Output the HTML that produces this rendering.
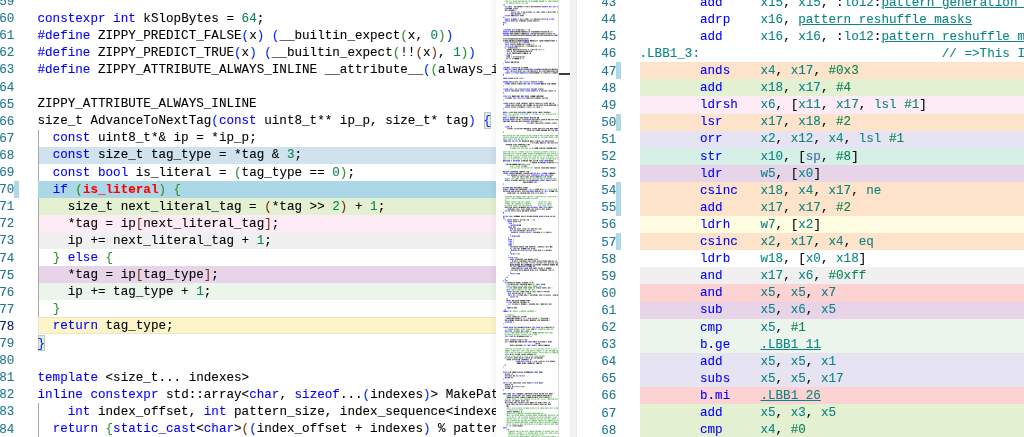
<!DOCTYPE html><html><head><meta charset="utf-8"><style>
html,body{margin:0;padding:0}
body{width:1024px;height:437px;overflow:hidden;position:relative;background:#fff;font-family:"Liberation Mono",monospace;font-size:12.6px;-webkit-text-stroke:0.1px}
#le{will-change:transform;position:absolute;left:0;top:0;width:496px;height:437px;overflow:hidden}
#re{will-change:transform;position:absolute;left:577px;top:0;width:447px;height:437px;overflow:hidden}
.bg{position:absolute;right:0;height:17.1px}
#re .bg{right:-10px}
.ig{position:absolute;width:1px;background:#a8a8a8}
.gb{position:absolute;width:5px;height:17.1px;background:#add8e6}
.bm{position:absolute;width:6.5px;height:16.8px;border:1px solid #c4c4c4;background:#e3ede3;box-sizing:border-box;margin-top:0px}
.ln{position:absolute;text-align:right;color:#237893;height:17.1px;line-height:17.1px;white-space:pre}
.ln.act{color:#0b216f}
.tl{position:absolute;white-space:pre;height:17.1px;line-height:17.1px;color:#000}
.k{color:#0000ff} .n{color:#098658} .b1{color:#0431fa} .b2{color:#319331} .b3{color:#7b3814}
.red{color:#ff0000;font-weight:bold} .t{color:#0e8585} .p{color:#4864aa}
.lk{color:#0e8585;text-decoration:underline;text-underline-offset:1px;text-decoration-thickness:1.2px}
#mm{position:absolute;left:496px;top:0;width:62px;height:437px;background:#fff;overflow:hidden}
#mmsh{position:absolute;left:490px;top:0;width:6px;height:437px;background:linear-gradient(to right,rgba(0,0,0,0),rgba(0,0,0,0.045))}
#mmb{position:absolute;left:558px;top:0;width:1px;height:437px;background:#dddddd}
#ovr{position:absolute;left:559px;top:0;width:11px;height:437px;background:#fff}
#cur{position:absolute;left:0;top:73px;width:11px;height:2px;background:#3c3c3c}
#spl{position:absolute;left:570px;top:0;width:7px;height:437px;background:linear-gradient(to right,#ebebeb,#f3f3f3 35%,#f3f3f3 70%,#e9e9e9)}
</style></head><body><div id="le"><div class="bg" style="top:147px;height:17px;left:38.0px;background:#d0e2ee"></div><div class="bg" style="top:198px;height:17px;left:38.0px;background:#e3f1d2"></div><div class="bg" style="top:215px;height:17px;left:38.0px;background:#fdebf5"></div><div class="bg" style="top:232px;height:17px;left:38.0px;background:#f0f0f0"></div><div class="bg" style="top:266px;height:17px;left:38.0px;background:#e7d4e8"></div><div class="bg" style="top:283px;height:17px;left:38.0px;background:#ebf5eb"></div><div class="ig" style="left:38.0px;top:129.50px;height:188.10px"></div><div style="position:absolute;left:38.0px;right:0;top:317.20px;height:17.30px;box-sizing:border-box;border:1.8px solid #ece6c6;border-right:none;background:#fcf5c9"></div><div class="ig" style="left:38.0px;top:403.10px;height:34.20px"></div><div class="bg" style="top:181px;height:17px;left:38.0px;background:#acd7e6"></div><div class="gb" style="left:14px;top:180.80px"></div><div class="bm" style="left:484.10px;top:112.40px"></div><div class="bm" style="left:38.00px;top:334.70px"></div><div class="ln" style="top:-6.00px;left:-20.70px;width:35px">59</div><div class="ln" style="top:11.10px;left:-20.70px;width:35px">60</div><div class="tl" style="top:10.60px;left:37.50px"><span class="k">constexpr</span> <span class="k">int</span> kSlopBytes = <span class="n">64</span>;</div><div class="ln" style="top:28.20px;left:-20.70px;width:35px">61</div><div class="tl" style="top:27.70px;left:37.50px"><span class="k">#define</span> ZIPPY_PREDICT_FALSE<span class="b1">(</span>x<span class="b1">)</span> <span class="b1">(</span>__builtin_expect<span class="b2">(</span>x, <span class="n">0</span><span class="b2">)</span><span class="b1">)</span></div><div class="ln" style="top:45.30px;left:-20.70px;width:35px">62</div><div class="tl" style="top:44.80px;left:37.50px"><span class="k">#define</span> ZIPPY_PREDICT_TRUE<span class="b1">(</span>x<span class="b1">)</span> <span class="b1">(</span>__builtin_expect<span class="b2">(</span>!!<span class="b3">(</span>x<span class="b3">)</span>, <span class="n">1</span><span class="b2">)</span><span class="b1">)</span></div><div class="ln" style="top:62.40px;left:-20.70px;width:35px">63</div><div class="tl" style="top:61.90px;left:37.50px"><span class="k">#define</span> ZIPPY_ATTRIBUTE_ALWAYS_INLINE __attribute__<span class="b1">(</span><span class="b2">(</span>always_inline<span class="b2">)</span><span class="b1">)</span></div><div class="ln" style="top:79.50px;left:-20.70px;width:35px">64</div><div class="ln" style="top:96.60px;left:-20.70px;width:35px">65</div><div class="tl" style="top:96.10px;left:37.50px">ZIPPY_ATTRIBUTE_ALWAYS_INLINE</div><div class="ln" style="top:113.70px;left:-20.70px;width:35px">66</div><div class="tl" style="top:113.20px;left:37.50px">size_t AdvanceToNextTag<span class="b1">(</span><span class="k">const</span> uint8_t** ip_p, size_t* tag<span class="b1">)</span> <span class="b1">{</span></div><div class="ln" style="top:130.80px;left:-20.70px;width:35px">67</div><div class="tl" style="top:130.30px;left:37.50px">  <span class="k">const</span> uint8_t*&amp; ip = *ip_p;</div><div class="ln" style="top:147.90px;left:-20.70px;width:35px">68</div><div class="tl" style="top:147.40px;left:37.50px">  <span class="k">const</span> size_t tag_type = *tag &amp; <span class="n">3</span>;</div><div class="ln" style="top:165.00px;left:-20.70px;width:35px">69</div><div class="tl" style="top:164.50px;left:37.50px">  <span class="k">const</span> <span class="k">bool</span> is_literal = <span class="b2">(</span>tag_type == <span class="n">0</span><span class="b2">)</span>;</div><div class="ln" style="top:182.10px;left:-20.70px;width:35px">70</div><div class="tl" style="top:181.60px;left:37.50px">  <span class="k">if</span> <span class="b2">(</span><span class="red">is_literal</span><span class="b2">)</span> <span class="b2">{</span></div><div class="ln" style="top:199.20px;left:-20.70px;width:35px">71</div><div class="tl" style="top:198.70px;left:37.50px">    size_t next_literal_tag = <span class="b3">(</span>*tag &gt;&gt; <span class="n">2</span><span class="b3">)</span> + <span class="n">1</span>;</div><div class="ln" style="top:216.30px;left:-20.70px;width:35px">72</div><div class="tl" style="top:215.80px;left:37.50px">    *tag = ip<span class="b3">[</span>next_literal_tag<span class="b3">]</span>;</div><div class="ln" style="top:233.40px;left:-20.70px;width:35px">73</div><div class="tl" style="top:232.90px;left:37.50px">    ip += next_literal_tag + <span class="n">1</span>;</div><div class="ln" style="top:250.50px;left:-20.70px;width:35px">74</div><div class="tl" style="top:250.00px;left:37.50px">  <span class="b2">}</span> <span class="k">else</span> <span class="b2">{</span></div><div class="ln" style="top:267.60px;left:-20.70px;width:35px">75</div><div class="tl" style="top:267.10px;left:37.50px">    *tag = ip<span class="b3">[</span>tag_type<span class="b3">]</span>;</div><div class="ln" style="top:284.70px;left:-20.70px;width:35px">76</div><div class="tl" style="top:284.20px;left:37.50px">    ip += tag_type + <span class="n">1</span>;</div><div class="ln" style="top:301.80px;left:-20.70px;width:35px">77</div><div class="tl" style="top:301.30px;left:37.50px">  <span class="b2">}</span></div><div class="ln act" style="top:318.90px;left:-20.70px;width:35px">78</div><div class="tl" style="top:318.40px;left:37.50px">  <span class="k">return</span> tag_type;</div><div class="ln" style="top:336.00px;left:-20.70px;width:35px">79</div><div class="tl" style="top:335.50px;left:37.50px"><span class="b1">}</span></div><div class="ln" style="top:353.10px;left:-20.70px;width:35px">80</div><div class="ln" style="top:370.20px;left:-20.70px;width:35px">81</div><div class="tl" style="top:369.70px;left:37.50px"><span class="k">template</span> &lt;size_t... indexes&gt;</div><div class="ln" style="top:387.30px;left:-20.70px;width:35px">82</div><div class="tl" style="top:386.80px;left:37.50px"><span class="k">inline</span> <span class="k">constexpr</span> std::array&lt;<span class="k">char</span>, <span class="k">sizeof</span>...<span class="b1">(</span>indexes<span class="b1">)</span>&gt; MakePatternSelectionMask<span class="b1">(</span></div><div class="ln" style="top:404.40px;left:-20.70px;width:35px">83</div><div class="tl" style="top:403.90px;left:37.50px">    <span class="k">int</span> index_offset, <span class="k">int</span> pattern_size, index_sequence&lt;indexes...&gt;<span class="b1">)</span> <span class="b1">{</span></div><div class="ln" style="top:421.50px;left:-20.70px;width:35px">84</div><div class="tl" style="top:421.00px;left:37.50px">  <span class="k">return</span> <span class="b2">{</span><span class="k">static_cast</span>&lt;<span class="k">char</span>&gt;<span class="b3">(</span><span class="b1">(</span>index_offset + indexes<span class="b1">)</span> % pattern_size<span class="b3">)</span>...<span class="b2">}</span>;</div></div><div id="mm"><svg width="62" height="437" style="position:absolute;left:0;top:0"><path fill="#000000" fill-opacity="0.38" d="M17.8 6.0h.8v1.3h-.8zM25.9 6.0h.8v1.3h-.8zM28.6 6.0h.8v1.3h-.8zM29.5 6.0h.8v1.3h-.8zM32.2 6.0h.8v1.3h-.8zM33.1 6.0h.8v1.3h-.8zM9.7 7.8h.8v1.3h-.8zM16.9 7.8h.8v1.3h-.8zM17.8 7.8h.8v1.3h-.8zM20.5 7.8h.8v1.3h-.8zM17.8 9.6h.8v1.3h-.8zM31.3 11.4h.8v1.3h-.8zM40.3 11.4h.8v1.3h-.8zM43.0 11.4h.8v1.3h-.8zM44.8 11.4h.8v1.3h-.8zM50.2 11.4h.8v1.3h-.8zM51.1 11.4h.8v1.3h-.8zM52.9 11.4h.8v1.3h-.8zM59.2 11.4h.8v1.3h-.8zM61.0 11.4h.8v1.3h-.8zM20.5 13.2h.8v1.3h-.8zM25.9 13.2h.8v1.3h-.8zM27.7 13.2h.8v1.3h-.8zM28.6 13.2h.8v1.3h-.8zM18.7 15.0h.8v1.3h-.8zM20.5 15.0h.8v1.3h-.8zM21.4 15.0h.8v1.3h-.8zM25.0 18.5h.8v1.3h-.8zM25.9 18.5h.8v1.3h-.8zM26.8 18.5h.8v1.3h-.8zM32.2 18.5h.8v1.3h-.8zM34.0 18.5h.8v1.3h-.8zM34.9 18.5h.8v1.3h-.8zM35.8 18.5h.8v1.3h-.8zM37.6 18.5h.8v1.3h-.8zM40.3 18.5h.8v1.3h-.8zM47.5 18.5h.8v1.3h-.8zM18.7 20.3h.8v1.3h-.8zM21.4 20.3h.8v1.3h-.8zM30.4 20.3h.8v1.3h-.8zM32.2 20.3h.8v1.3h-.8zM40.3 20.3h.8v1.3h-.8zM42.1 20.3h.8v1.3h-.8zM43.0 20.3h.8v1.3h-.8zM21.4 29.3h.8v1.3h-.8zM24.1 29.3h.8v1.3h-.8zM27.7 29.3h.8v1.3h-.8zM29.5 29.3h.8v1.3h-.8zM16.9 31.1h.8v1.3h-.8zM24.1 31.1h.8v1.3h-.8zM25.0 31.1h.8v1.3h-.8zM30.4 31.1h.8v1.3h-.8zM32.2 31.1h.8v1.3h-.8zM35.8 31.1h.8v1.3h-.8zM38.5 31.1h.8v1.3h-.8zM43.0 31.1h.8v1.3h-.8zM43.9 31.1h.8v1.3h-.8zM44.8 31.1h.8v1.3h-.8zM47.5 31.1h.8v1.3h-.8zM51.1 31.1h.8v1.3h-.8zM16.9 32.9h.8v1.3h-.8zM17.8 32.9h.8v1.3h-.8zM22.3 32.9h.8v1.3h-.8zM23.2 32.9h.8v1.3h-.8zM24.1 32.9h.8v1.3h-.8zM25.0 32.9h.8v1.3h-.8zM28.6 32.9h.8v1.3h-.8zM34.9 32.9h.8v1.3h-.8zM36.7 32.9h.8v1.3h-.8zM40.3 32.9h.8v1.3h-.8zM43.9 32.9h.8v1.3h-.8zM48.4 32.9h.8v1.3h-.8zM51.1 32.9h.8v1.3h-.8zM16.0 34.7h.8v1.3h-.8zM21.4 34.7h.8v1.3h-.8zM24.1 34.7h.8v1.3h-.8zM26.8 34.7h.8v1.3h-.8zM28.6 34.7h.8v1.3h-.8zM35.8 34.7h.8v1.3h-.8zM36.7 34.7h.8v1.3h-.8zM43.0 34.7h.8v1.3h-.8zM45.7 34.7h.8v1.3h-.8zM47.5 34.7h.8v1.3h-.8zM55.6 34.7h.8v1.3h-.8zM56.5 34.7h.8v1.3h-.8zM57.4 34.7h.8v1.3h-.8zM58.3 34.7h.8v1.3h-.8zM61.0 34.7h.8v1.3h-.8zM61.9 34.7h.8v1.3h-.8zM7.9 38.3h.8v1.3h-.8zM10.6 38.3h.8v1.3h-.8zM11.5 38.3h.8v1.3h-.8zM13.3 38.3h.8v1.3h-.8zM22.3 38.3h.8v1.3h-.8zM26.8 38.3h.8v1.3h-.8zM32.2 38.3h.8v1.3h-.8zM7.9 40.1h.8v1.3h-.8zM15.1 40.1h.8v1.3h-.8zM17.8 40.1h.8v1.3h-.8zM19.6 40.1h.8v1.3h-.8zM20.5 40.1h.8v1.3h-.8zM25.9 40.1h.8v1.3h-.8zM38.5 40.1h.8v1.3h-.8zM39.4 40.1h.8v1.3h-.8zM40.3 40.1h.8v1.3h-.8zM41.2 40.1h.8v1.3h-.8zM43.0 40.1h.8v1.3h-.8zM52.9 40.1h.8v1.3h-.8zM15.1 41.8h.8v1.3h-.8zM16.0 41.8h.8v1.3h-.8zM16.9 41.8h.8v1.3h-.8zM18.7 41.8h.8v1.3h-.8zM19.6 41.8h.8v1.3h-.8zM20.5 41.8h.8v1.3h-.8zM21.4 41.8h.8v1.3h-.8zM24.1 41.8h.8v1.3h-.8zM25.9 41.8h.8v1.3h-.8zM30.4 41.8h.8v1.3h-.8zM14.2 43.6h.8v1.3h-.8zM16.9 43.6h.8v1.3h-.8zM17.8 43.6h.8v1.3h-.8zM20.5 43.6h.8v1.3h-.8zM25.0 43.6h.8v1.3h-.8zM25.9 43.6h.8v1.3h-.8zM31.3 43.6h.8v1.3h-.8zM37.6 43.6h.8v1.3h-.8zM21.4 45.4h.8v1.3h-.8zM25.0 45.4h.8v1.3h-.8zM25.9 45.4h.8v1.3h-.8zM28.6 45.4h.8v1.3h-.8zM34.0 45.4h.8v1.3h-.8zM16.9 47.2h.8v1.3h-.8zM18.7 47.2h.8v1.3h-.8zM10.6 49.0h.8v1.3h-.8zM20.5 49.0h.8v1.3h-.8zM23.2 49.0h.8v1.3h-.8zM25.0 49.0h.8v1.3h-.8zM25.9 49.0h.8v1.3h-.8zM27.7 49.0h.8v1.3h-.8zM28.6 49.0h.8v1.3h-.8zM29.5 49.0h.8v1.3h-.8zM34.9 49.0h.8v1.3h-.8zM36.7 49.0h.8v1.3h-.8zM47.5 49.0h.8v1.3h-.8zM10.6 50.8h.8v1.3h-.8zM12.4 50.8h.8v1.3h-.8zM13.3 50.8h.8v1.3h-.8zM16.9 50.8h.8v1.3h-.8zM20.5 50.8h.8v1.3h-.8zM28.6 50.8h.8v1.3h-.8zM32.2 50.8h.8v1.3h-.8zM10.6 52.6h.8v1.3h-.8zM14.2 52.6h.8v1.3h-.8zM20.5 52.6h.8v1.3h-.8zM25.0 52.6h.8v1.3h-.8zM25.9 52.6h.8v1.3h-.8zM26.8 52.6h.8v1.3h-.8zM15.1 56.2h.8v1.3h-.8zM17.8 56.2h.8v1.3h-.8zM20.5 56.2h.8v1.3h-.8zM23.2 56.2h.8v1.3h-.8zM25.0 56.2h.8v1.3h-.8zM11.5 58.0h.8v1.3h-.8zM13.3 58.0h.8v1.3h-.8zM14.2 58.0h.8v1.3h-.8zM16.9 58.0h.8v1.3h-.8zM17.8 58.0h.8v1.3h-.8zM16.9 61.6h.8v1.3h-.8zM17.8 61.6h.8v1.3h-.8zM19.6 61.6h.8v1.3h-.8zM20.5 61.6h.8v1.3h-.8zM15.1 66.9h.8v1.3h-.8zM16.0 66.9h.8v1.3h-.8zM18.7 66.9h.8v1.3h-.8zM20.5 66.9h.8v1.3h-.8zM22.3 66.9h.8v1.3h-.8zM25.9 66.9h.8v1.3h-.8zM26.8 66.9h.8v1.3h-.8zM26.8 68.7h.8v1.3h-.8zM27.7 68.7h.8v1.3h-.8zM44.8 68.7h.8v1.3h-.8zM48.4 68.7h.8v1.3h-.8zM51.1 68.7h.8v1.3h-.8zM58.3 68.7h.8v1.3h-.8zM60.1 68.7h.8v1.3h-.8zM63.7 68.7h.8v1.3h-.8zM68.2 68.7h.8v1.3h-.8zM69.1 68.7h.8v1.3h-.8zM70.0 68.7h.8v1.3h-.8zM71.8 68.7h.8v1.3h-.8zM72.7 68.7h.8v1.3h-.8zM73.6 68.7h.8v1.3h-.8zM74.5 68.7h.8v1.3h-.8zM14.2 70.5h.8v1.3h-.8zM16.0 70.5h.8v1.3h-.8zM16.9 70.5h.8v1.3h-.8zM18.7 70.5h.8v1.3h-.8zM20.5 70.5h.8v1.3h-.8zM21.4 70.5h.8v1.3h-.8zM23.2 70.5h.8v1.3h-.8zM25.0 70.5h.8v1.3h-.8zM30.4 70.5h.8v1.3h-.8zM31.3 70.5h.8v1.3h-.8zM33.1 70.5h.8v1.3h-.8zM34.0 70.5h.8v1.3h-.8zM36.7 70.5h.8v1.3h-.8zM40.3 70.5h.8v1.3h-.8zM43.9 70.5h.8v1.3h-.8zM44.8 70.5h.8v1.3h-.8zM45.7 70.5h.8v1.3h-.8zM46.6 70.5h.8v1.3h-.8zM49.3 70.5h.8v1.3h-.8zM50.2 70.5h.8v1.3h-.8zM53.8 70.5h.8v1.3h-.8zM59.2 70.5h.8v1.3h-.8zM43.0 72.3h.8v1.3h-.8zM46.6 72.3h.8v1.3h-.8zM47.5 72.3h.8v1.3h-.8zM52.0 72.3h.8v1.3h-.8zM62.8 72.3h.8v1.3h-.8zM66.4 72.3h.8v1.3h-.8zM18.7 77.7h.8v1.3h-.8zM19.6 77.7h.8v1.3h-.8zM23.2 77.7h.8v1.3h-.8zM24.1 77.7h.8v1.3h-.8zM25.9 77.7h.8v1.3h-.8zM27.7 77.7h.8v1.3h-.8zM16.0 81.3h.8v1.3h-.8zM21.4 81.3h.8v1.3h-.8zM23.2 81.3h.8v1.3h-.8zM26.8 81.3h.8v1.3h-.8zM27.7 81.3h.8v1.3h-.8zM39.4 81.3h.8v1.3h-.8zM43.0 81.3h.8v1.3h-.8zM46.6 81.3h.8v1.3h-.8zM17.8 83.1h.8v1.3h-.8zM19.6 83.1h.8v1.3h-.8zM22.3 83.1h.8v1.3h-.8zM47.5 83.1h.8v1.3h-.8zM48.4 83.1h.8v1.3h-.8zM52.0 83.1h.8v1.3h-.8zM53.8 83.1h.8v1.3h-.8zM57.4 83.1h.8v1.3h-.8zM7.0 84.9h.8v1.3h-.8zM13.3 88.4h.8v1.3h-.8zM16.0 88.4h.8v1.3h-.8zM16.9 88.4h.8v1.3h-.8zM18.7 88.4h.8v1.3h-.8zM22.3 88.4h.8v1.3h-.8zM23.2 88.4h.8v1.3h-.8zM25.9 88.4h.8v1.3h-.8zM27.7 88.4h.8v1.3h-.8zM37.6 88.4h.8v1.3h-.8zM43.0 88.4h.8v1.3h-.8zM45.7 88.4h.8v1.3h-.8zM17.8 90.2h.8v1.3h-.8zM47.5 90.2h.8v1.3h-.8zM52.0 90.2h.8v1.3h-.8zM55.6 90.2h.8v1.3h-.8zM58.3 90.2h.8v1.3h-.8zM19.6 95.6h.8v1.3h-.8zM20.5 95.6h.8v1.3h-.8zM23.2 95.6h.8v1.3h-.8zM28.6 95.6h.8v1.3h-.8zM30.4 95.6h.8v1.3h-.8zM34.0 95.6h.8v1.3h-.8zM34.9 95.6h.8v1.3h-.8zM40.3 95.6h.8v1.3h-.8zM43.0 95.6h.8v1.3h-.8zM8.8 97.4h.8v1.3h-.8zM10.6 97.4h.8v1.3h-.8zM34.0 97.4h.8v1.3h-.8zM38.5 97.4h.8v1.3h-.8zM39.4 97.4h.8v1.3h-.8zM43.9 97.4h.8v1.3h-.8zM48.4 97.4h.8v1.3h-.8zM49.3 97.4h.8v1.3h-.8zM7.0 99.2h.8v1.3h-.8zM14.2 102.8h.8v1.3h-.8zM16.0 102.8h.8v1.3h-.8zM16.9 102.8h.8v1.3h-.8zM19.6 102.8h.8v1.3h-.8zM20.5 102.8h.8v1.3h-.8zM25.0 102.8h.8v1.3h-.8zM31.3 102.8h.8v1.3h-.8zM35.8 102.8h.8v1.3h-.8zM37.6 102.8h.8v1.3h-.8zM43.0 102.8h.8v1.3h-.8zM43.9 102.8h.8v1.3h-.8zM44.8 102.8h.8v1.3h-.8zM47.5 102.8h.8v1.3h-.8zM49.3 102.8h.8v1.3h-.8zM9.7 104.6h.8v1.3h-.8zM12.4 104.6h.8v1.3h-.8zM17.8 104.6h.8v1.3h-.8zM20.5 104.6h.8v1.3h-.8zM23.2 104.6h.8v1.3h-.8zM26.8 104.6h.8v1.3h-.8zM30.4 104.6h.8v1.3h-.8zM32.2 104.6h.8v1.3h-.8zM36.7 104.6h.8v1.3h-.8zM43.0 104.6h.8v1.3h-.8zM44.8 104.6h.8v1.3h-.8zM46.6 104.6h.8v1.3h-.8zM49.3 104.6h.8v1.3h-.8zM50.2 104.6h.8v1.3h-.8zM56.5 104.6h.8v1.3h-.8zM61.0 104.6h.8v1.3h-.8zM61.9 104.6h.8v1.3h-.8zM16.9 106.4h.8v1.3h-.8zM19.6 106.4h.8v1.3h-.8zM22.3 106.4h.8v1.3h-.8zM27.7 106.4h.8v1.3h-.8zM30.4 106.4h.8v1.3h-.8zM31.3 106.4h.8v1.3h-.8zM34.0 106.4h.8v1.3h-.8zM34.9 106.4h.8v1.3h-.8zM36.7 106.4h.8v1.3h-.8zM37.6 106.4h.8v1.3h-.8zM40.3 106.4h.8v1.3h-.8zM7.0 108.1h.8v1.3h-.8zM12.4 111.7h.8v1.3h-.8zM13.3 111.7h.8v1.3h-.8zM14.2 111.7h.8v1.3h-.8zM18.7 111.7h.8v1.3h-.8zM25.0 111.7h.8v1.3h-.8zM34.9 111.7h.8v1.3h-.8zM42.1 111.7h.8v1.3h-.8zM45.7 111.7h.8v1.3h-.8zM47.5 111.7h.8v1.3h-.8zM52.9 111.7h.8v1.3h-.8zM53.8 111.7h.8v1.3h-.8zM23.2 117.1h.8v1.3h-.8zM30.4 117.1h.8v1.3h-.8zM32.2 117.1h.8v1.3h-.8zM34.9 117.1h.8v1.3h-.8zM36.7 117.1h.8v1.3h-.8zM37.6 117.1h.8v1.3h-.8zM21.4 118.9h.8v1.3h-.8zM22.3 118.9h.8v1.3h-.8zM24.1 118.9h.8v1.3h-.8zM26.8 118.9h.8v1.3h-.8zM27.7 118.9h.8v1.3h-.8zM38.5 118.9h.8v1.3h-.8zM39.4 118.9h.8v1.3h-.8zM42.1 118.9h.8v1.3h-.8zM44.8 118.9h.8v1.3h-.8zM49.3 118.9h.8v1.3h-.8zM53.8 118.9h.8v1.3h-.8zM54.7 118.9h.8v1.3h-.8zM55.6 118.9h.8v1.3h-.8zM9.7 120.7h.8v1.3h-.8zM10.6 120.7h.8v1.3h-.8zM17.8 120.7h.8v1.3h-.8zM18.7 120.7h.8v1.3h-.8zM35.8 120.7h.8v1.3h-.8zM37.6 120.7h.8v1.3h-.8zM41.2 120.7h.8v1.3h-.8zM42.1 120.7h.8v1.3h-.8zM43.9 120.7h.8v1.3h-.8zM32.2 122.5h.8v1.3h-.8zM33.1 122.5h.8v1.3h-.8zM34.0 122.5h.8v1.3h-.8zM37.6 122.5h.8v1.3h-.8zM42.1 122.5h.8v1.3h-.8zM44.8 122.5h.8v1.3h-.8zM48.4 122.5h.8v1.3h-.8zM55.6 122.5h.8v1.3h-.8zM60.1 122.5h.8v1.3h-.8zM12.4 127.9h.8v1.3h-.8zM14.2 127.9h.8v1.3h-.8zM16.0 127.9h.8v1.3h-.8zM17.8 127.9h.8v1.3h-.8zM18.7 127.9h.8v1.3h-.8zM23.2 127.9h.8v1.3h-.8zM25.9 127.9h.8v1.3h-.8zM33.1 127.9h.8v1.3h-.8zM35.8 127.9h.8v1.3h-.8zM36.7 127.9h.8v1.3h-.8zM38.5 127.9h.8v1.3h-.8zM46.6 127.9h.8v1.3h-.8zM47.5 127.9h.8v1.3h-.8zM33.1 129.7h.8v1.3h-.8zM35.8 129.7h.8v1.3h-.8zM39.4 129.7h.8v1.3h-.8zM47.5 129.7h.8v1.3h-.8zM53.8 129.7h.8v1.3h-.8zM56.5 129.7h.8v1.3h-.8zM27.7 140.4h.8v1.3h-.8zM30.4 140.4h.8v1.3h-.8zM31.3 140.4h.8v1.3h-.8zM38.5 140.4h.8v1.3h-.8zM39.4 140.4h.8v1.3h-.8zM42.1 140.4h.8v1.3h-.8zM43.9 140.4h.8v1.3h-.8zM54.7 140.4h.8v1.3h-.8zM57.4 140.4h.8v1.3h-.8zM36.7 142.2h.8v1.3h-.8zM37.6 142.2h.8v1.3h-.8zM38.5 142.2h.8v1.3h-.8zM39.4 142.2h.8v1.3h-.8zM47.5 142.2h.8v1.3h-.8zM48.4 142.2h.8v1.3h-.8zM51.1 142.2h.8v1.3h-.8zM57.4 142.2h.8v1.3h-.8zM58.3 142.2h.8v1.3h-.8zM60.1 142.2h.8v1.3h-.8zM17.8 144.0h.8v1.3h-.8zM25.9 144.0h.8v1.3h-.8zM30.4 144.0h.8v1.3h-.8zM31.3 144.0h.8v1.3h-.8zM27.7 145.8h.8v1.3h-.8zM30.4 145.8h.8v1.3h-.8zM43.0 147.6h.8v1.3h-.8zM43.9 147.6h.8v1.3h-.8zM46.6 147.6h.8v1.3h-.8zM47.5 147.6h.8v1.3h-.8zM50.2 147.6h.8v1.3h-.8zM25.0 160.1h.8v1.3h-.8zM25.9 160.1h.8v1.3h-.8zM29.5 160.1h.8v1.3h-.8zM37.6 160.1h.8v1.3h-.8zM39.4 160.1h.8v1.3h-.8zM40.3 160.1h.8v1.3h-.8zM43.0 160.1h.8v1.3h-.8zM43.9 160.1h.8v1.3h-.8zM39.4 161.9h.8v1.3h-.8zM43.0 161.9h.8v1.3h-.8zM43.9 161.9h.8v1.3h-.8zM46.6 161.9h.8v1.3h-.8zM49.3 161.9h.8v1.3h-.8zM52.0 161.9h.8v1.3h-.8zM55.6 161.9h.8v1.3h-.8zM59.2 161.9h.8v1.3h-.8zM60.1 161.9h.8v1.3h-.8zM61.0 161.9h.8v1.3h-.8zM9.7 163.7h.8v1.3h-.8zM15.1 163.7h.8v1.3h-.8zM25.0 163.7h.8v1.3h-.8zM26.8 163.7h.8v1.3h-.8zM27.7 163.7h.8v1.3h-.8zM30.4 163.7h.8v1.3h-.8zM31.3 163.7h.8v1.3h-.8zM32.2 163.7h.8v1.3h-.8zM41.2 167.3h.8v1.3h-.8zM44.8 167.3h.8v1.3h-.8zM49.3 167.3h.8v1.3h-.8zM59.2 167.3h.8v1.3h-.8zM8.8 170.9h.8v1.3h-.8zM9.7 170.9h.8v1.3h-.8zM11.5 170.9h.8v1.3h-.8zM14.2 170.9h.8v1.3h-.8zM23.2 170.9h.8v1.3h-.8zM28.6 170.9h.8v1.3h-.8zM30.4 170.9h.8v1.3h-.8zM22.3 172.7h.8v1.3h-.8zM26.8 172.7h.8v1.3h-.8zM27.7 172.7h.8v1.3h-.8zM38.5 172.7h.8v1.3h-.8zM42.1 172.7h.8v1.3h-.8zM43.0 172.7h.8v1.3h-.8zM44.8 172.7h.8v1.3h-.8zM52.0 172.7h.8v1.3h-.8zM12.4 174.5h.8v1.3h-.8zM13.3 174.5h.8v1.3h-.8zM23.2 174.5h.8v1.3h-.8zM24.1 174.5h.8v1.3h-.8zM25.0 174.5h.8v1.3h-.8zM27.7 174.5h.8v1.3h-.8zM30.4 174.5h.8v1.3h-.8zM32.2 174.5h.8v1.3h-.8zM34.9 174.5h.8v1.3h-.8zM54.7 174.5h.8v1.3h-.8zM56.5 174.5h.8v1.3h-.8zM17.8 176.2h.8v1.3h-.8zM21.4 176.2h.8v1.3h-.8zM25.9 176.2h.8v1.3h-.8zM26.8 176.2h.8v1.3h-.8zM32.2 176.2h.8v1.3h-.8zM35.8 176.2h.8v1.3h-.8zM43.0 176.2h.8v1.3h-.8zM46.6 176.2h.8v1.3h-.8zM47.5 176.2h.8v1.3h-.8zM48.4 176.2h.8v1.3h-.8zM52.9 176.2h.8v1.3h-.8zM16.0 179.8h.8v1.3h-.8zM21.4 179.8h.8v1.3h-.8zM25.9 179.8h.8v1.3h-.8zM27.7 179.8h.8v1.3h-.8zM28.6 179.8h.8v1.3h-.8zM31.3 179.8h.8v1.3h-.8zM32.2 179.8h.8v1.3h-.8zM33.1 179.8h.8v1.3h-.8zM56.5 179.8h.8v1.3h-.8zM58.3 179.8h.8v1.3h-.8zM59.2 179.8h.8v1.3h-.8zM60.1 179.8h.8v1.3h-.8zM26.8 181.6h.8v1.3h-.8zM32.2 181.6h.8v1.3h-.8zM36.7 181.6h.8v1.3h-.8zM40.3 181.6h.8v1.3h-.8zM7.9 187.0h.8v1.3h-.8zM8.8 187.0h.8v1.3h-.8zM20.5 187.0h.8v1.3h-.8zM26.8 187.0h.8v1.3h-.8zM31.3 187.0h.8v1.3h-.8zM44.8 188.8h.8v1.3h-.8zM45.7 188.8h.8v1.3h-.8zM8.8 190.6h.8v1.3h-.8zM9.7 190.6h.8v1.3h-.8zM11.5 190.6h.8v1.3h-.8zM12.4 190.6h.8v1.3h-.8zM19.6 190.6h.8v1.3h-.8zM20.5 190.6h.8v1.3h-.8zM23.2 190.6h.8v1.3h-.8zM24.1 190.6h.8v1.3h-.8zM26.8 190.6h.8v1.3h-.8zM30.4 190.6h.8v1.3h-.8zM38.5 190.6h.8v1.3h-.8zM42.1 190.6h.8v1.3h-.8zM43.9 190.6h.8v1.3h-.8zM46.6 190.6h.8v1.3h-.8zM53.8 190.6h.8v1.3h-.8zM59.2 190.6h.8v1.3h-.8zM61.0 190.6h.8v1.3h-.8zM15.1 192.4h.8v1.3h-.8zM16.0 192.4h.8v1.3h-.8zM20.5 192.4h.8v1.3h-.8zM21.4 192.4h.8v1.3h-.8zM27.7 192.4h.8v1.3h-.8zM35.8 192.4h.8v1.3h-.8zM40.3 192.4h.8v1.3h-.8zM41.2 192.4h.8v1.3h-.8zM46.6 192.4h.8v1.3h-.8zM47.5 192.4h.8v1.3h-.8zM49.3 192.4h.8v1.3h-.8zM11.5 206.7h.8v1.3h-.8zM12.4 206.7h.8v1.3h-.8zM14.2 206.7h.8v1.3h-.8zM18.7 206.7h.8v1.3h-.8zM22.3 206.7h.8v1.3h-.8zM24.1 206.7h.8v1.3h-.8zM33.1 206.7h.8v1.3h-.8zM52.0 206.7h.8v1.3h-.8zM54.7 206.7h.8v1.3h-.8zM11.5 208.5h.8v1.3h-.8zM19.6 208.5h.8v1.3h-.8zM20.5 208.5h.8v1.3h-.8zM22.3 208.5h.8v1.3h-.8zM23.2 208.5h.8v1.3h-.8zM25.9 208.5h.8v1.3h-.8zM29.5 208.5h.8v1.3h-.8zM34.9 208.5h.8v1.3h-.8zM37.6 208.5h.8v1.3h-.8zM40.3 208.5h.8v1.3h-.8zM42.1 208.5h.8v1.3h-.8zM43.0 208.5h.8v1.3h-.8zM48.4 208.5h.8v1.3h-.8zM17.8 210.3h.8v1.3h-.8zM18.7 210.3h.8v1.3h-.8zM23.2 210.3h.8v1.3h-.8zM27.7 210.3h.8v1.3h-.8zM28.6 210.3h.8v1.3h-.8zM31.3 210.3h.8v1.3h-.8zM27.7 215.7h.8v1.3h-.8zM29.5 215.7h.8v1.3h-.8zM32.2 215.7h.8v1.3h-.8zM38.5 215.7h.8v1.3h-.8zM49.3 215.7h.8v1.3h-.8zM51.1 215.7h.8v1.3h-.8zM53.8 215.7h.8v1.3h-.8zM20.5 219.3h.8v1.3h-.8zM21.4 219.3h.8v1.3h-.8zM22.3 219.3h.8v1.3h-.8zM25.0 219.3h.8v1.3h-.8zM25.9 219.3h.8v1.3h-.8zM30.4 219.3h.8v1.3h-.8zM38.5 219.3h.8v1.3h-.8zM17.8 221.0h.8v1.3h-.8zM18.7 221.0h.8v1.3h-.8zM22.3 221.0h.8v1.3h-.8zM22.3 224.6h.8v1.3h-.8zM18.7 228.2h.8v1.3h-.8zM25.9 228.2h.8v1.3h-.8zM26.8 228.2h.8v1.3h-.8zM28.6 228.2h.8v1.3h-.8zM31.3 228.2h.8v1.3h-.8zM37.6 228.2h.8v1.3h-.8zM38.5 228.2h.8v1.3h-.8zM42.1 228.2h.8v1.3h-.8zM43.0 228.2h.8v1.3h-.8zM23.2 230.0h.8v1.3h-.8zM25.9 230.0h.8v1.3h-.8zM28.6 230.0h.8v1.3h-.8zM30.4 230.0h.8v1.3h-.8zM32.2 230.0h.8v1.3h-.8zM33.1 230.0h.8v1.3h-.8zM34.0 230.0h.8v1.3h-.8zM37.6 230.0h.8v1.3h-.8zM38.5 230.0h.8v1.3h-.8zM16.9 231.8h.8v1.3h-.8zM19.6 231.8h.8v1.3h-.8zM21.4 231.8h.8v1.3h-.8zM23.2 231.8h.8v1.3h-.8zM40.3 231.8h.8v1.3h-.8zM45.7 231.8h.8v1.3h-.8zM52.9 231.8h.8v1.3h-.8zM53.8 231.8h.8v1.3h-.8zM14.2 233.6h.8v1.3h-.8zM21.4 235.4h.8v1.3h-.8zM16.0 246.1h.8v1.3h-.8zM16.9 246.1h.8v1.3h-.8zM20.5 246.1h.8v1.3h-.8zM36.7 246.1h.8v1.3h-.8zM37.6 246.1h.8v1.3h-.8zM41.2 246.1h.8v1.3h-.8zM42.1 246.1h.8v1.3h-.8zM45.7 246.1h.8v1.3h-.8zM47.5 246.1h.8v1.3h-.8zM49.3 246.1h.8v1.3h-.8zM51.1 246.1h.8v1.3h-.8zM52.0 246.1h.8v1.3h-.8zM23.2 247.9h.8v1.3h-.8zM25.9 247.9h.8v1.3h-.8zM31.3 247.9h.8v1.3h-.8zM35.8 247.9h.8v1.3h-.8zM16.0 249.7h.8v1.3h-.8zM17.8 249.7h.8v1.3h-.8zM23.2 249.7h.8v1.3h-.8zM52.0 249.7h.8v1.3h-.8zM20.5 253.3h.8v1.3h-.8zM21.4 253.3h.8v1.3h-.8zM23.2 253.3h.8v1.3h-.8zM12.4 255.1h.8v1.3h-.8zM18.7 258.7h.8v1.3h-.8zM20.5 258.7h.8v1.3h-.8zM27.7 258.7h.8v1.3h-.8zM37.6 258.7h.8v1.3h-.8zM39.4 258.7h.8v1.3h-.8zM40.3 258.7h.8v1.3h-.8zM16.9 260.5h.8v1.3h-.8zM20.5 260.5h.8v1.3h-.8zM21.4 260.5h.8v1.3h-.8zM23.2 260.5h.8v1.3h-.8zM25.9 260.5h.8v1.3h-.8zM31.3 260.5h.8v1.3h-.8zM36.7 260.5h.8v1.3h-.8zM43.9 260.5h.8v1.3h-.8zM51.1 260.5h.8v1.3h-.8zM56.5 260.5h.8v1.3h-.8zM59.2 260.5h.8v1.3h-.8zM18.7 262.3h.8v1.3h-.8zM19.6 262.3h.8v1.3h-.8zM25.9 262.3h.8v1.3h-.8zM26.8 262.3h.8v1.3h-.8zM27.7 262.3h.8v1.3h-.8zM28.6 262.3h.8v1.3h-.8zM29.5 262.3h.8v1.3h-.8zM33.1 262.3h.8v1.3h-.8zM34.0 262.3h.8v1.3h-.8zM34.9 262.3h.8v1.3h-.8zM35.8 262.3h.8v1.3h-.8zM36.7 262.3h.8v1.3h-.8zM38.5 262.3h.8v1.3h-.8zM40.3 262.3h.8v1.3h-.8zM42.1 262.3h.8v1.3h-.8zM43.0 262.3h.8v1.3h-.8zM44.8 262.3h.8v1.3h-.8zM47.5 262.3h.8v1.3h-.8zM49.3 262.3h.8v1.3h-.8zM50.2 262.3h.8v1.3h-.8zM52.9 262.3h.8v1.3h-.8zM54.7 262.3h.8v1.3h-.8zM55.6 262.3h.8v1.3h-.8zM59.2 262.3h.8v1.3h-.8zM26.8 264.1h.8v1.3h-.8zM37.6 264.1h.8v1.3h-.8zM38.5 264.1h.8v1.3h-.8zM39.4 264.1h.8v1.3h-.8zM46.6 264.1h.8v1.3h-.8zM21.4 265.8h.8v1.3h-.8zM25.9 265.8h.8v1.3h-.8zM30.4 265.8h.8v1.3h-.8zM31.3 265.8h.8v1.3h-.8zM32.2 265.8h.8v1.3h-.8zM38.5 265.8h.8v1.3h-.8zM15.1 267.6h.8v1.3h-.8zM23.2 267.6h.8v1.3h-.8zM40.3 267.6h.8v1.3h-.8zM42.1 267.6h.8v1.3h-.8zM43.9 267.6h.8v1.3h-.8zM54.7 267.6h.8v1.3h-.8zM16.9 269.4h.8v1.3h-.8zM17.8 269.4h.8v1.3h-.8zM25.0 269.4h.8v1.3h-.8zM34.9 269.4h.8v1.3h-.8zM37.6 269.4h.8v1.3h-.8zM40.3 269.4h.8v1.3h-.8zM43.0 269.4h.8v1.3h-.8zM52.0 269.4h.8v1.3h-.8zM57.4 269.4h.8v1.3h-.8zM14.2 271.2h.8v1.3h-.8zM21.4 273.0h.8v1.3h-.8zM12.4 274.8h.8v1.3h-.8zM10.6 282.0h.8v1.3h-.8zM16.0 282.0h.8v1.3h-.8zM16.9 282.0h.8v1.3h-.8zM24.1 282.0h.8v1.3h-.8zM26.8 282.0h.8v1.3h-.8zM13.3 283.8h.8v1.3h-.8zM14.2 283.8h.8v1.3h-.8zM16.9 283.8h.8v1.3h-.8zM20.5 283.8h.8v1.3h-.8zM22.3 283.8h.8v1.3h-.8zM19.6 287.3h.8v1.3h-.8zM26.8 287.3h.8v1.3h-.8zM27.7 287.3h.8v1.3h-.8zM36.7 287.3h.8v1.3h-.8zM38.5 287.3h.8v1.3h-.8zM41.2 287.3h.8v1.3h-.8zM50.2 287.3h.8v1.3h-.8zM53.8 287.3h.8v1.3h-.8zM55.6 287.3h.8v1.3h-.8zM17.8 290.9h.8v1.3h-.8zM22.3 290.9h.8v1.3h-.8zM24.1 290.9h.8v1.3h-.8zM38.5 290.9h.8v1.3h-.8zM39.4 290.9h.8v1.3h-.8zM43.9 290.9h.8v1.3h-.8zM44.8 290.9h.8v1.3h-.8zM47.5 290.9h.8v1.3h-.8zM50.2 290.9h.8v1.3h-.8zM52.9 290.9h.8v1.3h-.8zM13.3 292.7h.8v1.3h-.8zM17.8 292.7h.8v1.3h-.8zM18.7 292.7h.8v1.3h-.8zM26.8 292.7h.8v1.3h-.8zM31.3 292.7h.8v1.3h-.8zM20.5 294.5h.8v1.3h-.8zM21.4 294.5h.8v1.3h-.8zM22.3 294.5h.8v1.3h-.8zM23.2 294.5h.8v1.3h-.8zM30.4 294.5h.8v1.3h-.8zM35.8 294.5h.8v1.3h-.8zM38.5 294.5h.8v1.3h-.8zM41.2 294.5h.8v1.3h-.8zM45.7 294.5h.8v1.3h-.8zM48.4 294.5h.8v1.3h-.8zM49.3 294.5h.8v1.3h-.8zM52.9 294.5h.8v1.3h-.8zM60.1 294.5h.8v1.3h-.8zM61.9 294.5h.8v1.3h-.8zM12.4 299.9h.8v1.3h-.8zM14.2 299.9h.8v1.3h-.8zM17.8 299.9h.8v1.3h-.8zM18.7 299.9h.8v1.3h-.8zM20.5 301.7h.8v1.3h-.8zM24.1 301.7h.8v1.3h-.8zM25.9 301.7h.8v1.3h-.8zM29.5 301.7h.8v1.3h-.8zM30.4 301.7h.8v1.3h-.8zM13.3 303.5h.8v1.3h-.8zM14.2 303.5h.8v1.3h-.8zM16.9 303.5h.8v1.3h-.8zM17.8 303.5h.8v1.3h-.8zM19.6 303.5h.8v1.3h-.8zM21.4 303.5h.8v1.3h-.8zM22.3 303.5h.8v1.3h-.8zM23.2 303.5h.8v1.3h-.8zM29.5 303.5h.8v1.3h-.8zM48.4 303.5h.8v1.3h-.8zM50.2 303.5h.8v1.3h-.8zM20.5 307.1h.8v1.3h-.8zM16.0 316.0h.8v1.3h-.8zM20.5 316.0h.8v1.3h-.8zM21.4 316.0h.8v1.3h-.8zM23.2 316.0h.8v1.3h-.8zM26.8 316.0h.8v1.3h-.8zM27.7 316.0h.8v1.3h-.8zM23.2 317.8h.8v1.3h-.8zM24.1 317.8h.8v1.3h-.8zM25.0 317.8h.8v1.3h-.8zM26.8 317.8h.8v1.3h-.8zM27.7 317.8h.8v1.3h-.8zM33.1 317.8h.8v1.3h-.8zM35.8 317.8h.8v1.3h-.8zM36.7 317.8h.8v1.3h-.8zM44.8 317.8h.8v1.3h-.8zM46.6 317.8h.8v1.3h-.8zM48.4 317.8h.8v1.3h-.8zM52.9 317.8h.8v1.3h-.8zM13.3 319.6h.8v1.3h-.8zM18.7 319.6h.8v1.3h-.8zM20.5 319.6h.8v1.3h-.8zM23.2 319.6h.8v1.3h-.8zM24.1 319.6h.8v1.3h-.8zM25.9 319.6h.8v1.3h-.8zM29.5 319.6h.8v1.3h-.8zM32.2 319.6h.8v1.3h-.8zM37.6 319.6h.8v1.3h-.8zM41.2 319.6h.8v1.3h-.8zM49.3 319.6h.8v1.3h-.8zM52.9 319.6h.8v1.3h-.8zM7.0 323.2h.8v1.3h-.8zM17.8 326.8h.8v1.3h-.8zM31.3 326.8h.8v1.3h-.8zM33.1 326.8h.8v1.3h-.8zM45.7 326.8h.8v1.3h-.8zM49.3 326.8h.8v1.3h-.8zM52.9 326.8h.8v1.3h-.8zM56.5 326.8h.8v1.3h-.8zM34.9 328.6h.8v1.3h-.8zM23.2 330.4h.8v1.3h-.8zM26.8 330.4h.8v1.3h-.8zM27.7 330.4h.8v1.3h-.8zM36.7 332.1h.8v1.3h-.8zM38.5 332.1h.8v1.3h-.8zM40.3 332.1h.8v1.3h-.8zM20.5 335.7h.8v1.3h-.8zM22.3 335.7h.8v1.3h-.8zM29.5 335.7h.8v1.3h-.8zM10.6 339.3h.8v1.3h-.8zM12.4 339.3h.8v1.3h-.8zM18.7 339.3h.8v1.3h-.8zM22.3 339.3h.8v1.3h-.8zM25.0 339.3h.8v1.3h-.8zM25.9 339.3h.8v1.3h-.8zM26.8 339.3h.8v1.3h-.8zM8.8 341.1h.8v1.3h-.8zM10.6 341.1h.8v1.3h-.8zM12.4 341.1h.8v1.3h-.8zM13.3 341.1h.8v1.3h-.8zM25.0 341.1h.8v1.3h-.8zM25.9 341.1h.8v1.3h-.8zM39.4 341.1h.8v1.3h-.8zM43.0 341.1h.8v1.3h-.8zM43.9 341.1h.8v1.3h-.8zM45.7 341.1h.8v1.3h-.8zM50.2 341.1h.8v1.3h-.8zM39.4 342.9h.8v1.3h-.8zM41.2 342.9h.8v1.3h-.8zM17.8 344.7h.8v1.3h-.8zM21.4 344.7h.8v1.3h-.8zM25.9 344.7h.8v1.3h-.8zM39.4 344.7h.8v1.3h-.8zM40.3 344.7h.8v1.3h-.8zM42.1 344.7h.8v1.3h-.8zM45.7 344.7h.8v1.3h-.8zM8.8 353.7h.8v1.3h-.8zM9.7 353.7h.8v1.3h-.8zM10.6 353.7h.8v1.3h-.8zM11.5 353.7h.8v1.3h-.8zM12.4 353.7h.8v1.3h-.8zM15.1 353.7h.8v1.3h-.8zM16.9 353.7h.8v1.3h-.8zM19.6 353.7h.8v1.3h-.8zM21.4 353.7h.8v1.3h-.8zM25.0 353.7h.8v1.3h-.8zM28.6 353.7h.8v1.3h-.8zM38.5 353.7h.8v1.3h-.8zM39.4 353.7h.8v1.3h-.8zM13.3 357.2h.8v1.3h-.8zM14.2 357.2h.8v1.3h-.8zM16.0 357.2h.8v1.3h-.8zM25.0 357.2h.8v1.3h-.8zM26.8 357.2h.8v1.3h-.8zM27.7 357.2h.8v1.3h-.8zM32.2 357.2h.8v1.3h-.8zM36.7 357.2h.8v1.3h-.8zM40.3 357.2h.8v1.3h-.8zM16.9 359.0h.8v1.3h-.8zM21.4 359.0h.8v1.3h-.8zM25.0 359.0h.8v1.3h-.8zM31.3 359.0h.8v1.3h-.8zM32.2 359.0h.8v1.3h-.8zM34.9 359.0h.8v1.3h-.8zM37.6 360.8h.8v1.3h-.8zM38.5 360.8h.8v1.3h-.8zM39.4 360.8h.8v1.3h-.8zM42.1 360.8h.8v1.3h-.8zM43.0 360.8h.8v1.3h-.8zM45.7 360.8h.8v1.3h-.8zM47.5 360.8h.8v1.3h-.8zM48.4 360.8h.8v1.3h-.8zM51.1 360.8h.8v1.3h-.8zM20.5 362.6h.8v1.3h-.8zM26.8 362.6h.8v1.3h-.8zM29.5 362.6h.8v1.3h-.8zM31.3 362.6h.8v1.3h-.8zM37.6 362.6h.8v1.3h-.8zM38.5 362.6h.8v1.3h-.8zM43.0 362.6h.8v1.3h-.8zM43.9 362.6h.8v1.3h-.8zM7.0 366.2h.8v1.3h-.8zM12.4 371.6h.8v1.3h-.8zM13.3 371.6h.8v1.3h-.8zM16.0 371.6h.8v1.3h-.8zM22.3 371.6h.8v1.3h-.8zM24.1 371.6h.8v1.3h-.8zM27.7 371.6h.8v1.3h-.8zM29.5 371.6h.8v1.3h-.8zM10.6 373.4h.8v1.3h-.8zM15.1 373.4h.8v1.3h-.8zM10.6 375.2h.8v1.3h-.8zM11.5 375.2h.8v1.3h-.8zM26.8 375.2h.8v1.3h-.8zM7.0 378.7h.8v1.3h-.8zM12.4 382.3h.8v1.3h-.8zM13.3 382.3h.8v1.3h-.8zM15.1 382.3h.8v1.3h-.8zM20.5 382.3h.8v1.3h-.8zM25.9 382.3h.8v1.3h-.8zM29.5 382.3h.8v1.3h-.8zM12.4 384.1h.8v1.3h-.8zM15.1 384.1h.8v1.3h-.8zM8.8 385.9h.8v1.3h-.8zM10.6 385.9h.8v1.3h-.8zM13.3 385.9h.8v1.3h-.8zM16.9 385.9h.8v1.3h-.8zM17.8 385.9h.8v1.3h-.8zM27.7 385.9h.8v1.3h-.8zM8.8 393.1h.8v1.3h-.8zM11.5 393.1h.8v1.3h-.8zM21.4 393.1h.8v1.3h-.8zM26.8 393.1h.8v1.3h-.8zM31.3 393.1h.8v1.3h-.8zM34.0 393.1h.8v1.3h-.8zM35.8 393.1h.8v1.3h-.8zM38.5 393.1h.8v1.3h-.8zM40.3 393.1h.8v1.3h-.8zM44.8 393.1h.8v1.3h-.8zM50.2 393.1h.8v1.3h-.8zM16.9 394.9h.8v1.3h-.8zM19.6 394.9h.8v1.3h-.8zM24.1 394.9h.8v1.3h-.8zM37.6 394.9h.8v1.3h-.8zM51.1 394.9h.8v1.3h-.8zM15.1 396.7h.8v1.3h-.8zM24.1 396.7h.8v1.3h-.8zM31.3 396.7h.8v1.3h-.8zM34.9 396.7h.8v1.3h-.8zM40.3 396.7h.8v1.3h-.8zM43.9 396.7h.8v1.3h-.8zM45.7 396.7h.8v1.3h-.8zM52.9 396.7h.8v1.3h-.8zM54.7 396.7h.8v1.3h-.8zM11.5 400.2h.8v1.3h-.8zM12.4 400.2h.8v1.3h-.8zM14.2 400.2h.8v1.3h-.8zM16.0 400.2h.8v1.3h-.8zM28.6 400.2h.8v1.3h-.8zM32.2 400.2h.8v1.3h-.8zM12.4 402.0h.8v1.3h-.8zM13.3 402.0h.8v1.3h-.8zM20.5 402.0h.8v1.3h-.8zM24.1 402.0h.8v1.3h-.8zM25.9 402.0h.8v1.3h-.8zM27.7 402.0h.8v1.3h-.8zM30.4 402.0h.8v1.3h-.8zM32.2 402.0h.8v1.3h-.8zM38.5 402.0h.8v1.3h-.8zM46.6 402.0h.8v1.3h-.8zM47.5 402.0h.8v1.3h-.8zM50.2 402.0h.8v1.3h-.8zM52.0 402.0h.8v1.3h-.8zM15.1 403.8h.8v1.3h-.8zM19.6 403.8h.8v1.3h-.8zM28.6 403.8h.8v1.3h-.8zM31.3 403.8h.8v1.3h-.8zM33.1 403.8h.8v1.3h-.8zM37.6 403.8h.8v1.3h-.8zM39.4 403.8h.8v1.3h-.8zM41.2 403.8h.8v1.3h-.8zM42.1 403.8h.8v1.3h-.8zM48.4 403.8h.8v1.3h-.8zM50.2 403.8h.8v1.3h-.8zM12.4 405.6h.8v1.3h-.8zM10.6 411.0h.8v1.3h-.8zM14.2 411.0h.8v1.3h-.8zM22.3 411.0h.8v1.3h-.8zM23.2 411.0h.8v1.3h-.8zM16.0 425.3h.8v1.3h-.8zM16.9 425.3h.8v1.3h-.8z"/><path fill="#000000" fill-opacity="0.58" d="M19.6 6.0h.8v1.3h-.8zM23.2 6.0h.8v1.3h-.8zM25.0 6.0h.8v1.3h-.8zM26.8 6.0h.8v1.3h-.8zM30.4 6.0h.8v1.3h-.8zM31.3 6.0h.8v1.3h-.8zM35.8 6.0h.8v1.3h-.8zM39.4 6.0h.8v1.3h-.8zM40.3 6.0h.8v1.3h-.8zM41.2 6.0h.8v1.3h-.8zM42.1 6.0h.8v1.3h-.8zM43.0 6.0h.8v1.3h-.8zM43.9 6.0h.8v1.3h-.8zM8.8 7.8h.8v1.3h-.8zM10.6 7.8h.8v1.3h-.8zM11.5 7.8h.8v1.3h-.8zM12.4 7.8h.8v1.3h-.8zM13.3 7.8h.8v1.3h-.8zM18.7 7.8h.8v1.3h-.8zM21.4 7.8h.8v1.3h-.8zM8.8 9.6h.8v1.3h-.8zM9.7 9.6h.8v1.3h-.8zM10.6 9.6h.8v1.3h-.8zM12.4 9.6h.8v1.3h-.8zM13.3 9.6h.8v1.3h-.8zM14.2 9.6h.8v1.3h-.8zM15.1 9.6h.8v1.3h-.8zM16.0 9.6h.8v1.3h-.8zM19.6 9.6h.8v1.3h-.8zM26.8 11.4h.8v1.3h-.8zM28.6 11.4h.8v1.3h-.8zM32.2 11.4h.8v1.3h-.8zM33.1 11.4h.8v1.3h-.8zM34.9 11.4h.8v1.3h-.8zM46.6 11.4h.8v1.3h-.8zM48.4 11.4h.8v1.3h-.8zM53.8 11.4h.8v1.3h-.8zM54.7 11.4h.8v1.3h-.8zM56.5 11.4h.8v1.3h-.8zM57.4 11.4h.8v1.3h-.8zM16.9 13.2h.8v1.3h-.8zM23.2 13.2h.8v1.3h-.8zM24.1 13.2h.8v1.3h-.8zM26.8 13.2h.8v1.3h-.8zM17.8 15.0h.8v1.3h-.8zM22.3 15.0h.8v1.3h-.8zM24.1 15.0h.8v1.3h-.8zM25.0 15.0h.8v1.3h-.8zM26.8 15.0h.8v1.3h-.8zM28.6 18.5h.8v1.3h-.8zM29.5 18.5h.8v1.3h-.8zM30.4 18.5h.8v1.3h-.8zM41.2 18.5h.8v1.3h-.8zM42.1 18.5h.8v1.3h-.8zM43.0 18.5h.8v1.3h-.8zM45.7 18.5h.8v1.3h-.8zM46.6 18.5h.8v1.3h-.8zM48.4 18.5h.8v1.3h-.8zM16.0 20.3h.8v1.3h-.8zM16.9 20.3h.8v1.3h-.8zM17.8 20.3h.8v1.3h-.8zM19.6 20.3h.8v1.3h-.8zM20.5 20.3h.8v1.3h-.8zM23.2 20.3h.8v1.3h-.8zM24.1 20.3h.8v1.3h-.8zM26.8 20.3h.8v1.3h-.8zM31.3 20.3h.8v1.3h-.8zM34.0 20.3h.8v1.3h-.8zM37.6 20.3h.8v1.3h-.8zM39.4 20.3h.8v1.3h-.8zM41.2 20.3h.8v1.3h-.8zM19.6 29.3h.8v1.3h-.8zM25.0 29.3h.8v1.3h-.8zM25.9 29.3h.8v1.3h-.8zM15.1 31.1h.8v1.3h-.8zM17.8 31.1h.8v1.3h-.8zM19.6 31.1h.8v1.3h-.8zM20.5 31.1h.8v1.3h-.8zM21.4 31.1h.8v1.3h-.8zM22.3 31.1h.8v1.3h-.8zM27.7 31.1h.8v1.3h-.8zM28.6 31.1h.8v1.3h-.8zM36.7 31.1h.8v1.3h-.8zM40.3 31.1h.8v1.3h-.8zM42.1 31.1h.8v1.3h-.8zM45.7 31.1h.8v1.3h-.8zM46.6 31.1h.8v1.3h-.8zM48.4 31.1h.8v1.3h-.8zM49.3 31.1h.8v1.3h-.8zM16.0 32.9h.8v1.3h-.8zM19.6 32.9h.8v1.3h-.8zM31.3 32.9h.8v1.3h-.8zM37.6 32.9h.8v1.3h-.8zM38.5 32.9h.8v1.3h-.8zM39.4 32.9h.8v1.3h-.8zM41.2 32.9h.8v1.3h-.8zM42.1 32.9h.8v1.3h-.8zM43.0 32.9h.8v1.3h-.8zM44.8 32.9h.8v1.3h-.8zM46.6 32.9h.8v1.3h-.8zM47.5 32.9h.8v1.3h-.8zM50.2 32.9h.8v1.3h-.8zM14.2 34.7h.8v1.3h-.8zM15.1 34.7h.8v1.3h-.8zM16.9 34.7h.8v1.3h-.8zM17.8 34.7h.8v1.3h-.8zM19.6 34.7h.8v1.3h-.8zM20.5 34.7h.8v1.3h-.8zM22.3 34.7h.8v1.3h-.8zM23.2 34.7h.8v1.3h-.8zM25.9 34.7h.8v1.3h-.8zM29.5 34.7h.8v1.3h-.8zM31.3 34.7h.8v1.3h-.8zM32.2 34.7h.8v1.3h-.8zM33.1 34.7h.8v1.3h-.8zM34.0 34.7h.8v1.3h-.8zM34.9 34.7h.8v1.3h-.8zM39.4 34.7h.8v1.3h-.8zM42.1 34.7h.8v1.3h-.8zM43.9 34.7h.8v1.3h-.8zM46.6 34.7h.8v1.3h-.8zM49.3 34.7h.8v1.3h-.8zM50.2 34.7h.8v1.3h-.8zM51.1 34.7h.8v1.3h-.8zM52.0 34.7h.8v1.3h-.8zM62.8 34.7h.8v1.3h-.8zM7.0 38.3h.8v1.3h-.8zM8.8 38.3h.8v1.3h-.8zM9.7 38.3h.8v1.3h-.8zM16.9 38.3h.8v1.3h-.8zM17.8 38.3h.8v1.3h-.8zM18.7 38.3h.8v1.3h-.8zM19.6 38.3h.8v1.3h-.8zM21.4 38.3h.8v1.3h-.8zM24.1 38.3h.8v1.3h-.8zM25.0 38.3h.8v1.3h-.8zM28.6 38.3h.8v1.3h-.8zM29.5 38.3h.8v1.3h-.8zM30.4 38.3h.8v1.3h-.8zM31.3 38.3h.8v1.3h-.8zM7.0 40.1h.8v1.3h-.8zM8.8 40.1h.8v1.3h-.8zM9.7 40.1h.8v1.3h-.8zM10.6 40.1h.8v1.3h-.8zM11.5 40.1h.8v1.3h-.8zM16.9 40.1h.8v1.3h-.8zM18.7 40.1h.8v1.3h-.8zM21.4 40.1h.8v1.3h-.8zM23.2 40.1h.8v1.3h-.8zM25.0 40.1h.8v1.3h-.8zM35.8 40.1h.8v1.3h-.8zM37.6 40.1h.8v1.3h-.8zM43.9 40.1h.8v1.3h-.8zM44.8 40.1h.8v1.3h-.8zM45.7 40.1h.8v1.3h-.8zM46.6 40.1h.8v1.3h-.8zM48.4 40.1h.8v1.3h-.8zM49.3 40.1h.8v1.3h-.8zM50.2 40.1h.8v1.3h-.8zM52.0 40.1h.8v1.3h-.8zM56.5 40.1h.8v1.3h-.8zM57.4 40.1h.8v1.3h-.8zM14.2 41.8h.8v1.3h-.8zM17.8 41.8h.8v1.3h-.8zM23.2 41.8h.8v1.3h-.8zM27.7 41.8h.8v1.3h-.8zM28.6 41.8h.8v1.3h-.8zM31.3 41.8h.8v1.3h-.8zM32.2 41.8h.8v1.3h-.8zM15.1 43.6h.8v1.3h-.8zM16.0 43.6h.8v1.3h-.8zM22.3 43.6h.8v1.3h-.8zM24.1 43.6h.8v1.3h-.8zM28.6 43.6h.8v1.3h-.8zM30.4 43.6h.8v1.3h-.8zM32.2 43.6h.8v1.3h-.8zM34.9 43.6h.8v1.3h-.8zM22.3 45.4h.8v1.3h-.8zM23.2 45.4h.8v1.3h-.8zM31.3 45.4h.8v1.3h-.8zM32.2 45.4h.8v1.3h-.8zM37.6 45.4h.8v1.3h-.8zM40.3 45.4h.8v1.3h-.8zM13.3 47.2h.8v1.3h-.8zM15.1 47.2h.8v1.3h-.8zM16.0 47.2h.8v1.3h-.8zM19.6 47.2h.8v1.3h-.8zM12.4 49.0h.8v1.3h-.8zM15.1 49.0h.8v1.3h-.8zM18.7 49.0h.8v1.3h-.8zM19.6 49.0h.8v1.3h-.8zM21.4 49.0h.8v1.3h-.8zM24.1 49.0h.8v1.3h-.8zM26.8 49.0h.8v1.3h-.8zM30.4 49.0h.8v1.3h-.8zM32.2 49.0h.8v1.3h-.8zM37.6 49.0h.8v1.3h-.8zM39.4 49.0h.8v1.3h-.8zM44.8 49.0h.8v1.3h-.8zM19.6 50.8h.8v1.3h-.8zM22.3 50.8h.8v1.3h-.8zM23.2 50.8h.8v1.3h-.8zM25.9 50.8h.8v1.3h-.8zM26.8 50.8h.8v1.3h-.8zM27.7 50.8h.8v1.3h-.8zM30.4 50.8h.8v1.3h-.8zM33.1 50.8h.8v1.3h-.8zM11.5 52.6h.8v1.3h-.8zM13.3 52.6h.8v1.3h-.8zM16.0 52.6h.8v1.3h-.8zM17.8 52.6h.8v1.3h-.8zM18.7 52.6h.8v1.3h-.8zM19.6 52.6h.8v1.3h-.8zM21.4 52.6h.8v1.3h-.8zM23.2 52.6h.8v1.3h-.8zM24.1 52.6h.8v1.3h-.8zM11.5 56.2h.8v1.3h-.8zM21.4 56.2h.8v1.3h-.8zM22.3 56.2h.8v1.3h-.8zM25.9 56.2h.8v1.3h-.8zM16.0 58.0h.8v1.3h-.8zM24.1 58.0h.8v1.3h-.8zM26.8 58.0h.8v1.3h-.8zM21.4 61.6h.8v1.3h-.8zM22.3 61.6h.8v1.3h-.8zM16.9 66.9h.8v1.3h-.8zM17.8 66.9h.8v1.3h-.8zM19.6 66.9h.8v1.3h-.8zM21.4 66.9h.8v1.3h-.8zM25.0 66.9h.8v1.3h-.8zM27.7 66.9h.8v1.3h-.8zM28.6 66.9h.8v1.3h-.8zM29.5 66.9h.8v1.3h-.8zM24.1 68.7h.8v1.3h-.8zM25.0 68.7h.8v1.3h-.8zM25.9 68.7h.8v1.3h-.8zM28.6 68.7h.8v1.3h-.8zM30.4 68.7h.8v1.3h-.8zM31.3 68.7h.8v1.3h-.8zM43.9 68.7h.8v1.3h-.8zM46.6 68.7h.8v1.3h-.8zM47.5 68.7h.8v1.3h-.8zM52.0 68.7h.8v1.3h-.8zM53.8 68.7h.8v1.3h-.8zM57.4 68.7h.8v1.3h-.8zM61.0 68.7h.8v1.3h-.8zM62.8 68.7h.8v1.3h-.8zM66.4 68.7h.8v1.3h-.8zM67.3 68.7h.8v1.3h-.8zM75.4 68.7h.8v1.3h-.8zM17.8 70.5h.8v1.3h-.8zM19.6 70.5h.8v1.3h-.8zM38.5 70.5h.8v1.3h-.8zM39.4 70.5h.8v1.3h-.8zM41.2 70.5h.8v1.3h-.8zM47.5 70.5h.8v1.3h-.8zM54.7 70.5h.8v1.3h-.8zM56.5 70.5h.8v1.3h-.8zM58.3 70.5h.8v1.3h-.8zM60.1 70.5h.8v1.3h-.8zM62.8 70.5h.8v1.3h-.8zM63.7 70.5h.8v1.3h-.8zM64.6 70.5h.8v1.3h-.8zM65.5 70.5h.8v1.3h-.8zM30.4 72.3h.8v1.3h-.8zM33.1 72.3h.8v1.3h-.8zM34.0 72.3h.8v1.3h-.8zM34.9 72.3h.8v1.3h-.8zM35.8 72.3h.8v1.3h-.8zM36.7 72.3h.8v1.3h-.8zM37.6 72.3h.8v1.3h-.8zM38.5 72.3h.8v1.3h-.8zM48.4 72.3h.8v1.3h-.8zM50.2 72.3h.8v1.3h-.8zM51.1 72.3h.8v1.3h-.8zM54.7 72.3h.8v1.3h-.8zM56.5 72.3h.8v1.3h-.8zM57.4 72.3h.8v1.3h-.8zM60.1 72.3h.8v1.3h-.8zM61.0 72.3h.8v1.3h-.8zM61.9 72.3h.8v1.3h-.8zM63.7 72.3h.8v1.3h-.8zM68.2 72.3h.8v1.3h-.8zM70.0 72.3h.8v1.3h-.8zM71.8 72.3h.8v1.3h-.8zM12.4 77.7h.8v1.3h-.8zM13.3 77.7h.8v1.3h-.8zM14.2 77.7h.8v1.3h-.8zM15.1 77.7h.8v1.3h-.8zM17.8 77.7h.8v1.3h-.8zM20.5 77.7h.8v1.3h-.8zM21.4 77.7h.8v1.3h-.8zM25.0 77.7h.8v1.3h-.8zM14.2 81.3h.8v1.3h-.8zM15.1 81.3h.8v1.3h-.8zM18.7 81.3h.8v1.3h-.8zM19.6 81.3h.8v1.3h-.8zM25.0 81.3h.8v1.3h-.8zM28.6 81.3h.8v1.3h-.8zM34.9 81.3h.8v1.3h-.8zM35.8 81.3h.8v1.3h-.8zM36.7 81.3h.8v1.3h-.8zM37.6 81.3h.8v1.3h-.8zM38.5 81.3h.8v1.3h-.8zM42.1 81.3h.8v1.3h-.8zM43.9 81.3h.8v1.3h-.8zM15.1 83.1h.8v1.3h-.8zM16.0 83.1h.8v1.3h-.8zM18.7 83.1h.8v1.3h-.8zM21.4 83.1h.8v1.3h-.8zM49.3 83.1h.8v1.3h-.8zM51.1 83.1h.8v1.3h-.8zM59.2 83.1h.8v1.3h-.8zM14.2 88.4h.8v1.3h-.8zM15.1 88.4h.8v1.3h-.8zM19.6 88.4h.8v1.3h-.8zM20.5 88.4h.8v1.3h-.8zM24.1 88.4h.8v1.3h-.8zM25.0 88.4h.8v1.3h-.8zM26.8 88.4h.8v1.3h-.8zM28.6 88.4h.8v1.3h-.8zM34.9 88.4h.8v1.3h-.8zM35.8 88.4h.8v1.3h-.8zM36.7 88.4h.8v1.3h-.8zM40.3 88.4h.8v1.3h-.8zM42.1 88.4h.8v1.3h-.8zM44.8 88.4h.8v1.3h-.8zM15.1 90.2h.8v1.3h-.8zM16.9 90.2h.8v1.3h-.8zM18.7 90.2h.8v1.3h-.8zM20.5 90.2h.8v1.3h-.8zM21.4 90.2h.8v1.3h-.8zM44.8 90.2h.8v1.3h-.8zM45.7 90.2h.8v1.3h-.8zM46.6 90.2h.8v1.3h-.8zM48.4 90.2h.8v1.3h-.8zM49.3 90.2h.8v1.3h-.8zM50.2 90.2h.8v1.3h-.8zM52.9 90.2h.8v1.3h-.8zM53.8 90.2h.8v1.3h-.8zM56.5 90.2h.8v1.3h-.8zM59.2 90.2h.8v1.3h-.8zM7.0 92.0h.8v1.3h-.8zM17.8 95.6h.8v1.3h-.8zM18.7 95.6h.8v1.3h-.8zM21.4 95.6h.8v1.3h-.8zM25.9 95.6h.8v1.3h-.8zM26.8 95.6h.8v1.3h-.8zM31.3 95.6h.8v1.3h-.8zM32.2 95.6h.8v1.3h-.8zM43.9 95.6h.8v1.3h-.8zM45.7 95.6h.8v1.3h-.8zM9.7 97.4h.8v1.3h-.8zM11.5 97.4h.8v1.3h-.8zM12.4 97.4h.8v1.3h-.8zM15.1 97.4h.8v1.3h-.8zM16.9 97.4h.8v1.3h-.8zM33.1 97.4h.8v1.3h-.8zM34.9 97.4h.8v1.3h-.8zM42.1 97.4h.8v1.3h-.8zM45.7 97.4h.8v1.3h-.8zM46.6 97.4h.8v1.3h-.8zM47.5 97.4h.8v1.3h-.8zM50.2 97.4h.8v1.3h-.8zM13.3 102.8h.8v1.3h-.8zM17.8 102.8h.8v1.3h-.8zM21.4 102.8h.8v1.3h-.8zM22.3 102.8h.8v1.3h-.8zM26.8 102.8h.8v1.3h-.8zM28.6 102.8h.8v1.3h-.8zM29.5 102.8h.8v1.3h-.8zM30.4 102.8h.8v1.3h-.8zM33.1 102.8h.8v1.3h-.8zM34.9 102.8h.8v1.3h-.8zM36.7 102.8h.8v1.3h-.8zM39.4 102.8h.8v1.3h-.8zM40.3 102.8h.8v1.3h-.8zM41.2 102.8h.8v1.3h-.8zM42.1 102.8h.8v1.3h-.8zM45.7 102.8h.8v1.3h-.8zM48.4 102.8h.8v1.3h-.8zM51.1 102.8h.8v1.3h-.8zM52.9 102.8h.8v1.3h-.8zM54.7 102.8h.8v1.3h-.8zM56.5 102.8h.8v1.3h-.8zM57.4 102.8h.8v1.3h-.8zM11.5 104.6h.8v1.3h-.8zM15.1 104.6h.8v1.3h-.8zM16.0 104.6h.8v1.3h-.8zM16.9 104.6h.8v1.3h-.8zM21.4 104.6h.8v1.3h-.8zM24.1 104.6h.8v1.3h-.8zM25.0 104.6h.8v1.3h-.8zM28.6 104.6h.8v1.3h-.8zM31.3 104.6h.8v1.3h-.8zM37.6 104.6h.8v1.3h-.8zM38.5 104.6h.8v1.3h-.8zM40.3 104.6h.8v1.3h-.8zM41.2 104.6h.8v1.3h-.8zM43.9 104.6h.8v1.3h-.8zM52.9 104.6h.8v1.3h-.8zM54.7 104.6h.8v1.3h-.8zM55.6 104.6h.8v1.3h-.8zM57.4 104.6h.8v1.3h-.8zM58.3 104.6h.8v1.3h-.8zM15.1 106.4h.8v1.3h-.8zM16.0 106.4h.8v1.3h-.8zM17.8 106.4h.8v1.3h-.8zM21.4 106.4h.8v1.3h-.8zM23.2 106.4h.8v1.3h-.8zM24.1 106.4h.8v1.3h-.8zM26.8 106.4h.8v1.3h-.8zM28.6 106.4h.8v1.3h-.8zM32.2 106.4h.8v1.3h-.8zM33.1 106.4h.8v1.3h-.8zM38.5 106.4h.8v1.3h-.8zM42.1 106.4h.8v1.3h-.8zM43.0 106.4h.8v1.3h-.8zM44.8 106.4h.8v1.3h-.8zM15.1 111.7h.8v1.3h-.8zM16.0 111.7h.8v1.3h-.8zM20.5 111.7h.8v1.3h-.8zM22.3 111.7h.8v1.3h-.8zM23.2 111.7h.8v1.3h-.8zM24.1 111.7h.8v1.3h-.8zM25.9 111.7h.8v1.3h-.8zM44.8 111.7h.8v1.3h-.8zM49.3 111.7h.8v1.3h-.8zM50.2 111.7h.8v1.3h-.8zM51.1 111.7h.8v1.3h-.8zM15.1 117.1h.8v1.3h-.8zM16.0 117.1h.8v1.3h-.8zM16.9 117.1h.8v1.3h-.8zM19.6 117.1h.8v1.3h-.8zM20.5 117.1h.8v1.3h-.8zM21.4 117.1h.8v1.3h-.8zM24.1 117.1h.8v1.3h-.8zM25.0 117.1h.8v1.3h-.8zM25.9 117.1h.8v1.3h-.8zM27.7 117.1h.8v1.3h-.8zM28.6 117.1h.8v1.3h-.8zM38.5 117.1h.8v1.3h-.8zM25.9 118.9h.8v1.3h-.8zM35.8 118.9h.8v1.3h-.8zM37.6 118.9h.8v1.3h-.8zM40.3 118.9h.8v1.3h-.8zM43.0 118.9h.8v1.3h-.8zM46.6 118.9h.8v1.3h-.8zM47.5 118.9h.8v1.3h-.8zM48.4 118.9h.8v1.3h-.8zM57.4 118.9h.8v1.3h-.8zM59.2 118.9h.8v1.3h-.8zM60.1 118.9h.8v1.3h-.8zM61.0 118.9h.8v1.3h-.8zM61.9 118.9h.8v1.3h-.8zM7.0 120.7h.8v1.3h-.8zM13.3 120.7h.8v1.3h-.8zM15.1 120.7h.8v1.3h-.8zM16.9 120.7h.8v1.3h-.8zM19.6 120.7h.8v1.3h-.8zM20.5 120.7h.8v1.3h-.8zM21.4 120.7h.8v1.3h-.8zM24.1 120.7h.8v1.3h-.8zM25.0 120.7h.8v1.3h-.8zM26.8 120.7h.8v1.3h-.8zM27.7 120.7h.8v1.3h-.8zM28.6 120.7h.8v1.3h-.8zM29.5 120.7h.8v1.3h-.8zM30.4 120.7h.8v1.3h-.8zM38.5 120.7h.8v1.3h-.8zM39.4 120.7h.8v1.3h-.8zM44.8 120.7h.8v1.3h-.8zM31.3 122.5h.8v1.3h-.8zM35.8 122.5h.8v1.3h-.8zM36.7 122.5h.8v1.3h-.8zM39.4 122.5h.8v1.3h-.8zM41.2 122.5h.8v1.3h-.8zM43.0 122.5h.8v1.3h-.8zM43.9 122.5h.8v1.3h-.8zM46.6 122.5h.8v1.3h-.8zM49.3 122.5h.8v1.3h-.8zM50.2 122.5h.8v1.3h-.8zM51.1 122.5h.8v1.3h-.8zM52.9 122.5h.8v1.3h-.8zM53.8 122.5h.8v1.3h-.8zM56.5 122.5h.8v1.3h-.8zM57.4 122.5h.8v1.3h-.8zM58.3 122.5h.8v1.3h-.8zM59.2 122.5h.8v1.3h-.8zM11.5 127.9h.8v1.3h-.8zM22.3 127.9h.8v1.3h-.8zM24.1 127.9h.8v1.3h-.8zM30.4 127.9h.8v1.3h-.8zM31.3 127.9h.8v1.3h-.8zM34.0 127.9h.8v1.3h-.8zM40.3 127.9h.8v1.3h-.8zM43.9 127.9h.8v1.3h-.8zM48.4 127.9h.8v1.3h-.8zM50.2 127.9h.8v1.3h-.8zM51.1 127.9h.8v1.3h-.8zM55.6 127.9h.8v1.3h-.8zM56.5 127.9h.8v1.3h-.8zM58.3 127.9h.8v1.3h-.8zM61.0 127.9h.8v1.3h-.8zM31.3 129.7h.8v1.3h-.8zM32.2 129.7h.8v1.3h-.8zM36.7 129.7h.8v1.3h-.8zM37.6 129.7h.8v1.3h-.8zM40.3 129.7h.8v1.3h-.8zM41.2 129.7h.8v1.3h-.8zM44.8 129.7h.8v1.3h-.8zM52.9 129.7h.8v1.3h-.8zM55.6 129.7h.8v1.3h-.8zM7.0 131.4h.8v1.3h-.8zM35.8 140.4h.8v1.3h-.8zM36.7 140.4h.8v1.3h-.8zM40.3 140.4h.8v1.3h-.8zM56.5 140.4h.8v1.3h-.8zM35.8 142.2h.8v1.3h-.8zM42.1 142.2h.8v1.3h-.8zM46.6 142.2h.8v1.3h-.8zM49.3 142.2h.8v1.3h-.8zM52.9 142.2h.8v1.3h-.8zM54.7 142.2h.8v1.3h-.8zM55.6 142.2h.8v1.3h-.8zM56.5 142.2h.8v1.3h-.8zM59.2 142.2h.8v1.3h-.8zM61.0 142.2h.8v1.3h-.8zM10.6 144.0h.8v1.3h-.8zM12.4 144.0h.8v1.3h-.8zM14.2 144.0h.8v1.3h-.8zM16.9 144.0h.8v1.3h-.8zM18.7 144.0h.8v1.3h-.8zM19.6 144.0h.8v1.3h-.8zM20.5 144.0h.8v1.3h-.8zM22.3 144.0h.8v1.3h-.8zM27.7 144.0h.8v1.3h-.8zM33.1 144.0h.8v1.3h-.8zM29.5 145.8h.8v1.3h-.8zM38.5 147.6h.8v1.3h-.8zM39.4 147.6h.8v1.3h-.8zM45.7 147.6h.8v1.3h-.8zM51.1 147.6h.8v1.3h-.8zM52.0 147.6h.8v1.3h-.8zM52.9 147.6h.8v1.3h-.8zM53.8 147.6h.8v1.3h-.8zM57.4 147.6h.8v1.3h-.8zM58.3 147.6h.8v1.3h-.8zM59.2 147.6h.8v1.3h-.8zM26.8 160.1h.8v1.3h-.8zM27.7 160.1h.8v1.3h-.8zM28.6 160.1h.8v1.3h-.8zM31.3 160.1h.8v1.3h-.8zM33.1 160.1h.8v1.3h-.8zM34.9 160.1h.8v1.3h-.8zM36.7 160.1h.8v1.3h-.8zM38.5 160.1h.8v1.3h-.8zM53.8 160.1h.8v1.3h-.8zM54.7 160.1h.8v1.3h-.8zM55.6 160.1h.8v1.3h-.8zM35.8 161.9h.8v1.3h-.8zM36.7 161.9h.8v1.3h-.8zM53.8 161.9h.8v1.3h-.8zM54.7 161.9h.8v1.3h-.8zM56.5 161.9h.8v1.3h-.8zM16.0 163.7h.8v1.3h-.8zM24.1 163.7h.8v1.3h-.8zM25.9 163.7h.8v1.3h-.8zM28.6 163.7h.8v1.3h-.8zM33.1 163.7h.8v1.3h-.8zM27.7 165.5h.8v1.3h-.8zM28.6 165.5h.8v1.3h-.8zM30.4 165.5h.8v1.3h-.8zM39.4 167.3h.8v1.3h-.8zM40.3 167.3h.8v1.3h-.8zM42.1 167.3h.8v1.3h-.8zM45.7 167.3h.8v1.3h-.8zM47.5 167.3h.8v1.3h-.8zM48.4 167.3h.8v1.3h-.8zM53.8 167.3h.8v1.3h-.8zM56.5 167.3h.8v1.3h-.8zM58.3 167.3h.8v1.3h-.8zM10.6 170.9h.8v1.3h-.8zM15.1 170.9h.8v1.3h-.8zM16.0 170.9h.8v1.3h-.8zM16.9 170.9h.8v1.3h-.8zM18.7 170.9h.8v1.3h-.8zM19.6 170.9h.8v1.3h-.8zM20.5 170.9h.8v1.3h-.8zM21.4 170.9h.8v1.3h-.8zM25.9 170.9h.8v1.3h-.8zM26.8 170.9h.8v1.3h-.8zM27.7 170.9h.8v1.3h-.8zM31.3 170.9h.8v1.3h-.8zM25.0 172.7h.8v1.3h-.8zM28.6 172.7h.8v1.3h-.8zM29.5 172.7h.8v1.3h-.8zM31.3 172.7h.8v1.3h-.8zM32.2 172.7h.8v1.3h-.8zM39.4 172.7h.8v1.3h-.8zM52.9 172.7h.8v1.3h-.8zM57.4 172.7h.8v1.3h-.8zM11.5 174.5h.8v1.3h-.8zM16.0 174.5h.8v1.3h-.8zM16.9 174.5h.8v1.3h-.8zM18.7 174.5h.8v1.3h-.8zM20.5 174.5h.8v1.3h-.8zM22.3 174.5h.8v1.3h-.8zM25.9 174.5h.8v1.3h-.8zM26.8 174.5h.8v1.3h-.8zM28.6 174.5h.8v1.3h-.8zM31.3 174.5h.8v1.3h-.8zM33.1 174.5h.8v1.3h-.8zM16.0 176.2h.8v1.3h-.8zM16.9 176.2h.8v1.3h-.8zM18.7 176.2h.8v1.3h-.8zM20.5 176.2h.8v1.3h-.8zM22.3 176.2h.8v1.3h-.8zM24.1 176.2h.8v1.3h-.8zM27.7 176.2h.8v1.3h-.8zM29.5 176.2h.8v1.3h-.8zM30.4 176.2h.8v1.3h-.8zM34.0 176.2h.8v1.3h-.8zM34.9 176.2h.8v1.3h-.8zM36.7 176.2h.8v1.3h-.8zM37.6 176.2h.8v1.3h-.8zM39.4 176.2h.8v1.3h-.8zM43.9 176.2h.8v1.3h-.8zM51.1 176.2h.8v1.3h-.8zM52.0 176.2h.8v1.3h-.8zM15.1 179.8h.8v1.3h-.8zM16.9 179.8h.8v1.3h-.8zM17.8 179.8h.8v1.3h-.8zM18.7 179.8h.8v1.3h-.8zM24.1 179.8h.8v1.3h-.8zM25.0 179.8h.8v1.3h-.8zM30.4 179.8h.8v1.3h-.8zM34.0 179.8h.8v1.3h-.8zM34.9 179.8h.8v1.3h-.8zM57.4 179.8h.8v1.3h-.8zM28.6 181.6h.8v1.3h-.8zM34.9 181.6h.8v1.3h-.8zM35.8 181.6h.8v1.3h-.8zM38.5 181.6h.8v1.3h-.8zM39.4 181.6h.8v1.3h-.8zM7.0 183.4h.8v1.3h-.8zM7.0 187.0h.8v1.3h-.8zM9.7 187.0h.8v1.3h-.8zM11.5 187.0h.8v1.3h-.8zM12.4 187.0h.8v1.3h-.8zM16.0 187.0h.8v1.3h-.8zM18.7 187.0h.8v1.3h-.8zM19.6 187.0h.8v1.3h-.8zM21.4 187.0h.8v1.3h-.8zM24.1 187.0h.8v1.3h-.8zM25.0 187.0h.8v1.3h-.8zM27.7 187.0h.8v1.3h-.8zM28.6 187.0h.8v1.3h-.8zM20.5 188.8h.8v1.3h-.8zM21.4 188.8h.8v1.3h-.8zM23.2 188.8h.8v1.3h-.8zM25.0 188.8h.8v1.3h-.8zM25.9 188.8h.8v1.3h-.8zM26.8 188.8h.8v1.3h-.8zM28.6 188.8h.8v1.3h-.8zM29.5 188.8h.8v1.3h-.8zM30.4 188.8h.8v1.3h-.8zM40.3 188.8h.8v1.3h-.8zM41.2 188.8h.8v1.3h-.8zM46.6 188.8h.8v1.3h-.8zM7.0 190.6h.8v1.3h-.8zM7.9 190.6h.8v1.3h-.8zM15.1 190.6h.8v1.3h-.8zM16.0 190.6h.8v1.3h-.8zM21.4 190.6h.8v1.3h-.8zM22.3 190.6h.8v1.3h-.8zM25.9 190.6h.8v1.3h-.8zM29.5 190.6h.8v1.3h-.8zM31.3 190.6h.8v1.3h-.8zM40.3 190.6h.8v1.3h-.8zM41.2 190.6h.8v1.3h-.8zM43.0 190.6h.8v1.3h-.8zM45.7 190.6h.8v1.3h-.8zM52.9 190.6h.8v1.3h-.8zM54.7 190.6h.8v1.3h-.8zM60.1 190.6h.8v1.3h-.8zM12.4 192.4h.8v1.3h-.8zM18.7 192.4h.8v1.3h-.8zM24.1 192.4h.8v1.3h-.8zM25.0 192.4h.8v1.3h-.8zM25.9 192.4h.8v1.3h-.8zM33.1 192.4h.8v1.3h-.8zM34.9 192.4h.8v1.3h-.8zM37.6 192.4h.8v1.3h-.8zM39.4 192.4h.8v1.3h-.8zM42.1 192.4h.8v1.3h-.8zM44.8 192.4h.8v1.3h-.8zM8.8 206.7h.8v1.3h-.8zM10.6 206.7h.8v1.3h-.8zM13.3 206.7h.8v1.3h-.8zM16.9 206.7h.8v1.3h-.8zM19.6 206.7h.8v1.3h-.8zM26.8 206.7h.8v1.3h-.8zM28.6 206.7h.8v1.3h-.8zM29.5 206.7h.8v1.3h-.8zM32.2 206.7h.8v1.3h-.8zM55.6 206.7h.8v1.3h-.8zM13.3 208.5h.8v1.3h-.8zM15.1 208.5h.8v1.3h-.8zM16.0 208.5h.8v1.3h-.8zM17.8 208.5h.8v1.3h-.8zM25.0 208.5h.8v1.3h-.8zM26.8 208.5h.8v1.3h-.8zM30.4 208.5h.8v1.3h-.8zM36.7 208.5h.8v1.3h-.8zM43.9 208.5h.8v1.3h-.8zM45.7 208.5h.8v1.3h-.8zM46.6 208.5h.8v1.3h-.8zM51.1 208.5h.8v1.3h-.8zM52.9 208.5h.8v1.3h-.8zM53.8 208.5h.8v1.3h-.8zM15.1 210.3h.8v1.3h-.8zM16.0 210.3h.8v1.3h-.8zM16.9 210.3h.8v1.3h-.8zM19.6 210.3h.8v1.3h-.8zM22.3 210.3h.8v1.3h-.8zM24.1 210.3h.8v1.3h-.8zM34.0 210.3h.8v1.3h-.8zM34.9 210.3h.8v1.3h-.8zM35.8 210.3h.8v1.3h-.8zM36.7 210.3h.8v1.3h-.8zM37.6 210.3h.8v1.3h-.8zM38.5 210.3h.8v1.3h-.8zM39.4 210.3h.8v1.3h-.8zM18.7 215.7h.8v1.3h-.8zM23.2 215.7h.8v1.3h-.8zM25.9 215.7h.8v1.3h-.8zM26.8 215.7h.8v1.3h-.8zM28.6 215.7h.8v1.3h-.8zM33.1 215.7h.8v1.3h-.8zM37.6 215.7h.8v1.3h-.8zM40.3 215.7h.8v1.3h-.8zM43.0 215.7h.8v1.3h-.8zM43.9 215.7h.8v1.3h-.8zM48.4 215.7h.8v1.3h-.8zM50.2 215.7h.8v1.3h-.8zM54.7 215.7h.8v1.3h-.8zM55.6 215.7h.8v1.3h-.8zM57.4 215.7h.8v1.3h-.8zM8.8 219.3h.8v1.3h-.8zM12.4 219.3h.8v1.3h-.8zM13.3 219.3h.8v1.3h-.8zM14.2 219.3h.8v1.3h-.8zM15.1 219.3h.8v1.3h-.8zM16.9 219.3h.8v1.3h-.8zM18.7 219.3h.8v1.3h-.8zM26.8 219.3h.8v1.3h-.8zM28.6 219.3h.8v1.3h-.8zM31.3 219.3h.8v1.3h-.8zM19.6 221.0h.8v1.3h-.8zM20.5 221.0h.8v1.3h-.8zM23.2 221.0h.8v1.3h-.8zM24.1 221.0h.8v1.3h-.8zM20.5 224.6h.8v1.3h-.8zM21.4 224.6h.8v1.3h-.8zM23.2 224.6h.8v1.3h-.8zM16.9 226.4h.8v1.3h-.8zM17.8 226.4h.8v1.3h-.8zM15.1 228.2h.8v1.3h-.8zM19.6 228.2h.8v1.3h-.8zM22.3 228.2h.8v1.3h-.8zM23.2 228.2h.8v1.3h-.8zM24.1 228.2h.8v1.3h-.8zM32.2 228.2h.8v1.3h-.8zM33.1 228.2h.8v1.3h-.8zM34.9 228.2h.8v1.3h-.8zM43.9 228.2h.8v1.3h-.8zM44.8 228.2h.8v1.3h-.8zM21.4 230.0h.8v1.3h-.8zM22.3 230.0h.8v1.3h-.8zM24.1 230.0h.8v1.3h-.8zM27.7 230.0h.8v1.3h-.8zM36.7 230.0h.8v1.3h-.8zM15.1 231.8h.8v1.3h-.8zM16.0 231.8h.8v1.3h-.8zM18.7 231.8h.8v1.3h-.8zM20.5 231.8h.8v1.3h-.8zM38.5 231.8h.8v1.3h-.8zM39.4 231.8h.8v1.3h-.8zM42.1 231.8h.8v1.3h-.8zM44.8 231.8h.8v1.3h-.8zM50.2 231.8h.8v1.3h-.8zM52.0 231.8h.8v1.3h-.8zM54.7 231.8h.8v1.3h-.8zM23.2 235.4h.8v1.3h-.8zM14.2 246.1h.8v1.3h-.8zM15.1 246.1h.8v1.3h-.8zM17.8 246.1h.8v1.3h-.8zM18.7 246.1h.8v1.3h-.8zM19.6 246.1h.8v1.3h-.8zM23.2 246.1h.8v1.3h-.8zM24.1 246.1h.8v1.3h-.8zM25.0 246.1h.8v1.3h-.8zM25.9 246.1h.8v1.3h-.8zM30.4 246.1h.8v1.3h-.8zM33.1 246.1h.8v1.3h-.8zM34.0 246.1h.8v1.3h-.8zM34.9 246.1h.8v1.3h-.8zM43.0 246.1h.8v1.3h-.8zM43.9 246.1h.8v1.3h-.8zM44.8 246.1h.8v1.3h-.8zM46.6 246.1h.8v1.3h-.8zM50.2 246.1h.8v1.3h-.8zM55.6 246.1h.8v1.3h-.8zM21.4 247.9h.8v1.3h-.8zM25.0 247.9h.8v1.3h-.8zM32.2 247.9h.8v1.3h-.8zM33.1 247.9h.8v1.3h-.8zM34.9 247.9h.8v1.3h-.8zM36.7 247.9h.8v1.3h-.8zM37.6 247.9h.8v1.3h-.8zM38.5 247.9h.8v1.3h-.8zM18.7 249.7h.8v1.3h-.8zM19.6 249.7h.8v1.3h-.8zM20.5 249.7h.8v1.3h-.8zM22.3 249.7h.8v1.3h-.8zM38.5 249.7h.8v1.3h-.8zM39.4 249.7h.8v1.3h-.8zM40.3 249.7h.8v1.3h-.8zM43.0 249.7h.8v1.3h-.8zM43.9 249.7h.8v1.3h-.8zM45.7 249.7h.8v1.3h-.8zM51.1 249.7h.8v1.3h-.8zM53.8 249.7h.8v1.3h-.8zM14.2 251.5h.8v1.3h-.8zM22.3 253.3h.8v1.3h-.8zM19.6 256.9h.8v1.3h-.8zM21.4 258.7h.8v1.3h-.8zM23.2 258.7h.8v1.3h-.8zM24.1 258.7h.8v1.3h-.8zM25.0 258.7h.8v1.3h-.8zM25.9 258.7h.8v1.3h-.8zM28.6 258.7h.8v1.3h-.8zM29.5 258.7h.8v1.3h-.8zM34.0 258.7h.8v1.3h-.8zM38.5 258.7h.8v1.3h-.8zM41.2 258.7h.8v1.3h-.8zM17.8 260.5h.8v1.3h-.8zM18.7 260.5h.8v1.3h-.8zM19.6 260.5h.8v1.3h-.8zM24.1 260.5h.8v1.3h-.8zM27.7 260.5h.8v1.3h-.8zM32.2 260.5h.8v1.3h-.8zM34.0 260.5h.8v1.3h-.8zM38.5 260.5h.8v1.3h-.8zM41.2 260.5h.8v1.3h-.8zM42.1 260.5h.8v1.3h-.8zM43.0 260.5h.8v1.3h-.8zM47.5 260.5h.8v1.3h-.8zM48.4 260.5h.8v1.3h-.8zM50.2 260.5h.8v1.3h-.8zM52.0 260.5h.8v1.3h-.8zM57.4 260.5h.8v1.3h-.8zM60.1 260.5h.8v1.3h-.8zM15.1 262.3h.8v1.3h-.8zM16.0 262.3h.8v1.3h-.8zM17.8 262.3h.8v1.3h-.8zM23.2 262.3h.8v1.3h-.8zM25.0 262.3h.8v1.3h-.8zM31.3 262.3h.8v1.3h-.8zM37.6 262.3h.8v1.3h-.8zM41.2 262.3h.8v1.3h-.8zM45.7 262.3h.8v1.3h-.8zM48.4 262.3h.8v1.3h-.8zM53.8 262.3h.8v1.3h-.8zM56.5 262.3h.8v1.3h-.8zM57.4 262.3h.8v1.3h-.8zM60.1 262.3h.8v1.3h-.8zM61.0 262.3h.8v1.3h-.8zM61.9 262.3h.8v1.3h-.8zM15.1 264.1h.8v1.3h-.8zM16.0 264.1h.8v1.3h-.8zM19.6 264.1h.8v1.3h-.8zM20.5 264.1h.8v1.3h-.8zM21.4 264.1h.8v1.3h-.8zM23.2 264.1h.8v1.3h-.8zM25.9 264.1h.8v1.3h-.8zM29.5 264.1h.8v1.3h-.8zM33.1 264.1h.8v1.3h-.8zM34.9 264.1h.8v1.3h-.8zM36.7 264.1h.8v1.3h-.8zM40.3 264.1h.8v1.3h-.8zM41.2 264.1h.8v1.3h-.8zM42.1 264.1h.8v1.3h-.8zM43.9 264.1h.8v1.3h-.8zM45.7 264.1h.8v1.3h-.8zM47.5 264.1h.8v1.3h-.8zM48.4 264.1h.8v1.3h-.8zM50.2 264.1h.8v1.3h-.8zM51.1 264.1h.8v1.3h-.8zM52.0 264.1h.8v1.3h-.8zM54.7 264.1h.8v1.3h-.8zM57.4 264.1h.8v1.3h-.8zM58.3 264.1h.8v1.3h-.8zM61.0 264.1h.8v1.3h-.8zM24.1 265.8h.8v1.3h-.8zM25.0 265.8h.8v1.3h-.8zM26.8 265.8h.8v1.3h-.8zM28.6 265.8h.8v1.3h-.8zM36.7 265.8h.8v1.3h-.8zM37.6 265.8h.8v1.3h-.8zM16.0 267.6h.8v1.3h-.8zM16.9 267.6h.8v1.3h-.8zM17.8 267.6h.8v1.3h-.8zM21.4 267.6h.8v1.3h-.8zM38.5 267.6h.8v1.3h-.8zM39.4 267.6h.8v1.3h-.8zM43.0 267.6h.8v1.3h-.8zM44.8 267.6h.8v1.3h-.8zM50.2 267.6h.8v1.3h-.8zM51.1 267.6h.8v1.3h-.8zM52.9 267.6h.8v1.3h-.8zM15.1 269.4h.8v1.3h-.8zM16.0 269.4h.8v1.3h-.8zM19.6 269.4h.8v1.3h-.8zM20.5 269.4h.8v1.3h-.8zM21.4 269.4h.8v1.3h-.8zM24.1 269.4h.8v1.3h-.8zM30.4 269.4h.8v1.3h-.8zM31.3 269.4h.8v1.3h-.8zM36.7 269.4h.8v1.3h-.8zM41.2 269.4h.8v1.3h-.8zM43.9 269.4h.8v1.3h-.8zM44.8 269.4h.8v1.3h-.8zM48.4 269.4h.8v1.3h-.8zM49.3 269.4h.8v1.3h-.8zM52.9 269.4h.8v1.3h-.8zM53.8 269.4h.8v1.3h-.8zM54.7 269.4h.8v1.3h-.8zM56.5 269.4h.8v1.3h-.8zM23.2 273.0h.8v1.3h-.8zM11.5 282.0h.8v1.3h-.8zM13.3 282.0h.8v1.3h-.8zM14.2 282.0h.8v1.3h-.8zM15.1 282.0h.8v1.3h-.8zM19.6 282.0h.8v1.3h-.8zM20.5 282.0h.8v1.3h-.8zM21.4 282.0h.8v1.3h-.8zM25.9 282.0h.8v1.3h-.8zM27.7 282.0h.8v1.3h-.8zM29.5 282.0h.8v1.3h-.8zM30.4 282.0h.8v1.3h-.8zM35.8 282.0h.8v1.3h-.8zM36.7 282.0h.8v1.3h-.8zM12.4 283.8h.8v1.3h-.8zM16.0 283.8h.8v1.3h-.8zM24.1 283.8h.8v1.3h-.8zM25.9 283.8h.8v1.3h-.8zM26.8 283.8h.8v1.3h-.8zM27.7 283.8h.8v1.3h-.8zM28.6 283.8h.8v1.3h-.8zM34.0 283.8h.8v1.3h-.8zM34.9 283.8h.8v1.3h-.8zM16.9 287.3h.8v1.3h-.8zM17.8 287.3h.8v1.3h-.8zM23.2 287.3h.8v1.3h-.8zM24.1 287.3h.8v1.3h-.8zM28.6 287.3h.8v1.3h-.8zM30.4 287.3h.8v1.3h-.8zM32.2 287.3h.8v1.3h-.8zM33.1 287.3h.8v1.3h-.8zM34.0 287.3h.8v1.3h-.8zM37.6 287.3h.8v1.3h-.8zM43.0 287.3h.8v1.3h-.8zM43.9 287.3h.8v1.3h-.8zM45.7 287.3h.8v1.3h-.8zM47.5 287.3h.8v1.3h-.8zM48.4 287.3h.8v1.3h-.8zM49.3 287.3h.8v1.3h-.8zM52.9 287.3h.8v1.3h-.8zM18.7 290.9h.8v1.3h-.8zM21.4 290.9h.8v1.3h-.8zM25.0 290.9h.8v1.3h-.8zM27.7 290.9h.8v1.3h-.8zM29.5 290.9h.8v1.3h-.8zM30.4 290.9h.8v1.3h-.8zM31.3 290.9h.8v1.3h-.8zM32.2 290.9h.8v1.3h-.8zM36.7 290.9h.8v1.3h-.8zM37.6 290.9h.8v1.3h-.8zM41.2 290.9h.8v1.3h-.8zM43.0 290.9h.8v1.3h-.8zM45.7 290.9h.8v1.3h-.8zM48.4 290.9h.8v1.3h-.8zM49.3 290.9h.8v1.3h-.8zM51.1 290.9h.8v1.3h-.8zM14.2 292.7h.8v1.3h-.8zM16.0 292.7h.8v1.3h-.8zM16.9 292.7h.8v1.3h-.8zM19.6 292.7h.8v1.3h-.8zM22.3 292.7h.8v1.3h-.8zM24.1 292.7h.8v1.3h-.8zM32.2 292.7h.8v1.3h-.8zM33.1 292.7h.8v1.3h-.8zM24.1 294.5h.8v1.3h-.8zM27.7 294.5h.8v1.3h-.8zM34.0 294.5h.8v1.3h-.8zM36.7 294.5h.8v1.3h-.8zM43.0 294.5h.8v1.3h-.8zM43.9 294.5h.8v1.3h-.8zM47.5 294.5h.8v1.3h-.8zM50.2 294.5h.8v1.3h-.8zM51.1 294.5h.8v1.3h-.8zM52.0 294.5h.8v1.3h-.8zM57.4 294.5h.8v1.3h-.8zM58.3 294.5h.8v1.3h-.8zM21.4 296.3h.8v1.3h-.8zM20.5 299.9h.8v1.3h-.8zM21.4 299.9h.8v1.3h-.8zM25.0 299.9h.8v1.3h-.8zM28.6 299.9h.8v1.3h-.8zM31.3 299.9h.8v1.3h-.8zM33.1 299.9h.8v1.3h-.8zM17.8 301.7h.8v1.3h-.8zM19.6 301.7h.8v1.3h-.8zM21.4 301.7h.8v1.3h-.8zM22.3 301.7h.8v1.3h-.8zM26.8 301.7h.8v1.3h-.8zM12.4 303.5h.8v1.3h-.8zM16.0 303.5h.8v1.3h-.8zM25.9 303.5h.8v1.3h-.8zM34.0 303.5h.8v1.3h-.8zM34.9 303.5h.8v1.3h-.8zM37.6 303.5h.8v1.3h-.8zM38.5 303.5h.8v1.3h-.8zM47.5 303.5h.8v1.3h-.8zM51.1 303.5h.8v1.3h-.8zM52.9 303.5h.8v1.3h-.8zM54.7 303.5h.8v1.3h-.8zM10.6 305.3h.8v1.3h-.8zM17.8 307.1h.8v1.3h-.8zM19.6 307.1h.8v1.3h-.8zM8.8 308.9h.8v1.3h-.8zM16.9 316.0h.8v1.3h-.8zM17.8 316.0h.8v1.3h-.8zM19.6 316.0h.8v1.3h-.8zM22.3 316.0h.8v1.3h-.8zM25.0 316.0h.8v1.3h-.8zM25.9 316.0h.8v1.3h-.8zM12.4 317.8h.8v1.3h-.8zM14.2 317.8h.8v1.3h-.8zM15.1 317.8h.8v1.3h-.8zM19.6 317.8h.8v1.3h-.8zM20.5 317.8h.8v1.3h-.8zM32.2 317.8h.8v1.3h-.8zM39.4 317.8h.8v1.3h-.8zM47.5 317.8h.8v1.3h-.8zM49.3 317.8h.8v1.3h-.8zM50.2 317.8h.8v1.3h-.8zM8.8 319.6h.8v1.3h-.8zM10.6 319.6h.8v1.3h-.8zM15.1 319.6h.8v1.3h-.8zM21.4 319.6h.8v1.3h-.8zM28.6 319.6h.8v1.3h-.8zM31.3 319.6h.8v1.3h-.8zM35.8 319.6h.8v1.3h-.8zM39.4 319.6h.8v1.3h-.8zM42.1 319.6h.8v1.3h-.8zM43.0 319.6h.8v1.3h-.8zM44.8 319.6h.8v1.3h-.8zM45.7 319.6h.8v1.3h-.8zM46.6 319.6h.8v1.3h-.8zM47.5 319.6h.8v1.3h-.8zM48.4 319.6h.8v1.3h-.8zM50.2 319.6h.8v1.3h-.8zM19.6 326.8h.8v1.3h-.8zM21.4 326.8h.8v1.3h-.8zM22.3 326.8h.8v1.3h-.8zM23.2 326.8h.8v1.3h-.8zM24.1 326.8h.8v1.3h-.8zM30.4 326.8h.8v1.3h-.8zM34.0 326.8h.8v1.3h-.8zM44.8 326.8h.8v1.3h-.8zM46.6 326.8h.8v1.3h-.8zM48.4 326.8h.8v1.3h-.8zM51.1 326.8h.8v1.3h-.8zM52.0 326.8h.8v1.3h-.8zM53.8 326.8h.8v1.3h-.8zM57.4 326.8h.8v1.3h-.8zM35.8 328.6h.8v1.3h-.8zM37.6 328.6h.8v1.3h-.8zM20.5 330.4h.8v1.3h-.8zM22.3 330.4h.8v1.3h-.8zM25.9 330.4h.8v1.3h-.8zM29.5 330.4h.8v1.3h-.8zM31.3 330.4h.8v1.3h-.8zM32.2 330.4h.8v1.3h-.8zM37.6 332.1h.8v1.3h-.8zM25.0 335.7h.8v1.3h-.8zM30.4 335.7h.8v1.3h-.8zM31.3 335.7h.8v1.3h-.8zM32.2 335.7h.8v1.3h-.8zM8.8 339.3h.8v1.3h-.8zM9.7 339.3h.8v1.3h-.8zM11.5 339.3h.8v1.3h-.8zM14.2 339.3h.8v1.3h-.8zM15.1 339.3h.8v1.3h-.8zM16.0 339.3h.8v1.3h-.8zM17.8 339.3h.8v1.3h-.8zM21.4 339.3h.8v1.3h-.8zM23.2 339.3h.8v1.3h-.8zM28.6 339.3h.8v1.3h-.8zM29.5 339.3h.8v1.3h-.8zM9.7 341.1h.8v1.3h-.8zM14.2 341.1h.8v1.3h-.8zM16.0 341.1h.8v1.3h-.8zM20.5 341.1h.8v1.3h-.8zM22.3 341.1h.8v1.3h-.8zM23.2 341.1h.8v1.3h-.8zM40.3 341.1h.8v1.3h-.8zM42.1 341.1h.8v1.3h-.8zM44.8 341.1h.8v1.3h-.8zM46.6 341.1h.8v1.3h-.8zM47.5 341.1h.8v1.3h-.8zM42.1 342.9h.8v1.3h-.8zM15.1 344.7h.8v1.3h-.8zM16.0 344.7h.8v1.3h-.8zM16.9 344.7h.8v1.3h-.8zM22.3 344.7h.8v1.3h-.8zM23.2 344.7h.8v1.3h-.8zM35.8 344.7h.8v1.3h-.8zM36.7 344.7h.8v1.3h-.8zM37.6 344.7h.8v1.3h-.8zM44.8 344.7h.8v1.3h-.8zM51.1 344.7h.8v1.3h-.8zM52.0 344.7h.8v1.3h-.8zM16.0 353.7h.8v1.3h-.8zM18.7 353.7h.8v1.3h-.8zM20.5 353.7h.8v1.3h-.8zM25.9 353.7h.8v1.3h-.8zM26.8 353.7h.8v1.3h-.8zM29.5 353.7h.8v1.3h-.8zM31.3 353.7h.8v1.3h-.8zM32.2 353.7h.8v1.3h-.8zM34.0 353.7h.8v1.3h-.8zM34.9 353.7h.8v1.3h-.8zM37.6 353.7h.8v1.3h-.8zM11.5 357.2h.8v1.3h-.8zM15.1 357.2h.8v1.3h-.8zM19.6 357.2h.8v1.3h-.8zM21.4 357.2h.8v1.3h-.8zM24.1 357.2h.8v1.3h-.8zM30.4 357.2h.8v1.3h-.8zM35.8 357.2h.8v1.3h-.8zM39.4 357.2h.8v1.3h-.8zM41.2 357.2h.8v1.3h-.8zM43.0 357.2h.8v1.3h-.8zM43.9 357.2h.8v1.3h-.8zM10.6 359.0h.8v1.3h-.8zM11.5 359.0h.8v1.3h-.8zM12.4 359.0h.8v1.3h-.8zM13.3 359.0h.8v1.3h-.8zM16.0 359.0h.8v1.3h-.8zM20.5 359.0h.8v1.3h-.8zM22.3 359.0h.8v1.3h-.8zM25.9 359.0h.8v1.3h-.8zM26.8 359.0h.8v1.3h-.8zM29.5 359.0h.8v1.3h-.8zM34.0 359.0h.8v1.3h-.8zM43.9 360.8h.8v1.3h-.8zM44.8 360.8h.8v1.3h-.8zM46.6 360.8h.8v1.3h-.8zM50.2 360.8h.8v1.3h-.8zM52.0 360.8h.8v1.3h-.8zM53.8 360.8h.8v1.3h-.8zM55.6 360.8h.8v1.3h-.8zM56.5 360.8h.8v1.3h-.8zM57.4 360.8h.8v1.3h-.8zM58.3 360.8h.8v1.3h-.8zM24.1 362.6h.8v1.3h-.8zM33.1 362.6h.8v1.3h-.8zM40.3 362.6h.8v1.3h-.8zM18.7 371.6h.8v1.3h-.8zM19.6 371.6h.8v1.3h-.8zM21.4 371.6h.8v1.3h-.8zM23.2 371.6h.8v1.3h-.8zM25.0 371.6h.8v1.3h-.8zM25.9 371.6h.8v1.3h-.8zM30.4 371.6h.8v1.3h-.8zM33.1 371.6h.8v1.3h-.8zM43.0 371.6h.8v1.3h-.8zM44.8 371.6h.8v1.3h-.8zM45.7 371.6h.8v1.3h-.8zM9.7 373.4h.8v1.3h-.8zM12.4 373.4h.8v1.3h-.8zM13.3 373.4h.8v1.3h-.8zM16.0 373.4h.8v1.3h-.8zM8.8 375.2h.8v1.3h-.8zM12.4 375.2h.8v1.3h-.8zM13.3 375.2h.8v1.3h-.8zM14.2 375.2h.8v1.3h-.8zM15.1 375.2h.8v1.3h-.8zM27.7 375.2h.8v1.3h-.8zM15.1 376.9h.8v1.3h-.8zM16.0 376.9h.8v1.3h-.8zM16.9 382.3h.8v1.3h-.8zM18.7 382.3h.8v1.3h-.8zM19.6 382.3h.8v1.3h-.8zM21.4 382.3h.8v1.3h-.8zM22.3 382.3h.8v1.3h-.8zM23.2 382.3h.8v1.3h-.8zM24.1 382.3h.8v1.3h-.8zM26.8 382.3h.8v1.3h-.8zM27.7 382.3h.8v1.3h-.8zM32.2 382.3h.8v1.3h-.8zM43.9 382.3h.8v1.3h-.8zM44.8 382.3h.8v1.3h-.8zM8.8 384.1h.8v1.3h-.8zM9.7 384.1h.8v1.3h-.8zM10.6 384.1h.8v1.3h-.8zM13.3 384.1h.8v1.3h-.8zM16.0 384.1h.8v1.3h-.8zM9.7 385.9h.8v1.3h-.8zM11.5 385.9h.8v1.3h-.8zM14.2 385.9h.8v1.3h-.8zM25.9 385.9h.8v1.3h-.8zM26.8 385.9h.8v1.3h-.8zM16.0 387.7h.8v1.3h-.8zM7.0 389.5h.8v1.3h-.8zM7.0 393.1h.8v1.3h-.8zM9.7 393.1h.8v1.3h-.8zM12.4 393.1h.8v1.3h-.8zM14.2 393.1h.8v1.3h-.8zM20.5 393.1h.8v1.3h-.8zM23.2 393.1h.8v1.3h-.8zM25.0 393.1h.8v1.3h-.8zM25.9 393.1h.8v1.3h-.8zM28.6 393.1h.8v1.3h-.8zM29.5 393.1h.8v1.3h-.8zM32.2 393.1h.8v1.3h-.8zM33.1 393.1h.8v1.3h-.8zM37.6 393.1h.8v1.3h-.8zM41.2 393.1h.8v1.3h-.8zM43.0 393.1h.8v1.3h-.8zM43.9 393.1h.8v1.3h-.8zM45.7 393.1h.8v1.3h-.8zM46.6 393.1h.8v1.3h-.8zM47.5 393.1h.8v1.3h-.8zM49.3 393.1h.8v1.3h-.8zM51.1 393.1h.8v1.3h-.8zM52.9 393.1h.8v1.3h-.8zM54.7 393.1h.8v1.3h-.8zM16.0 394.9h.8v1.3h-.8zM17.8 394.9h.8v1.3h-.8zM18.7 394.9h.8v1.3h-.8zM22.3 394.9h.8v1.3h-.8zM30.4 394.9h.8v1.3h-.8zM31.3 394.9h.8v1.3h-.8zM32.2 394.9h.8v1.3h-.8zM33.1 394.9h.8v1.3h-.8zM34.0 394.9h.8v1.3h-.8zM35.8 394.9h.8v1.3h-.8zM36.7 394.9h.8v1.3h-.8zM38.5 394.9h.8v1.3h-.8zM43.9 394.9h.8v1.3h-.8zM47.5 394.9h.8v1.3h-.8zM49.3 394.9h.8v1.3h-.8zM50.2 394.9h.8v1.3h-.8zM52.9 394.9h.8v1.3h-.8zM54.7 394.9h.8v1.3h-.8zM10.6 396.7h.8v1.3h-.8zM14.2 396.7h.8v1.3h-.8zM16.0 396.7h.8v1.3h-.8zM16.9 396.7h.8v1.3h-.8zM18.7 396.7h.8v1.3h-.8zM20.5 396.7h.8v1.3h-.8zM21.4 396.7h.8v1.3h-.8zM25.0 396.7h.8v1.3h-.8zM27.7 396.7h.8v1.3h-.8zM28.6 396.7h.8v1.3h-.8zM30.4 396.7h.8v1.3h-.8zM35.8 396.7h.8v1.3h-.8zM41.2 396.7h.8v1.3h-.8zM43.0 396.7h.8v1.3h-.8zM44.8 396.7h.8v1.3h-.8zM46.6 396.7h.8v1.3h-.8zM48.4 396.7h.8v1.3h-.8zM49.3 396.7h.8v1.3h-.8zM50.2 396.7h.8v1.3h-.8zM51.1 396.7h.8v1.3h-.8zM52.0 396.7h.8v1.3h-.8zM8.8 400.2h.8v1.3h-.8zM9.7 400.2h.8v1.3h-.8zM10.6 400.2h.8v1.3h-.8zM13.3 400.2h.8v1.3h-.8zM16.9 400.2h.8v1.3h-.8zM18.7 400.2h.8v1.3h-.8zM21.4 400.2h.8v1.3h-.8zM22.3 400.2h.8v1.3h-.8zM23.2 400.2h.8v1.3h-.8zM25.0 400.2h.8v1.3h-.8zM25.9 400.2h.8v1.3h-.8zM27.7 400.2h.8v1.3h-.8zM30.4 400.2h.8v1.3h-.8zM11.5 402.0h.8v1.3h-.8zM14.2 402.0h.8v1.3h-.8zM16.0 402.0h.8v1.3h-.8zM17.8 402.0h.8v1.3h-.8zM18.7 402.0h.8v1.3h-.8zM19.6 402.0h.8v1.3h-.8zM22.3 402.0h.8v1.3h-.8zM23.2 402.0h.8v1.3h-.8zM26.8 402.0h.8v1.3h-.8zM29.5 402.0h.8v1.3h-.8zM31.3 402.0h.8v1.3h-.8zM36.7 402.0h.8v1.3h-.8zM39.4 402.0h.8v1.3h-.8zM40.3 402.0h.8v1.3h-.8zM43.0 402.0h.8v1.3h-.8zM44.8 402.0h.8v1.3h-.8zM49.3 402.0h.8v1.3h-.8zM16.9 403.8h.8v1.3h-.8zM17.8 403.8h.8v1.3h-.8zM20.5 403.8h.8v1.3h-.8zM27.7 403.8h.8v1.3h-.8zM30.4 403.8h.8v1.3h-.8zM32.2 403.8h.8v1.3h-.8zM34.0 403.8h.8v1.3h-.8zM36.7 403.8h.8v1.3h-.8zM44.8 403.8h.8v1.3h-.8zM45.7 403.8h.8v1.3h-.8zM52.9 403.8h.8v1.3h-.8zM11.5 411.0h.8v1.3h-.8zM13.3 411.0h.8v1.3h-.8zM15.1 411.0h.8v1.3h-.8zM16.9 411.0h.8v1.3h-.8zM18.7 411.0h.8v1.3h-.8zM19.6 411.0h.8v1.3h-.8zM20.5 411.0h.8v1.3h-.8zM21.4 411.0h.8v1.3h-.8zM17.8 425.3h.8v1.3h-.8zM18.7 425.3h.8v1.3h-.8zM21.4 425.3h.8v1.3h-.8zM23.2 425.3h.8v1.3h-.8zM25.0 425.3h.8v1.3h-.8zM25.9 425.3h.8v1.3h-.8z"/><path fill="#000000" fill-opacity="0.78" d="M18.7 6.0h.8v1.3h-.8zM21.4 6.0h.8v1.3h-.8zM22.3 6.0h.8v1.3h-.8zM24.1 6.0h.8v1.3h-.8zM34.9 6.0h.8v1.3h-.8zM36.7 6.0h.8v1.3h-.8zM38.5 6.0h.8v1.3h-.8zM14.2 7.8h.8v1.3h-.8zM15.1 7.8h.8v1.3h-.8zM19.6 7.8h.8v1.3h-.8zM16.9 9.6h.8v1.3h-.8zM27.7 11.4h.8v1.3h-.8zM30.4 11.4h.8v1.3h-.8zM34.0 11.4h.8v1.3h-.8zM41.2 11.4h.8v1.3h-.8zM42.1 11.4h.8v1.3h-.8zM45.7 11.4h.8v1.3h-.8zM47.5 11.4h.8v1.3h-.8zM52.0 11.4h.8v1.3h-.8zM58.3 11.4h.8v1.3h-.8zM61.9 11.4h.8v1.3h-.8zM15.1 13.2h.8v1.3h-.8zM16.0 13.2h.8v1.3h-.8zM18.7 13.2h.8v1.3h-.8zM19.6 13.2h.8v1.3h-.8zM21.4 13.2h.8v1.3h-.8zM22.3 13.2h.8v1.3h-.8zM15.1 15.0h.8v1.3h-.8zM16.0 15.0h.8v1.3h-.8zM16.9 15.0h.8v1.3h-.8zM19.6 15.0h.8v1.3h-.8zM25.9 15.0h.8v1.3h-.8zM24.1 18.5h.8v1.3h-.8zM31.3 18.5h.8v1.3h-.8zM38.5 18.5h.8v1.3h-.8zM39.4 18.5h.8v1.3h-.8zM15.1 20.3h.8v1.3h-.8zM25.0 20.3h.8v1.3h-.8zM25.9 20.3h.8v1.3h-.8zM27.7 20.3h.8v1.3h-.8zM28.6 20.3h.8v1.3h-.8zM33.1 20.3h.8v1.3h-.8zM34.9 20.3h.8v1.3h-.8zM36.7 20.3h.8v1.3h-.8zM38.5 20.3h.8v1.3h-.8zM7.0 23.9h.8v1.3h-.8zM20.5 29.3h.8v1.3h-.8zM22.3 29.3h.8v1.3h-.8zM23.2 29.3h.8v1.3h-.8zM26.8 29.3h.8v1.3h-.8zM33.1 29.3h.8v1.3h-.8zM14.2 31.1h.8v1.3h-.8zM16.0 31.1h.8v1.3h-.8zM18.7 31.1h.8v1.3h-.8zM23.2 31.1h.8v1.3h-.8zM25.9 31.1h.8v1.3h-.8zM26.8 31.1h.8v1.3h-.8zM29.5 31.1h.8v1.3h-.8zM37.6 31.1h.8v1.3h-.8zM39.4 31.1h.8v1.3h-.8zM41.2 31.1h.8v1.3h-.8zM52.0 31.1h.8v1.3h-.8zM14.2 32.9h.8v1.3h-.8zM15.1 32.9h.8v1.3h-.8zM18.7 32.9h.8v1.3h-.8zM20.5 32.9h.8v1.3h-.8zM21.4 32.9h.8v1.3h-.8zM25.9 32.9h.8v1.3h-.8zM26.8 32.9h.8v1.3h-.8zM27.7 32.9h.8v1.3h-.8zM29.5 32.9h.8v1.3h-.8zM35.8 32.9h.8v1.3h-.8zM45.7 32.9h.8v1.3h-.8zM52.9 32.9h.8v1.3h-.8zM54.7 32.9h.8v1.3h-.8zM18.7 34.7h.8v1.3h-.8zM25.0 34.7h.8v1.3h-.8zM27.7 34.7h.8v1.3h-.8zM30.4 34.7h.8v1.3h-.8zM37.6 34.7h.8v1.3h-.8zM38.5 34.7h.8v1.3h-.8zM41.2 34.7h.8v1.3h-.8zM44.8 34.7h.8v1.3h-.8zM48.4 34.7h.8v1.3h-.8zM54.7 34.7h.8v1.3h-.8zM59.2 34.7h.8v1.3h-.8zM60.1 34.7h.8v1.3h-.8zM63.7 34.7h.8v1.3h-.8zM64.6 34.7h.8v1.3h-.8zM65.5 34.7h.8v1.3h-.8zM12.4 38.3h.8v1.3h-.8zM14.2 38.3h.8v1.3h-.8zM15.1 38.3h.8v1.3h-.8zM16.0 38.3h.8v1.3h-.8zM20.5 38.3h.8v1.3h-.8zM23.2 38.3h.8v1.3h-.8zM25.9 38.3h.8v1.3h-.8zM27.7 38.3h.8v1.3h-.8zM13.3 40.1h.8v1.3h-.8zM14.2 40.1h.8v1.3h-.8zM16.0 40.1h.8v1.3h-.8zM22.3 40.1h.8v1.3h-.8zM24.1 40.1h.8v1.3h-.8zM26.8 40.1h.8v1.3h-.8zM34.0 40.1h.8v1.3h-.8zM34.9 40.1h.8v1.3h-.8zM36.7 40.1h.8v1.3h-.8zM51.1 40.1h.8v1.3h-.8zM53.8 40.1h.8v1.3h-.8zM55.6 40.1h.8v1.3h-.8zM29.5 41.8h.8v1.3h-.8zM18.7 43.6h.8v1.3h-.8zM21.4 43.6h.8v1.3h-.8zM23.2 43.6h.8v1.3h-.8zM26.8 43.6h.8v1.3h-.8zM33.1 43.6h.8v1.3h-.8zM18.7 45.4h.8v1.3h-.8zM19.6 45.4h.8v1.3h-.8zM20.5 45.4h.8v1.3h-.8zM24.1 45.4h.8v1.3h-.8zM26.8 45.4h.8v1.3h-.8zM33.1 45.4h.8v1.3h-.8zM34.9 45.4h.8v1.3h-.8zM35.8 45.4h.8v1.3h-.8zM36.7 45.4h.8v1.3h-.8zM39.4 45.4h.8v1.3h-.8zM43.9 45.4h.8v1.3h-.8zM12.4 47.2h.8v1.3h-.8zM14.2 47.2h.8v1.3h-.8zM17.8 47.2h.8v1.3h-.8zM20.5 47.2h.8v1.3h-.8zM11.5 49.0h.8v1.3h-.8zM13.3 49.0h.8v1.3h-.8zM14.2 49.0h.8v1.3h-.8zM16.9 49.0h.8v1.3h-.8zM17.8 49.0h.8v1.3h-.8zM22.3 49.0h.8v1.3h-.8zM35.8 49.0h.8v1.3h-.8zM40.3 49.0h.8v1.3h-.8zM11.5 50.8h.8v1.3h-.8zM15.1 50.8h.8v1.3h-.8zM17.8 50.8h.8v1.3h-.8zM21.4 50.8h.8v1.3h-.8zM24.1 50.8h.8v1.3h-.8zM25.0 50.8h.8v1.3h-.8zM29.5 50.8h.8v1.3h-.8zM31.3 50.8h.8v1.3h-.8zM34.9 50.8h.8v1.3h-.8zM16.9 52.6h.8v1.3h-.8zM22.3 52.6h.8v1.3h-.8zM27.7 52.6h.8v1.3h-.8zM28.6 52.6h.8v1.3h-.8zM29.5 52.6h.8v1.3h-.8zM31.3 52.6h.8v1.3h-.8zM34.0 52.6h.8v1.3h-.8zM10.6 56.2h.8v1.3h-.8zM12.4 56.2h.8v1.3h-.8zM13.3 56.2h.8v1.3h-.8zM16.9 56.2h.8v1.3h-.8zM19.6 56.2h.8v1.3h-.8zM24.1 56.2h.8v1.3h-.8zM27.7 56.2h.8v1.3h-.8zM10.6 58.0h.8v1.3h-.8zM18.7 58.0h.8v1.3h-.8zM19.6 58.0h.8v1.3h-.8zM20.5 58.0h.8v1.3h-.8zM21.4 58.0h.8v1.3h-.8zM22.3 58.0h.8v1.3h-.8zM15.1 61.6h.8v1.3h-.8zM16.0 61.6h.8v1.3h-.8zM18.7 61.6h.8v1.3h-.8zM23.2 66.9h.8v1.3h-.8zM30.4 66.9h.8v1.3h-.8zM31.3 66.9h.8v1.3h-.8zM22.3 68.7h.8v1.3h-.8zM23.2 68.7h.8v1.3h-.8zM29.5 68.7h.8v1.3h-.8zM35.8 68.7h.8v1.3h-.8zM43.0 68.7h.8v1.3h-.8zM49.3 68.7h.8v1.3h-.8zM50.2 68.7h.8v1.3h-.8zM55.6 68.7h.8v1.3h-.8zM56.5 68.7h.8v1.3h-.8zM59.2 68.7h.8v1.3h-.8zM61.9 68.7h.8v1.3h-.8zM64.6 68.7h.8v1.3h-.8zM65.5 68.7h.8v1.3h-.8zM70.9 68.7h.8v1.3h-.8zM76.3 68.7h.8v1.3h-.8zM15.1 70.5h.8v1.3h-.8zM22.3 70.5h.8v1.3h-.8zM24.1 70.5h.8v1.3h-.8zM32.2 70.5h.8v1.3h-.8zM34.9 70.5h.8v1.3h-.8zM35.8 70.5h.8v1.3h-.8zM37.6 70.5h.8v1.3h-.8zM43.0 70.5h.8v1.3h-.8zM48.4 70.5h.8v1.3h-.8zM51.1 70.5h.8v1.3h-.8zM52.0 70.5h.8v1.3h-.8zM52.9 70.5h.8v1.3h-.8zM55.6 70.5h.8v1.3h-.8zM57.4 70.5h.8v1.3h-.8zM61.0 70.5h.8v1.3h-.8zM61.9 70.5h.8v1.3h-.8zM25.9 72.3h.8v1.3h-.8zM39.4 72.3h.8v1.3h-.8zM40.3 72.3h.8v1.3h-.8zM41.2 72.3h.8v1.3h-.8zM42.1 72.3h.8v1.3h-.8zM44.8 72.3h.8v1.3h-.8zM49.3 72.3h.8v1.3h-.8zM58.3 72.3h.8v1.3h-.8zM59.2 72.3h.8v1.3h-.8zM64.6 72.3h.8v1.3h-.8zM65.5 72.3h.8v1.3h-.8zM69.1 72.3h.8v1.3h-.8zM7.0 74.1h.8v1.3h-.8zM16.0 77.7h.8v1.3h-.8zM13.3 81.3h.8v1.3h-.8zM16.9 81.3h.8v1.3h-.8zM20.5 81.3h.8v1.3h-.8zM24.1 81.3h.8v1.3h-.8zM40.3 81.3h.8v1.3h-.8zM44.8 81.3h.8v1.3h-.8zM45.7 81.3h.8v1.3h-.8zM16.9 83.1h.8v1.3h-.8zM23.2 83.1h.8v1.3h-.8zM44.8 83.1h.8v1.3h-.8zM45.7 83.1h.8v1.3h-.8zM46.6 83.1h.8v1.3h-.8zM52.9 83.1h.8v1.3h-.8zM55.6 83.1h.8v1.3h-.8zM56.5 83.1h.8v1.3h-.8zM58.3 83.1h.8v1.3h-.8zM38.5 88.4h.8v1.3h-.8zM39.4 88.4h.8v1.3h-.8zM43.9 88.4h.8v1.3h-.8zM46.6 88.4h.8v1.3h-.8zM16.0 90.2h.8v1.3h-.8zM19.6 90.2h.8v1.3h-.8zM22.3 90.2h.8v1.3h-.8zM54.7 90.2h.8v1.3h-.8zM16.0 95.6h.8v1.3h-.8zM16.9 95.6h.8v1.3h-.8zM22.3 95.6h.8v1.3h-.8zM25.0 95.6h.8v1.3h-.8zM29.5 95.6h.8v1.3h-.8zM35.8 95.6h.8v1.3h-.8zM36.7 95.6h.8v1.3h-.8zM37.6 95.6h.8v1.3h-.8zM38.5 95.6h.8v1.3h-.8zM41.2 95.6h.8v1.3h-.8zM42.1 95.6h.8v1.3h-.8zM44.8 95.6h.8v1.3h-.8zM46.6 95.6h.8v1.3h-.8zM13.3 97.4h.8v1.3h-.8zM14.2 97.4h.8v1.3h-.8zM32.2 97.4h.8v1.3h-.8zM35.8 97.4h.8v1.3h-.8zM37.6 97.4h.8v1.3h-.8zM40.3 97.4h.8v1.3h-.8zM41.2 97.4h.8v1.3h-.8zM43.0 97.4h.8v1.3h-.8zM51.1 97.4h.8v1.3h-.8zM15.1 102.8h.8v1.3h-.8zM23.2 102.8h.8v1.3h-.8zM25.9 102.8h.8v1.3h-.8zM27.7 102.8h.8v1.3h-.8zM34.0 102.8h.8v1.3h-.8zM50.2 102.8h.8v1.3h-.8zM53.8 102.8h.8v1.3h-.8zM10.6 104.6h.8v1.3h-.8zM13.3 104.6h.8v1.3h-.8zM19.6 104.6h.8v1.3h-.8zM22.3 104.6h.8v1.3h-.8zM27.7 104.6h.8v1.3h-.8zM33.1 104.6h.8v1.3h-.8zM34.0 104.6h.8v1.3h-.8zM34.9 104.6h.8v1.3h-.8zM45.7 104.6h.8v1.3h-.8zM48.4 104.6h.8v1.3h-.8zM51.1 104.6h.8v1.3h-.8zM53.8 104.6h.8v1.3h-.8zM59.2 104.6h.8v1.3h-.8zM18.7 106.4h.8v1.3h-.8zM25.0 106.4h.8v1.3h-.8zM25.9 106.4h.8v1.3h-.8zM41.2 106.4h.8v1.3h-.8zM17.8 111.7h.8v1.3h-.8zM19.6 111.7h.8v1.3h-.8zM31.3 111.7h.8v1.3h-.8zM32.2 111.7h.8v1.3h-.8zM33.1 111.7h.8v1.3h-.8zM34.0 111.7h.8v1.3h-.8zM43.0 111.7h.8v1.3h-.8zM43.9 111.7h.8v1.3h-.8zM48.4 111.7h.8v1.3h-.8zM52.0 111.7h.8v1.3h-.8zM14.2 117.1h.8v1.3h-.8zM17.8 117.1h.8v1.3h-.8zM29.5 117.1h.8v1.3h-.8zM31.3 117.1h.8v1.3h-.8zM34.0 117.1h.8v1.3h-.8zM35.8 117.1h.8v1.3h-.8zM39.4 117.1h.8v1.3h-.8zM41.2 117.1h.8v1.3h-.8zM42.1 117.1h.8v1.3h-.8zM20.5 118.9h.8v1.3h-.8zM23.2 118.9h.8v1.3h-.8zM28.6 118.9h.8v1.3h-.8zM36.7 118.9h.8v1.3h-.8zM41.2 118.9h.8v1.3h-.8zM45.7 118.9h.8v1.3h-.8zM50.2 118.9h.8v1.3h-.8zM52.0 118.9h.8v1.3h-.8zM52.9 118.9h.8v1.3h-.8zM56.5 118.9h.8v1.3h-.8zM7.9 120.7h.8v1.3h-.8zM8.8 120.7h.8v1.3h-.8zM11.5 120.7h.8v1.3h-.8zM12.4 120.7h.8v1.3h-.8zM16.0 120.7h.8v1.3h-.8zM23.2 120.7h.8v1.3h-.8zM34.9 120.7h.8v1.3h-.8zM36.7 120.7h.8v1.3h-.8zM40.3 120.7h.8v1.3h-.8zM34.9 122.5h.8v1.3h-.8zM40.3 122.5h.8v1.3h-.8zM45.7 122.5h.8v1.3h-.8zM52.0 122.5h.8v1.3h-.8zM15.1 126.1h.8v1.3h-.8zM13.3 127.9h.8v1.3h-.8zM15.1 127.9h.8v1.3h-.8zM19.6 127.9h.8v1.3h-.8zM21.4 127.9h.8v1.3h-.8zM25.0 127.9h.8v1.3h-.8zM27.7 127.9h.8v1.3h-.8zM28.6 127.9h.8v1.3h-.8zM29.5 127.9h.8v1.3h-.8zM32.2 127.9h.8v1.3h-.8zM37.6 127.9h.8v1.3h-.8zM39.4 127.9h.8v1.3h-.8zM42.1 127.9h.8v1.3h-.8zM43.0 127.9h.8v1.3h-.8zM45.7 127.9h.8v1.3h-.8zM52.0 127.9h.8v1.3h-.8zM53.8 127.9h.8v1.3h-.8zM54.7 127.9h.8v1.3h-.8zM59.2 127.9h.8v1.3h-.8zM60.1 127.9h.8v1.3h-.8zM34.0 129.7h.8v1.3h-.8zM42.1 129.7h.8v1.3h-.8zM43.0 129.7h.8v1.3h-.8zM45.7 129.7h.8v1.3h-.8zM46.6 129.7h.8v1.3h-.8zM48.4 129.7h.8v1.3h-.8zM49.3 129.7h.8v1.3h-.8zM50.2 129.7h.8v1.3h-.8zM52.0 129.7h.8v1.3h-.8zM57.4 129.7h.8v1.3h-.8zM25.9 140.4h.8v1.3h-.8zM26.8 140.4h.8v1.3h-.8zM28.6 140.4h.8v1.3h-.8zM29.5 140.4h.8v1.3h-.8zM32.2 140.4h.8v1.3h-.8zM34.0 140.4h.8v1.3h-.8zM34.9 140.4h.8v1.3h-.8zM41.2 140.4h.8v1.3h-.8zM43.0 140.4h.8v1.3h-.8zM53.8 140.4h.8v1.3h-.8zM55.6 140.4h.8v1.3h-.8zM40.3 142.2h.8v1.3h-.8zM41.2 142.2h.8v1.3h-.8zM43.9 142.2h.8v1.3h-.8zM44.8 142.2h.8v1.3h-.8zM45.7 142.2h.8v1.3h-.8zM52.0 142.2h.8v1.3h-.8zM9.7 144.0h.8v1.3h-.8zM11.5 144.0h.8v1.3h-.8zM13.3 144.0h.8v1.3h-.8zM15.1 144.0h.8v1.3h-.8zM23.2 144.0h.8v1.3h-.8zM24.1 144.0h.8v1.3h-.8zM25.0 144.0h.8v1.3h-.8zM26.8 144.0h.8v1.3h-.8zM28.6 144.0h.8v1.3h-.8zM32.2 144.0h.8v1.3h-.8zM28.6 145.8h.8v1.3h-.8zM40.3 147.6h.8v1.3h-.8zM41.2 147.6h.8v1.3h-.8zM44.8 147.6h.8v1.3h-.8zM48.4 147.6h.8v1.3h-.8zM54.7 147.6h.8v1.3h-.8zM55.6 147.6h.8v1.3h-.8zM30.4 160.1h.8v1.3h-.8zM34.0 160.1h.8v1.3h-.8zM41.2 160.1h.8v1.3h-.8zM52.9 160.1h.8v1.3h-.8zM56.5 160.1h.8v1.3h-.8zM37.6 161.9h.8v1.3h-.8zM38.5 161.9h.8v1.3h-.8zM40.3 161.9h.8v1.3h-.8zM42.1 161.9h.8v1.3h-.8zM44.8 161.9h.8v1.3h-.8zM45.7 161.9h.8v1.3h-.8zM47.5 161.9h.8v1.3h-.8zM48.4 161.9h.8v1.3h-.8zM51.1 161.9h.8v1.3h-.8zM52.9 161.9h.8v1.3h-.8zM57.4 161.9h.8v1.3h-.8zM10.6 163.7h.8v1.3h-.8zM11.5 163.7h.8v1.3h-.8zM13.3 163.7h.8v1.3h-.8zM14.2 163.7h.8v1.3h-.8zM16.9 163.7h.8v1.3h-.8zM17.8 163.7h.8v1.3h-.8zM18.7 163.7h.8v1.3h-.8zM19.6 163.7h.8v1.3h-.8zM20.5 163.7h.8v1.3h-.8zM22.3 163.7h.8v1.3h-.8zM23.2 163.7h.8v1.3h-.8zM29.5 165.5h.8v1.3h-.8zM38.5 167.3h.8v1.3h-.8zM43.0 167.3h.8v1.3h-.8zM46.6 167.3h.8v1.3h-.8zM50.2 167.3h.8v1.3h-.8zM51.1 167.3h.8v1.3h-.8zM52.0 167.3h.8v1.3h-.8zM54.7 167.3h.8v1.3h-.8zM55.6 167.3h.8v1.3h-.8zM57.4 167.3h.8v1.3h-.8zM7.0 170.9h.8v1.3h-.8zM7.9 170.9h.8v1.3h-.8zM12.4 170.9h.8v1.3h-.8zM17.8 170.9h.8v1.3h-.8zM24.1 170.9h.8v1.3h-.8zM25.0 170.9h.8v1.3h-.8zM32.2 170.9h.8v1.3h-.8zM19.6 172.7h.8v1.3h-.8zM20.5 172.7h.8v1.3h-.8zM21.4 172.7h.8v1.3h-.8zM23.2 172.7h.8v1.3h-.8zM24.1 172.7h.8v1.3h-.8zM30.4 172.7h.8v1.3h-.8zM37.6 172.7h.8v1.3h-.8zM41.2 172.7h.8v1.3h-.8zM53.8 172.7h.8v1.3h-.8zM54.7 172.7h.8v1.3h-.8zM55.6 172.7h.8v1.3h-.8zM56.5 172.7h.8v1.3h-.8zM58.3 172.7h.8v1.3h-.8zM15.1 174.5h.8v1.3h-.8zM17.8 174.5h.8v1.3h-.8zM19.6 174.5h.8v1.3h-.8zM53.8 174.5h.8v1.3h-.8zM55.6 174.5h.8v1.3h-.8zM25.0 176.2h.8v1.3h-.8zM31.3 176.2h.8v1.3h-.8zM40.3 176.2h.8v1.3h-.8zM41.2 176.2h.8v1.3h-.8zM42.1 176.2h.8v1.3h-.8zM44.8 176.2h.8v1.3h-.8zM49.3 176.2h.8v1.3h-.8zM53.8 176.2h.8v1.3h-.8zM54.7 176.2h.8v1.3h-.8zM19.6 179.8h.8v1.3h-.8zM20.5 179.8h.8v1.3h-.8zM23.2 179.8h.8v1.3h-.8zM26.8 179.8h.8v1.3h-.8zM35.8 179.8h.8v1.3h-.8zM55.6 179.8h.8v1.3h-.8zM27.7 181.6h.8v1.3h-.8zM29.5 181.6h.8v1.3h-.8zM31.3 181.6h.8v1.3h-.8zM33.1 181.6h.8v1.3h-.8zM34.0 181.6h.8v1.3h-.8zM10.6 187.0h.8v1.3h-.8zM14.2 187.0h.8v1.3h-.8zM15.1 187.0h.8v1.3h-.8zM17.8 187.0h.8v1.3h-.8zM22.3 187.0h.8v1.3h-.8zM23.2 187.0h.8v1.3h-.8zM29.5 187.0h.8v1.3h-.8zM30.4 187.0h.8v1.3h-.8zM19.6 188.8h.8v1.3h-.8zM24.1 188.8h.8v1.3h-.8zM27.7 188.8h.8v1.3h-.8zM39.4 188.8h.8v1.3h-.8zM42.1 188.8h.8v1.3h-.8zM43.9 188.8h.8v1.3h-.8zM10.6 190.6h.8v1.3h-.8zM13.3 190.6h.8v1.3h-.8zM16.9 190.6h.8v1.3h-.8zM18.7 190.6h.8v1.3h-.8zM27.7 190.6h.8v1.3h-.8zM39.4 190.6h.8v1.3h-.8zM55.6 190.6h.8v1.3h-.8zM56.5 190.6h.8v1.3h-.8zM57.4 190.6h.8v1.3h-.8zM11.5 192.4h.8v1.3h-.8zM13.3 192.4h.8v1.3h-.8zM14.2 192.4h.8v1.3h-.8zM16.9 192.4h.8v1.3h-.8zM17.8 192.4h.8v1.3h-.8zM22.3 192.4h.8v1.3h-.8zM26.8 192.4h.8v1.3h-.8zM28.6 192.4h.8v1.3h-.8zM29.5 192.4h.8v1.3h-.8zM31.3 192.4h.8v1.3h-.8zM32.2 192.4h.8v1.3h-.8zM36.7 192.4h.8v1.3h-.8zM43.9 192.4h.8v1.3h-.8zM45.7 192.4h.8v1.3h-.8zM9.7 206.7h.8v1.3h-.8zM15.1 206.7h.8v1.3h-.8zM17.8 206.7h.8v1.3h-.8zM20.5 206.7h.8v1.3h-.8zM23.2 206.7h.8v1.3h-.8zM25.0 206.7h.8v1.3h-.8zM25.9 206.7h.8v1.3h-.8zM27.7 206.7h.8v1.3h-.8zM31.3 206.7h.8v1.3h-.8zM52.9 206.7h.8v1.3h-.8zM53.8 206.7h.8v1.3h-.8zM12.4 208.5h.8v1.3h-.8zM14.2 208.5h.8v1.3h-.8zM16.9 208.5h.8v1.3h-.8zM21.4 208.5h.8v1.3h-.8zM27.7 208.5h.8v1.3h-.8zM31.3 208.5h.8v1.3h-.8zM32.2 208.5h.8v1.3h-.8zM33.1 208.5h.8v1.3h-.8zM35.8 208.5h.8v1.3h-.8zM39.4 208.5h.8v1.3h-.8zM41.2 208.5h.8v1.3h-.8zM47.5 208.5h.8v1.3h-.8zM50.2 208.5h.8v1.3h-.8zM52.0 208.5h.8v1.3h-.8zM21.4 210.3h.8v1.3h-.8zM25.9 210.3h.8v1.3h-.8zM26.8 210.3h.8v1.3h-.8zM29.5 210.3h.8v1.3h-.8zM30.4 210.3h.8v1.3h-.8zM32.2 210.3h.8v1.3h-.8zM7.0 212.1h.8v1.3h-.8zM17.8 215.7h.8v1.3h-.8zM19.6 215.7h.8v1.3h-.8zM20.5 215.7h.8v1.3h-.8zM21.4 215.7h.8v1.3h-.8zM22.3 215.7h.8v1.3h-.8zM25.0 215.7h.8v1.3h-.8zM31.3 215.7h.8v1.3h-.8zM34.0 215.7h.8v1.3h-.8zM34.9 215.7h.8v1.3h-.8zM36.7 215.7h.8v1.3h-.8zM39.4 215.7h.8v1.3h-.8zM41.2 215.7h.8v1.3h-.8zM52.0 215.7h.8v1.3h-.8zM58.3 215.7h.8v1.3h-.8zM11.5 219.3h.8v1.3h-.8zM17.8 219.3h.8v1.3h-.8zM19.6 219.3h.8v1.3h-.8zM24.1 219.3h.8v1.3h-.8zM27.7 219.3h.8v1.3h-.8zM32.2 219.3h.8v1.3h-.8zM37.6 219.3h.8v1.3h-.8zM16.9 221.0h.8v1.3h-.8zM24.1 224.6h.8v1.3h-.8zM18.7 226.4h.8v1.3h-.8zM14.2 228.2h.8v1.3h-.8zM16.0 228.2h.8v1.3h-.8zM17.8 228.2h.8v1.3h-.8zM21.4 228.2h.8v1.3h-.8zM27.7 228.2h.8v1.3h-.8zM29.5 228.2h.8v1.3h-.8zM35.8 228.2h.8v1.3h-.8zM36.7 228.2h.8v1.3h-.8zM39.4 228.2h.8v1.3h-.8zM25.0 230.0h.8v1.3h-.8zM26.8 230.0h.8v1.3h-.8zM31.3 230.0h.8v1.3h-.8zM34.9 230.0h.8v1.3h-.8zM17.8 231.8h.8v1.3h-.8zM37.6 231.8h.8v1.3h-.8zM41.2 231.8h.8v1.3h-.8zM43.0 231.8h.8v1.3h-.8zM51.1 231.8h.8v1.3h-.8zM20.5 235.4h.8v1.3h-.8zM22.3 235.4h.8v1.3h-.8zM12.4 237.2h.8v1.3h-.8zM21.4 246.1h.8v1.3h-.8zM26.8 246.1h.8v1.3h-.8zM29.5 246.1h.8v1.3h-.8zM31.3 246.1h.8v1.3h-.8zM35.8 246.1h.8v1.3h-.8zM38.5 246.1h.8v1.3h-.8zM53.8 246.1h.8v1.3h-.8zM54.7 246.1h.8v1.3h-.8zM22.3 247.9h.8v1.3h-.8zM26.8 247.9h.8v1.3h-.8zM27.7 247.9h.8v1.3h-.8zM28.6 247.9h.8v1.3h-.8zM29.5 247.9h.8v1.3h-.8zM15.1 249.7h.8v1.3h-.8zM16.9 249.7h.8v1.3h-.8zM37.6 249.7h.8v1.3h-.8zM42.1 249.7h.8v1.3h-.8zM50.2 249.7h.8v1.3h-.8zM52.9 249.7h.8v1.3h-.8zM54.7 249.7h.8v1.3h-.8zM20.5 256.9h.8v1.3h-.8zM19.6 258.7h.8v1.3h-.8zM22.3 258.7h.8v1.3h-.8zM30.4 258.7h.8v1.3h-.8zM32.2 258.7h.8v1.3h-.8zM33.1 258.7h.8v1.3h-.8zM34.9 258.7h.8v1.3h-.8zM35.8 258.7h.8v1.3h-.8zM16.0 260.5h.8v1.3h-.8zM25.0 260.5h.8v1.3h-.8zM26.8 260.5h.8v1.3h-.8zM28.6 260.5h.8v1.3h-.8zM29.5 260.5h.8v1.3h-.8zM33.1 260.5h.8v1.3h-.8zM35.8 260.5h.8v1.3h-.8zM37.6 260.5h.8v1.3h-.8zM39.4 260.5h.8v1.3h-.8zM44.8 260.5h.8v1.3h-.8zM46.6 260.5h.8v1.3h-.8zM49.3 260.5h.8v1.3h-.8zM52.9 260.5h.8v1.3h-.8zM53.8 260.5h.8v1.3h-.8zM55.6 260.5h.8v1.3h-.8zM14.2 262.3h.8v1.3h-.8zM21.4 262.3h.8v1.3h-.8zM22.3 262.3h.8v1.3h-.8zM30.4 262.3h.8v1.3h-.8zM43.9 262.3h.8v1.3h-.8zM52.0 262.3h.8v1.3h-.8zM62.8 262.3h.8v1.3h-.8zM14.2 264.1h.8v1.3h-.8zM16.9 264.1h.8v1.3h-.8zM18.7 264.1h.8v1.3h-.8zM22.3 264.1h.8v1.3h-.8zM25.0 264.1h.8v1.3h-.8zM28.6 264.1h.8v1.3h-.8zM30.4 264.1h.8v1.3h-.8zM31.3 264.1h.8v1.3h-.8zM32.2 264.1h.8v1.3h-.8zM34.0 264.1h.8v1.3h-.8zM43.0 264.1h.8v1.3h-.8zM49.3 264.1h.8v1.3h-.8zM53.8 264.1h.8v1.3h-.8zM55.6 264.1h.8v1.3h-.8zM56.5 264.1h.8v1.3h-.8zM60.1 264.1h.8v1.3h-.8zM61.9 264.1h.8v1.3h-.8zM62.8 264.1h.8v1.3h-.8zM22.3 265.8h.8v1.3h-.8zM23.2 265.8h.8v1.3h-.8zM27.7 265.8h.8v1.3h-.8zM33.1 265.8h.8v1.3h-.8zM34.0 265.8h.8v1.3h-.8zM34.9 265.8h.8v1.3h-.8zM18.7 267.6h.8v1.3h-.8zM20.5 267.6h.8v1.3h-.8zM22.3 267.6h.8v1.3h-.8zM37.6 267.6h.8v1.3h-.8zM45.7 267.6h.8v1.3h-.8zM52.0 267.6h.8v1.3h-.8zM53.8 267.6h.8v1.3h-.8zM18.7 269.4h.8v1.3h-.8zM23.2 269.4h.8v1.3h-.8zM25.9 269.4h.8v1.3h-.8zM27.7 269.4h.8v1.3h-.8zM28.6 269.4h.8v1.3h-.8zM29.5 269.4h.8v1.3h-.8zM32.2 269.4h.8v1.3h-.8zM34.0 269.4h.8v1.3h-.8zM35.8 269.4h.8v1.3h-.8zM39.4 269.4h.8v1.3h-.8zM45.7 269.4h.8v1.3h-.8zM46.6 269.4h.8v1.3h-.8zM47.5 269.4h.8v1.3h-.8zM50.2 269.4h.8v1.3h-.8zM20.5 273.0h.8v1.3h-.8zM22.3 273.0h.8v1.3h-.8zM10.6 276.6h.8v1.3h-.8zM8.8 278.4h.8v1.3h-.8zM12.4 282.0h.8v1.3h-.8zM17.8 282.0h.8v1.3h-.8zM22.3 282.0h.8v1.3h-.8zM23.2 282.0h.8v1.3h-.8zM28.6 282.0h.8v1.3h-.8zM31.3 282.0h.8v1.3h-.8zM15.1 283.8h.8v1.3h-.8zM17.8 283.8h.8v1.3h-.8zM19.6 283.8h.8v1.3h-.8zM21.4 283.8h.8v1.3h-.8zM25.0 283.8h.8v1.3h-.8zM29.5 283.8h.8v1.3h-.8zM30.4 283.8h.8v1.3h-.8zM32.2 283.8h.8v1.3h-.8zM33.1 283.8h.8v1.3h-.8zM18.7 287.3h.8v1.3h-.8zM20.5 287.3h.8v1.3h-.8zM22.3 287.3h.8v1.3h-.8zM25.0 287.3h.8v1.3h-.8zM29.5 287.3h.8v1.3h-.8zM34.9 287.3h.8v1.3h-.8zM40.3 287.3h.8v1.3h-.8zM42.1 287.3h.8v1.3h-.8zM46.6 287.3h.8v1.3h-.8zM52.0 287.3h.8v1.3h-.8zM16.9 290.9h.8v1.3h-.8zM20.5 290.9h.8v1.3h-.8zM25.9 290.9h.8v1.3h-.8zM26.8 290.9h.8v1.3h-.8zM42.1 290.9h.8v1.3h-.8zM52.0 290.9h.8v1.3h-.8zM12.4 292.7h.8v1.3h-.8zM20.5 292.7h.8v1.3h-.8zM23.2 292.7h.8v1.3h-.8zM25.9 292.7h.8v1.3h-.8zM34.0 292.7h.8v1.3h-.8zM25.0 294.5h.8v1.3h-.8zM25.9 294.5h.8v1.3h-.8zM28.6 294.5h.8v1.3h-.8zM29.5 294.5h.8v1.3h-.8zM34.9 294.5h.8v1.3h-.8zM37.6 294.5h.8v1.3h-.8zM39.4 294.5h.8v1.3h-.8zM40.3 294.5h.8v1.3h-.8zM44.8 294.5h.8v1.3h-.8zM53.8 294.5h.8v1.3h-.8zM59.2 294.5h.8v1.3h-.8zM61.0 294.5h.8v1.3h-.8zM20.5 296.3h.8v1.3h-.8zM10.6 298.1h.8v1.3h-.8zM10.6 299.9h.8v1.3h-.8zM11.5 299.9h.8v1.3h-.8zM13.3 299.9h.8v1.3h-.8zM16.0 299.9h.8v1.3h-.8zM16.9 299.9h.8v1.3h-.8zM19.6 299.9h.8v1.3h-.8zM22.3 299.9h.8v1.3h-.8zM24.1 299.9h.8v1.3h-.8zM25.9 299.9h.8v1.3h-.8zM26.8 299.9h.8v1.3h-.8zM27.7 299.9h.8v1.3h-.8zM30.4 299.9h.8v1.3h-.8zM32.2 299.9h.8v1.3h-.8zM16.9 301.7h.8v1.3h-.8zM18.7 301.7h.8v1.3h-.8zM25.0 301.7h.8v1.3h-.8zM27.7 301.7h.8v1.3h-.8zM28.6 301.7h.8v1.3h-.8zM32.2 301.7h.8v1.3h-.8zM18.7 303.5h.8v1.3h-.8zM20.5 303.5h.8v1.3h-.8zM25.0 303.5h.8v1.3h-.8zM26.8 303.5h.8v1.3h-.8zM27.7 303.5h.8v1.3h-.8zM28.6 303.5h.8v1.3h-.8zM33.1 303.5h.8v1.3h-.8zM35.8 303.5h.8v1.3h-.8zM36.7 303.5h.8v1.3h-.8zM40.3 303.5h.8v1.3h-.8zM41.2 303.5h.8v1.3h-.8zM44.8 303.5h.8v1.3h-.8zM45.7 303.5h.8v1.3h-.8zM46.6 303.5h.8v1.3h-.8zM49.3 303.5h.8v1.3h-.8zM53.8 303.5h.8v1.3h-.8zM18.7 307.1h.8v1.3h-.8zM18.7 316.0h.8v1.3h-.8zM28.6 316.0h.8v1.3h-.8zM29.5 316.0h.8v1.3h-.8zM10.6 317.8h.8v1.3h-.8zM11.5 317.8h.8v1.3h-.8zM13.3 317.8h.8v1.3h-.8zM16.0 317.8h.8v1.3h-.8zM16.9 317.8h.8v1.3h-.8zM18.7 317.8h.8v1.3h-.8zM21.4 317.8h.8v1.3h-.8zM22.3 317.8h.8v1.3h-.8zM34.0 317.8h.8v1.3h-.8zM37.6 317.8h.8v1.3h-.8zM40.3 317.8h.8v1.3h-.8zM45.7 317.8h.8v1.3h-.8zM51.1 317.8h.8v1.3h-.8zM9.7 319.6h.8v1.3h-.8zM12.4 319.6h.8v1.3h-.8zM14.2 319.6h.8v1.3h-.8zM16.0 319.6h.8v1.3h-.8zM16.9 319.6h.8v1.3h-.8zM19.6 319.6h.8v1.3h-.8zM22.3 319.6h.8v1.3h-.8zM25.0 319.6h.8v1.3h-.8zM27.7 319.6h.8v1.3h-.8zM30.4 319.6h.8v1.3h-.8zM34.0 319.6h.8v1.3h-.8zM34.9 319.6h.8v1.3h-.8zM36.7 319.6h.8v1.3h-.8zM38.5 319.6h.8v1.3h-.8zM51.1 319.6h.8v1.3h-.8zM18.7 326.8h.8v1.3h-.8zM25.0 326.8h.8v1.3h-.8zM29.5 326.8h.8v1.3h-.8zM32.2 326.8h.8v1.3h-.8zM50.2 326.8h.8v1.3h-.8zM54.7 326.8h.8v1.3h-.8zM36.7 328.6h.8v1.3h-.8zM21.4 330.4h.8v1.3h-.8zM25.0 330.4h.8v1.3h-.8zM30.4 330.4h.8v1.3h-.8zM39.4 332.1h.8v1.3h-.8zM21.4 335.7h.8v1.3h-.8zM23.2 335.7h.8v1.3h-.8zM24.1 335.7h.8v1.3h-.8zM25.9 335.7h.8v1.3h-.8zM26.8 335.7h.8v1.3h-.8zM28.6 335.7h.8v1.3h-.8zM16.9 339.3h.8v1.3h-.8zM19.6 339.3h.8v1.3h-.8zM24.1 339.3h.8v1.3h-.8zM30.4 339.3h.8v1.3h-.8zM15.1 341.1h.8v1.3h-.8zM16.9 341.1h.8v1.3h-.8zM18.7 341.1h.8v1.3h-.8zM19.6 341.1h.8v1.3h-.8zM24.1 341.1h.8v1.3h-.8zM26.8 341.1h.8v1.3h-.8zM38.5 341.1h.8v1.3h-.8zM48.4 341.1h.8v1.3h-.8zM40.3 342.9h.8v1.3h-.8zM43.0 342.9h.8v1.3h-.8zM14.2 344.7h.8v1.3h-.8zM19.6 344.7h.8v1.3h-.8zM20.5 344.7h.8v1.3h-.8zM24.1 344.7h.8v1.3h-.8zM25.0 344.7h.8v1.3h-.8zM38.5 344.7h.8v1.3h-.8zM43.0 344.7h.8v1.3h-.8zM43.9 344.7h.8v1.3h-.8zM46.6 344.7h.8v1.3h-.8zM48.4 344.7h.8v1.3h-.8zM49.3 344.7h.8v1.3h-.8zM50.2 344.7h.8v1.3h-.8zM52.9 344.7h.8v1.3h-.8zM14.2 353.7h.8v1.3h-.8zM22.3 353.7h.8v1.3h-.8zM23.2 353.7h.8v1.3h-.8zM27.7 353.7h.8v1.3h-.8zM33.1 353.7h.8v1.3h-.8zM35.8 353.7h.8v1.3h-.8zM12.4 357.2h.8v1.3h-.8zM17.8 357.2h.8v1.3h-.8zM18.7 357.2h.8v1.3h-.8zM20.5 357.2h.8v1.3h-.8zM23.2 357.2h.8v1.3h-.8zM25.9 357.2h.8v1.3h-.8zM29.5 357.2h.8v1.3h-.8zM31.3 357.2h.8v1.3h-.8zM33.1 357.2h.8v1.3h-.8zM34.9 357.2h.8v1.3h-.8zM38.5 357.2h.8v1.3h-.8zM42.1 357.2h.8v1.3h-.8zM44.8 357.2h.8v1.3h-.8zM45.7 357.2h.8v1.3h-.8zM14.2 359.0h.8v1.3h-.8zM17.8 359.0h.8v1.3h-.8zM19.6 359.0h.8v1.3h-.8zM23.2 359.0h.8v1.3h-.8zM27.7 359.0h.8v1.3h-.8zM28.6 359.0h.8v1.3h-.8zM30.4 359.0h.8v1.3h-.8zM40.3 360.8h.8v1.3h-.8zM54.7 360.8h.8v1.3h-.8zM21.4 362.6h.8v1.3h-.8zM22.3 362.6h.8v1.3h-.8zM23.2 362.6h.8v1.3h-.8zM25.9 362.6h.8v1.3h-.8zM27.7 362.6h.8v1.3h-.8zM28.6 362.6h.8v1.3h-.8zM32.2 362.6h.8v1.3h-.8zM34.0 362.6h.8v1.3h-.8zM34.9 362.6h.8v1.3h-.8zM36.7 362.6h.8v1.3h-.8zM41.2 362.6h.8v1.3h-.8zM42.1 362.6h.8v1.3h-.8zM44.8 362.6h.8v1.3h-.8zM8.8 364.4h.8v1.3h-.8zM14.2 371.6h.8v1.3h-.8zM16.9 371.6h.8v1.3h-.8zM17.8 371.6h.8v1.3h-.8zM28.6 371.6h.8v1.3h-.8zM31.3 371.6h.8v1.3h-.8zM32.2 371.6h.8v1.3h-.8zM43.9 371.6h.8v1.3h-.8zM8.8 373.4h.8v1.3h-.8zM11.5 373.4h.8v1.3h-.8zM9.7 375.2h.8v1.3h-.8zM16.9 375.2h.8v1.3h-.8zM17.8 375.2h.8v1.3h-.8zM25.9 375.2h.8v1.3h-.8zM14.2 382.3h.8v1.3h-.8zM17.8 382.3h.8v1.3h-.8zM28.6 382.3h.8v1.3h-.8zM31.3 382.3h.8v1.3h-.8zM33.1 382.3h.8v1.3h-.8zM43.0 382.3h.8v1.3h-.8zM45.7 382.3h.8v1.3h-.8zM11.5 384.1h.8v1.3h-.8zM12.4 385.9h.8v1.3h-.8zM16.0 385.9h.8v1.3h-.8zM15.1 387.7h.8v1.3h-.8zM7.9 393.1h.8v1.3h-.8zM13.3 393.1h.8v1.3h-.8zM22.3 393.1h.8v1.3h-.8zM24.1 393.1h.8v1.3h-.8zM30.4 393.1h.8v1.3h-.8zM34.9 393.1h.8v1.3h-.8zM39.4 393.1h.8v1.3h-.8zM53.8 393.1h.8v1.3h-.8zM55.6 393.1h.8v1.3h-.8zM20.5 394.9h.8v1.3h-.8zM23.2 394.9h.8v1.3h-.8zM39.4 394.9h.8v1.3h-.8zM41.2 394.9h.8v1.3h-.8zM42.1 394.9h.8v1.3h-.8zM43.0 394.9h.8v1.3h-.8zM44.8 394.9h.8v1.3h-.8zM46.6 394.9h.8v1.3h-.8zM48.4 394.9h.8v1.3h-.8zM52.0 394.9h.8v1.3h-.8zM11.5 396.7h.8v1.3h-.8zM12.4 396.7h.8v1.3h-.8zM13.3 396.7h.8v1.3h-.8zM19.6 396.7h.8v1.3h-.8zM22.3 396.7h.8v1.3h-.8zM25.9 396.7h.8v1.3h-.8zM26.8 396.7h.8v1.3h-.8zM32.2 396.7h.8v1.3h-.8zM33.1 396.7h.8v1.3h-.8zM34.0 396.7h.8v1.3h-.8zM36.7 396.7h.8v1.3h-.8zM38.5 396.7h.8v1.3h-.8zM39.4 396.7h.8v1.3h-.8zM19.6 400.2h.8v1.3h-.8zM20.5 400.2h.8v1.3h-.8zM26.8 400.2h.8v1.3h-.8zM31.3 400.2h.8v1.3h-.8zM15.1 402.0h.8v1.3h-.8zM25.0 402.0h.8v1.3h-.8zM34.0 402.0h.8v1.3h-.8zM34.9 402.0h.8v1.3h-.8zM35.8 402.0h.8v1.3h-.8zM42.1 402.0h.8v1.3h-.8zM43.9 402.0h.8v1.3h-.8zM48.4 402.0h.8v1.3h-.8zM52.9 402.0h.8v1.3h-.8zM16.0 403.8h.8v1.3h-.8zM21.4 403.8h.8v1.3h-.8zM29.5 403.8h.8v1.3h-.8zM34.9 403.8h.8v1.3h-.8zM38.5 403.8h.8v1.3h-.8zM40.3 403.8h.8v1.3h-.8zM43.9 403.8h.8v1.3h-.8zM46.6 403.8h.8v1.3h-.8zM49.3 403.8h.8v1.3h-.8zM52.0 403.8h.8v1.3h-.8zM53.8 403.8h.8v1.3h-.8zM10.6 405.6h.8v1.3h-.8zM11.5 405.6h.8v1.3h-.8zM12.4 411.0h.8v1.3h-.8zM17.8 411.0h.8v1.3h-.8zM25.0 411.0h.8v1.3h-.8zM19.6 425.3h.8v1.3h-.8zM22.3 425.3h.8v1.3h-.8zM24.1 425.3h.8v1.3h-.8zM12.4 428.9h.8v1.3h-.8z"/><path fill="#0000ff" fill-opacity="0.38" d="M7.0 4.2h.8v1.3h-.8zM9.7 6.0h.8v1.3h-.8zM10.6 6.0h.8v1.3h-.8zM14.2 6.0h.8v1.3h-.8zM50.2 6.0h.8v1.3h-.8zM56.5 6.0h.8v1.3h-.8zM59.2 6.0h.8v1.3h-.8zM16.9 11.4h.8v1.3h-.8zM18.7 11.4h.8v1.3h-.8zM19.6 11.4h.8v1.3h-.8zM23.2 11.4h.8v1.3h-.8zM36.7 11.4h.8v1.3h-.8zM37.6 11.4h.8v1.3h-.8zM9.7 15.0h.8v1.3h-.8zM11.5 15.0h.8v1.3h-.8zM7.9 16.8h.8v1.3h-.8zM12.4 18.5h.8v1.3h-.8zM16.0 18.5h.8v1.3h-.8zM20.5 18.5h.8v1.3h-.8zM49.3 18.5h.8v1.3h-.8zM53.8 18.5h.8v1.3h-.8zM54.7 18.5h.8v1.3h-.8zM7.9 22.1h.8v1.3h-.8zM8.8 22.1h.8v1.3h-.8zM9.7 22.1h.8v1.3h-.8zM7.0 29.3h.8v1.3h-.8zM7.9 29.3h.8v1.3h-.8zM9.7 29.3h.8v1.3h-.8zM16.9 29.3h.8v1.3h-.8zM11.5 31.1h.8v1.3h-.8zM31.3 31.1h.8v1.3h-.8zM34.0 32.9h.8v1.3h-.8zM7.0 34.7h.8v1.3h-.8zM10.6 34.7h.8v1.3h-.8zM67.3 34.7h.8v1.3h-.8zM8.8 41.8h.8v1.3h-.8zM9.7 41.8h.8v1.3h-.8zM10.6 41.8h.8v1.3h-.8zM12.4 41.8h.8v1.3h-.8zM8.8 43.6h.8v1.3h-.8zM10.6 43.6h.8v1.3h-.8zM11.5 43.6h.8v1.3h-.8zM8.8 45.4h.8v1.3h-.8zM9.7 45.4h.8v1.3h-.8zM10.6 45.4h.8v1.3h-.8zM11.5 45.4h.8v1.3h-.8zM15.1 45.4h.8v1.3h-.8zM9.7 47.2h.8v1.3h-.8zM12.4 61.6h.8v1.3h-.8zM7.0 63.3h.8v1.3h-.8zM7.0 66.9h.8v1.3h-.8zM7.9 66.9h.8v1.3h-.8zM13.3 66.9h.8v1.3h-.8zM7.0 68.7h.8v1.3h-.8zM7.9 68.7h.8v1.3h-.8zM14.2 68.7h.8v1.3h-.8zM15.1 68.7h.8v1.3h-.8zM16.0 68.7h.8v1.3h-.8zM37.6 68.7h.8v1.3h-.8zM12.4 70.5h.8v1.3h-.8zM8.8 72.3h.8v1.3h-.8zM12.4 72.3h.8v1.3h-.8zM16.0 72.3h.8v1.3h-.8zM16.9 72.3h.8v1.3h-.8zM17.8 72.3h.8v1.3h-.8zM18.7 72.3h.8v1.3h-.8zM22.3 72.3h.8v1.3h-.8zM23.2 72.3h.8v1.3h-.8zM29.5 72.3h.8v1.3h-.8zM32.2 72.3h.8v1.3h-.8zM29.5 81.3h.8v1.3h-.8zM31.3 81.3h.8v1.3h-.8zM32.2 81.3h.8v1.3h-.8zM8.8 83.1h.8v1.3h-.8zM25.9 83.1h.8v1.3h-.8zM26.8 83.1h.8v1.3h-.8zM31.3 83.1h.8v1.3h-.8zM35.8 83.1h.8v1.3h-.8zM36.7 83.1h.8v1.3h-.8zM39.4 83.1h.8v1.3h-.8zM7.0 88.4h.8v1.3h-.8zM7.9 88.4h.8v1.3h-.8zM30.4 88.4h.8v1.3h-.8zM12.4 90.2h.8v1.3h-.8zM27.7 90.2h.8v1.3h-.8zM29.5 90.2h.8v1.3h-.8zM39.4 90.2h.8v1.3h-.8zM40.3 90.2h.8v1.3h-.8zM7.0 95.6h.8v1.3h-.8zM7.9 95.6h.8v1.3h-.8zM9.7 95.6h.8v1.3h-.8zM12.4 95.6h.8v1.3h-.8zM13.3 95.6h.8v1.3h-.8zM19.6 97.4h.8v1.3h-.8zM24.1 97.4h.8v1.3h-.8zM25.0 97.4h.8v1.3h-.8zM26.8 97.4h.8v1.3h-.8zM7.0 102.8h.8v1.3h-.8zM7.9 102.8h.8v1.3h-.8zM10.6 111.7h.8v1.3h-.8zM29.5 111.7h.8v1.3h-.8zM38.5 111.7h.8v1.3h-.8zM11.5 117.1h.8v1.3h-.8zM12.4 117.1h.8v1.3h-.8zM7.9 118.9h.8v1.3h-.8zM9.7 118.9h.8v1.3h-.8zM18.7 118.9h.8v1.3h-.8zM29.5 118.9h.8v1.3h-.8zM32.2 118.9h.8v1.3h-.8zM33.1 120.7h.8v1.3h-.8zM8.8 126.1h.8v1.3h-.8zM9.7 126.1h.8v1.3h-.8zM10.6 126.1h.8v1.3h-.8zM13.3 126.1h.8v1.3h-.8zM7.0 140.4h.8v1.3h-.8zM17.8 140.4h.8v1.3h-.8zM18.7 140.4h.8v1.3h-.8zM19.6 140.4h.8v1.3h-.8zM21.4 140.4h.8v1.3h-.8zM46.6 140.4h.8v1.3h-.8zM52.9 140.4h.8v1.3h-.8zM9.7 160.1h.8v1.3h-.8zM19.6 160.1h.8v1.3h-.8zM21.4 160.1h.8v1.3h-.8zM52.0 160.1h.8v1.3h-.8zM7.0 172.7h.8v1.3h-.8zM11.5 172.7h.8v1.3h-.8zM13.3 172.7h.8v1.3h-.8zM33.1 172.7h.8v1.3h-.8zM41.2 174.5h.8v1.3h-.8zM46.6 174.5h.8v1.3h-.8zM52.0 174.5h.8v1.3h-.8zM52.9 174.5h.8v1.3h-.8zM13.3 179.8h.8v1.3h-.8zM43.9 179.8h.8v1.3h-.8zM48.4 179.8h.8v1.3h-.8zM52.9 179.8h.8v1.3h-.8zM7.9 188.8h.8v1.3h-.8zM10.6 188.8h.8v1.3h-.8zM11.5 188.8h.8v1.3h-.8zM13.3 188.8h.8v1.3h-.8zM33.1 190.6h.8v1.3h-.8zM48.4 190.6h.8v1.3h-.8zM50.2 190.6h.8v1.3h-.8zM51.1 190.6h.8v1.3h-.8zM34.0 206.7h.8v1.3h-.8zM36.7 206.7h.8v1.3h-.8zM41.2 206.7h.8v1.3h-.8zM47.5 206.7h.8v1.3h-.8zM49.3 206.7h.8v1.3h-.8zM51.1 206.7h.8v1.3h-.8zM8.8 210.3h.8v1.3h-.8zM10.6 210.3h.8v1.3h-.8zM11.5 210.3h.8v1.3h-.8zM7.9 215.7h.8v1.3h-.8zM8.8 215.7h.8v1.3h-.8zM9.7 215.7h.8v1.3h-.8zM13.3 215.7h.8v1.3h-.8zM16.0 215.7h.8v1.3h-.8zM10.6 221.0h.8v1.3h-.8zM11.5 221.0h.8v1.3h-.8zM12.4 222.8h.8v1.3h-.8zM14.2 222.8h.8v1.3h-.8zM14.2 224.6h.8v1.3h-.8zM16.0 224.6h.8v1.3h-.8zM16.9 230.0h.8v1.3h-.8zM25.0 231.8h.8v1.3h-.8zM29.5 231.8h.8v1.3h-.8zM32.2 231.8h.8v1.3h-.8zM35.8 231.8h.8v1.3h-.8zM14.2 235.4h.8v1.3h-.8zM15.1 235.4h.8v1.3h-.8zM16.9 235.4h.8v1.3h-.8zM12.4 240.8h.8v1.3h-.8zM13.3 240.8h.8v1.3h-.8zM12.4 242.5h.8v1.3h-.8zM15.1 247.9h.8v1.3h-.8zM16.9 247.9h.8v1.3h-.8zM19.6 247.9h.8v1.3h-.8zM24.1 249.7h.8v1.3h-.8zM25.9 249.7h.8v1.3h-.8zM31.3 249.7h.8v1.3h-.8zM32.2 249.7h.8v1.3h-.8zM33.1 249.7h.8v1.3h-.8zM14.2 253.3h.8v1.3h-.8zM16.0 253.3h.8v1.3h-.8zM17.8 253.3h.8v1.3h-.8zM12.4 256.9h.8v1.3h-.8zM13.3 256.9h.8v1.3h-.8zM15.1 256.9h.8v1.3h-.8zM16.9 265.8h.8v1.3h-.8zM19.6 265.8h.8v1.3h-.8zM24.1 267.6h.8v1.3h-.8zM25.9 267.6h.8v1.3h-.8zM26.8 267.6h.8v1.3h-.8zM35.8 267.6h.8v1.3h-.8zM14.2 273.0h.8v1.3h-.8zM16.0 273.0h.8v1.3h-.8zM17.8 273.0h.8v1.3h-.8zM18.7 273.0h.8v1.3h-.8zM43.0 283.8h.8v1.3h-.8zM10.6 287.3h.8v1.3h-.8zM11.5 287.3h.8v1.3h-.8zM11.5 290.9h.8v1.3h-.8zM15.1 290.9h.8v1.3h-.8zM14.2 294.5h.8v1.3h-.8zM15.1 294.5h.8v1.3h-.8zM18.7 294.5h.8v1.3h-.8zM16.9 296.3h.8v1.3h-.8zM18.7 296.3h.8v1.3h-.8zM11.5 301.7h.8v1.3h-.8zM13.3 301.7h.8v1.3h-.8zM14.2 307.1h.8v1.3h-.8zM15.1 307.1h.8v1.3h-.8zM7.0 310.6h.8v1.3h-.8zM10.6 310.6h.8v1.3h-.8zM8.8 316.0h.8v1.3h-.8zM12.4 316.0h.8v1.3h-.8zM8.8 321.4h.8v1.3h-.8zM10.6 321.4h.8v1.3h-.8zM13.3 321.4h.8v1.3h-.8zM7.0 326.8h.8v1.3h-.8zM7.9 326.8h.8v1.3h-.8zM35.8 326.8h.8v1.3h-.8zM38.5 326.8h.8v1.3h-.8zM11.5 330.4h.8v1.3h-.8zM12.4 330.4h.8v1.3h-.8zM8.8 335.7h.8v1.3h-.8zM10.6 335.7h.8v1.3h-.8zM11.5 335.7h.8v1.3h-.8zM13.3 335.7h.8v1.3h-.8zM14.2 335.7h.8v1.3h-.8zM32.2 341.1h.8v1.3h-.8zM34.9 341.1h.8v1.3h-.8zM35.8 341.1h.8v1.3h-.8zM28.6 344.7h.8v1.3h-.8zM29.5 344.7h.8v1.3h-.8zM31.3 344.7h.8v1.3h-.8zM34.0 344.7h.8v1.3h-.8zM24.1 360.8h.8v1.3h-.8zM26.8 360.8h.8v1.3h-.8zM29.5 360.8h.8v1.3h-.8zM30.4 360.8h.8v1.3h-.8zM33.1 360.8h.8v1.3h-.8zM35.8 360.8h.8v1.3h-.8zM7.9 371.6h.8v1.3h-.8zM9.7 371.6h.8v1.3h-.8zM36.7 371.6h.8v1.3h-.8zM19.6 375.2h.8v1.3h-.8zM21.4 375.2h.8v1.3h-.8zM22.3 375.2h.8v1.3h-.8zM23.2 375.2h.8v1.3h-.8zM10.6 376.9h.8v1.3h-.8zM8.8 382.3h.8v1.3h-.8zM9.7 382.3h.8v1.3h-.8zM34.9 382.3h.8v1.3h-.8zM36.7 382.3h.8v1.3h-.8zM40.3 382.3h.8v1.3h-.8zM21.4 385.9h.8v1.3h-.8zM22.3 385.9h.8v1.3h-.8zM23.2 385.9h.8v1.3h-.8zM24.1 385.9h.8v1.3h-.8zM10.6 387.7h.8v1.3h-.8zM16.0 393.1h.8v1.3h-.8zM17.8 393.1h.8v1.3h-.8zM18.7 393.1h.8v1.3h-.8zM10.6 394.9h.8v1.3h-.8zM13.3 394.9h.8v1.3h-.8zM28.6 394.9h.8v1.3h-.8zM12.4 403.8h.8v1.3h-.8zM25.0 403.8h.8v1.3h-.8zM10.6 412.8h.8v1.3h-.8zM10.6 425.3h.8v1.3h-.8zM11.5 425.3h.8v1.3h-.8zM8.8 427.1h.8v1.3h-.8z"/><path fill="#0000ff" fill-opacity="0.58" d="M8.8 6.0h.8v1.3h-.8zM15.1 6.0h.8v1.3h-.8zM45.7 6.0h.8v1.3h-.8zM47.5 6.0h.8v1.3h-.8zM48.4 6.0h.8v1.3h-.8zM51.1 6.0h.8v1.3h-.8zM53.8 6.0h.8v1.3h-.8zM54.7 6.0h.8v1.3h-.8zM57.4 6.0h.8v1.3h-.8zM58.3 6.0h.8v1.3h-.8zM61.0 6.0h.8v1.3h-.8zM16.0 11.4h.8v1.3h-.8zM21.4 11.4h.8v1.3h-.8zM22.3 11.4h.8v1.3h-.8zM25.0 11.4h.8v1.3h-.8zM38.5 11.4h.8v1.3h-.8zM8.8 15.0h.8v1.3h-.8zM13.3 15.0h.8v1.3h-.8zM7.0 16.8h.8v1.3h-.8zM9.7 18.5h.8v1.3h-.8zM11.5 18.5h.8v1.3h-.8zM13.3 18.5h.8v1.3h-.8zM22.3 18.5h.8v1.3h-.8zM50.2 18.5h.8v1.3h-.8zM52.9 18.5h.8v1.3h-.8zM55.6 18.5h.8v1.3h-.8zM56.5 18.5h.8v1.3h-.8zM8.8 20.3h.8v1.3h-.8zM10.6 20.3h.8v1.3h-.8zM11.5 20.3h.8v1.3h-.8zM12.4 20.3h.8v1.3h-.8zM13.3 20.3h.8v1.3h-.8zM11.5 29.3h.8v1.3h-.8zM14.2 29.3h.8v1.3h-.8zM7.0 31.1h.8v1.3h-.8zM7.9 31.1h.8v1.3h-.8zM8.8 31.1h.8v1.3h-.8zM9.7 31.1h.8v1.3h-.8zM10.6 31.1h.8v1.3h-.8zM12.4 31.1h.8v1.3h-.8zM33.1 31.1h.8v1.3h-.8zM34.9 31.1h.8v1.3h-.8zM55.6 31.1h.8v1.3h-.8zM8.8 32.9h.8v1.3h-.8zM9.7 32.9h.8v1.3h-.8zM12.4 32.9h.8v1.3h-.8zM30.4 32.9h.8v1.3h-.8zM7.9 34.7h.8v1.3h-.8zM8.8 34.7h.8v1.3h-.8zM27.7 40.1h.8v1.3h-.8zM31.3 40.1h.8v1.3h-.8zM58.3 40.1h.8v1.3h-.8zM60.1 40.1h.8v1.3h-.8zM12.4 43.6h.8v1.3h-.8zM12.4 45.4h.8v1.3h-.8zM16.9 45.4h.8v1.3h-.8zM8.8 47.2h.8v1.3h-.8zM10.6 54.4h.8v1.3h-.8zM8.8 61.6h.8v1.3h-.8zM9.7 61.6h.8v1.3h-.8zM10.6 61.6h.8v1.3h-.8zM13.3 61.6h.8v1.3h-.8zM9.7 66.9h.8v1.3h-.8zM10.6 68.7h.8v1.3h-.8zM13.3 68.7h.8v1.3h-.8zM16.9 68.7h.8v1.3h-.8zM19.6 68.7h.8v1.3h-.8zM20.5 68.7h.8v1.3h-.8zM32.2 68.7h.8v1.3h-.8zM33.1 68.7h.8v1.3h-.8zM34.9 68.7h.8v1.3h-.8zM38.5 68.7h.8v1.3h-.8zM39.4 68.7h.8v1.3h-.8zM40.3 68.7h.8v1.3h-.8zM45.7 68.7h.8v1.3h-.8zM52.9 68.7h.8v1.3h-.8zM10.6 70.5h.8v1.3h-.8zM27.7 70.5h.8v1.3h-.8zM28.6 70.5h.8v1.3h-.8zM66.4 70.5h.8v1.3h-.8zM9.7 72.3h.8v1.3h-.8zM20.5 72.3h.8v1.3h-.8zM26.8 72.3h.8v1.3h-.8zM27.7 72.3h.8v1.3h-.8zM7.0 77.7h.8v1.3h-.8zM9.7 77.7h.8v1.3h-.8zM10.6 77.7h.8v1.3h-.8zM7.0 81.3h.8v1.3h-.8zM8.8 81.3h.8v1.3h-.8zM33.1 81.3h.8v1.3h-.8zM9.7 83.1h.8v1.3h-.8zM10.6 83.1h.8v1.3h-.8zM13.3 83.1h.8v1.3h-.8zM24.1 83.1h.8v1.3h-.8zM25.0 83.1h.8v1.3h-.8zM27.7 83.1h.8v1.3h-.8zM29.5 83.1h.8v1.3h-.8zM33.1 83.1h.8v1.3h-.8zM34.9 83.1h.8v1.3h-.8zM40.3 83.1h.8v1.3h-.8zM41.2 83.1h.8v1.3h-.8zM42.1 83.1h.8v1.3h-.8zM8.8 88.4h.8v1.3h-.8zM9.7 88.4h.8v1.3h-.8zM29.5 88.4h.8v1.3h-.8zM32.2 88.4h.8v1.3h-.8zM33.1 88.4h.8v1.3h-.8zM9.7 90.2h.8v1.3h-.8zM11.5 90.2h.8v1.3h-.8zM24.1 90.2h.8v1.3h-.8zM25.0 90.2h.8v1.3h-.8zM25.9 90.2h.8v1.3h-.8zM31.3 90.2h.8v1.3h-.8zM32.2 90.2h.8v1.3h-.8zM35.8 90.2h.8v1.3h-.8zM41.2 90.2h.8v1.3h-.8zM8.8 95.6h.8v1.3h-.8zM10.6 95.6h.8v1.3h-.8zM14.2 95.6h.8v1.3h-.8zM17.8 97.4h.8v1.3h-.8zM21.4 97.4h.8v1.3h-.8zM22.3 97.4h.8v1.3h-.8zM23.2 97.4h.8v1.3h-.8zM25.9 97.4h.8v1.3h-.8zM29.5 97.4h.8v1.3h-.8zM9.7 102.8h.8v1.3h-.8zM10.6 102.8h.8v1.3h-.8zM8.8 106.4h.8v1.3h-.8zM10.6 106.4h.8v1.3h-.8zM12.4 106.4h.8v1.3h-.8zM13.3 106.4h.8v1.3h-.8zM8.8 111.7h.8v1.3h-.8zM26.8 111.7h.8v1.3h-.8zM39.4 111.7h.8v1.3h-.8zM7.9 117.1h.8v1.3h-.8zM9.7 117.1h.8v1.3h-.8zM8.8 118.9h.8v1.3h-.8zM11.5 118.9h.8v1.3h-.8zM16.0 118.9h.8v1.3h-.8zM17.8 118.9h.8v1.3h-.8zM30.4 118.9h.8v1.3h-.8zM31.3 120.7h.8v1.3h-.8zM12.4 126.1h.8v1.3h-.8zM59.2 129.7h.8v1.3h-.8zM61.0 129.7h.8v1.3h-.8zM12.4 140.4h.8v1.3h-.8zM14.2 140.4h.8v1.3h-.8zM16.0 140.4h.8v1.3h-.8zM16.9 140.4h.8v1.3h-.8zM20.5 140.4h.8v1.3h-.8zM24.1 140.4h.8v1.3h-.8zM51.1 140.4h.8v1.3h-.8zM52.0 140.4h.8v1.3h-.8zM8.8 160.1h.8v1.3h-.8zM10.6 160.1h.8v1.3h-.8zM11.5 160.1h.8v1.3h-.8zM12.4 160.1h.8v1.3h-.8zM16.9 160.1h.8v1.3h-.8zM17.8 160.1h.8v1.3h-.8zM18.7 160.1h.8v1.3h-.8zM23.2 160.1h.8v1.3h-.8zM45.7 160.1h.8v1.3h-.8zM46.6 160.1h.8v1.3h-.8zM48.4 160.1h.8v1.3h-.8zM50.2 160.1h.8v1.3h-.8zM8.8 172.7h.8v1.3h-.8zM16.9 172.7h.8v1.3h-.8zM17.8 172.7h.8v1.3h-.8zM34.0 172.7h.8v1.3h-.8zM47.5 172.7h.8v1.3h-.8zM36.7 174.5h.8v1.3h-.8zM38.5 174.5h.8v1.3h-.8zM39.4 174.5h.8v1.3h-.8zM42.1 174.5h.8v1.3h-.8zM43.0 174.5h.8v1.3h-.8zM47.5 174.5h.8v1.3h-.8zM51.1 174.5h.8v1.3h-.8zM9.7 179.8h.8v1.3h-.8zM10.6 179.8h.8v1.3h-.8zM11.5 179.8h.8v1.3h-.8zM12.4 179.8h.8v1.3h-.8zM38.5 179.8h.8v1.3h-.8zM39.4 179.8h.8v1.3h-.8zM42.1 179.8h.8v1.3h-.8zM45.7 179.8h.8v1.3h-.8zM46.6 179.8h.8v1.3h-.8zM47.5 179.8h.8v1.3h-.8zM53.8 179.8h.8v1.3h-.8zM17.8 188.8h.8v1.3h-.8zM32.2 190.6h.8v1.3h-.8zM34.0 190.6h.8v1.3h-.8zM35.8 190.6h.8v1.3h-.8zM49.3 190.6h.8v1.3h-.8zM34.9 206.7h.8v1.3h-.8zM35.8 206.7h.8v1.3h-.8zM38.5 206.7h.8v1.3h-.8zM40.3 206.7h.8v1.3h-.8zM43.0 206.7h.8v1.3h-.8zM45.7 206.7h.8v1.3h-.8zM48.4 206.7h.8v1.3h-.8zM50.2 206.7h.8v1.3h-.8zM12.4 210.3h.8v1.3h-.8zM11.5 215.7h.8v1.3h-.8zM15.1 215.7h.8v1.3h-.8zM44.8 215.7h.8v1.3h-.8zM45.7 215.7h.8v1.3h-.8zM7.9 217.5h.8v1.3h-.8zM13.3 221.0h.8v1.3h-.8zM14.2 221.0h.8v1.3h-.8zM15.1 221.0h.8v1.3h-.8zM13.3 222.8h.8v1.3h-.8zM15.1 224.6h.8v1.3h-.8zM16.9 224.6h.8v1.3h-.8zM17.8 224.6h.8v1.3h-.8zM14.2 226.4h.8v1.3h-.8zM14.2 230.0h.8v1.3h-.8zM15.1 230.0h.8v1.3h-.8zM17.8 230.0h.8v1.3h-.8zM18.7 230.0h.8v1.3h-.8zM19.6 230.0h.8v1.3h-.8zM24.1 231.8h.8v1.3h-.8zM25.9 231.8h.8v1.3h-.8zM27.7 231.8h.8v1.3h-.8zM30.4 231.8h.8v1.3h-.8zM31.3 231.8h.8v1.3h-.8zM33.1 231.8h.8v1.3h-.8zM34.0 231.8h.8v1.3h-.8zM13.3 239.0h.8v1.3h-.8zM14.2 239.0h.8v1.3h-.8zM14.2 240.8h.8v1.3h-.8zM15.1 240.8h.8v1.3h-.8zM13.3 242.5h.8v1.3h-.8zM15.1 242.5h.8v1.3h-.8zM12.4 244.3h.8v1.3h-.8zM14.2 247.9h.8v1.3h-.8zM17.8 247.9h.8v1.3h-.8zM25.0 249.7h.8v1.3h-.8zM27.7 249.7h.8v1.3h-.8zM29.5 249.7h.8v1.3h-.8zM30.4 249.7h.8v1.3h-.8zM34.9 249.7h.8v1.3h-.8zM18.7 253.3h.8v1.3h-.8zM14.2 256.9h.8v1.3h-.8zM17.8 256.9h.8v1.3h-.8zM15.1 258.7h.8v1.3h-.8zM16.9 258.7h.8v1.3h-.8zM14.2 265.8h.8v1.3h-.8zM15.1 265.8h.8v1.3h-.8zM18.7 265.8h.8v1.3h-.8zM29.5 267.6h.8v1.3h-.8zM30.4 267.6h.8v1.3h-.8zM34.0 267.6h.8v1.3h-.8zM15.1 273.0h.8v1.3h-.8zM7.0 280.2h.8v1.3h-.8zM8.8 280.2h.8v1.3h-.8zM9.7 280.2h.8v1.3h-.8zM10.6 283.8h.8v1.3h-.8zM40.3 283.8h.8v1.3h-.8zM42.1 283.8h.8v1.3h-.8zM44.8 283.8h.8v1.3h-.8zM46.6 283.8h.8v1.3h-.8zM13.3 287.3h.8v1.3h-.8zM14.2 287.3h.8v1.3h-.8zM15.1 287.3h.8v1.3h-.8zM13.3 290.9h.8v1.3h-.8zM14.2 290.9h.8v1.3h-.8zM16.9 294.5h.8v1.3h-.8zM17.8 294.5h.8v1.3h-.8zM15.1 296.3h.8v1.3h-.8zM16.0 296.3h.8v1.3h-.8zM10.6 301.7h.8v1.3h-.8zM15.1 301.7h.8v1.3h-.8zM16.0 307.1h.8v1.3h-.8zM11.5 310.6h.8v1.3h-.8zM11.5 316.0h.8v1.3h-.8zM13.3 316.0h.8v1.3h-.8zM14.2 316.0h.8v1.3h-.8zM12.4 321.4h.8v1.3h-.8zM16.9 321.4h.8v1.3h-.8zM10.6 326.8h.8v1.3h-.8zM11.5 326.8h.8v1.3h-.8zM14.2 326.8h.8v1.3h-.8zM15.1 326.8h.8v1.3h-.8zM26.8 326.8h.8v1.3h-.8zM36.7 326.8h.8v1.3h-.8zM40.3 326.8h.8v1.3h-.8zM41.2 326.8h.8v1.3h-.8zM42.1 326.8h.8v1.3h-.8zM9.7 330.4h.8v1.3h-.8zM10.6 330.4h.8v1.3h-.8zM13.3 330.4h.8v1.3h-.8zM14.2 330.4h.8v1.3h-.8zM17.8 330.4h.8v1.3h-.8zM16.0 335.7h.8v1.3h-.8zM17.8 335.7h.8v1.3h-.8zM29.5 341.1h.8v1.3h-.8zM34.0 341.1h.8v1.3h-.8zM36.7 341.1h.8v1.3h-.8zM52.0 341.1h.8v1.3h-.8zM52.9 341.1h.8v1.3h-.8zM27.7 344.7h.8v1.3h-.8zM8.8 357.2h.8v1.3h-.8zM9.7 357.2h.8v1.3h-.8zM21.4 360.8h.8v1.3h-.8zM22.3 360.8h.8v1.3h-.8zM25.9 360.8h.8v1.3h-.8zM27.7 360.8h.8v1.3h-.8zM31.3 360.8h.8v1.3h-.8zM32.2 360.8h.8v1.3h-.8zM7.0 371.6h.8v1.3h-.8zM8.8 371.6h.8v1.3h-.8zM10.6 371.6h.8v1.3h-.8zM34.0 371.6h.8v1.3h-.8zM34.9 371.6h.8v1.3h-.8zM38.5 371.6h.8v1.3h-.8zM40.3 371.6h.8v1.3h-.8zM41.2 371.6h.8v1.3h-.8zM11.5 376.9h.8v1.3h-.8zM7.0 382.3h.8v1.3h-.8zM10.6 382.3h.8v1.3h-.8zM34.0 382.3h.8v1.3h-.8zM35.8 382.3h.8v1.3h-.8zM38.5 382.3h.8v1.3h-.8zM39.4 382.3h.8v1.3h-.8zM19.6 385.9h.8v1.3h-.8zM20.5 385.9h.8v1.3h-.8zM8.8 387.7h.8v1.3h-.8zM11.5 394.9h.8v1.3h-.8zM25.9 394.9h.8v1.3h-.8zM26.8 394.9h.8v1.3h-.8zM27.7 394.9h.8v1.3h-.8zM11.5 403.8h.8v1.3h-.8zM23.2 403.8h.8v1.3h-.8zM25.9 403.8h.8v1.3h-.8zM7.0 427.1h.8v1.3h-.8zM7.9 427.1h.8v1.3h-.8zM10.6 428.9h.8v1.3h-.8z"/><path fill="#0000ff" fill-opacity="0.78" d="M7.9 4.2h.8v1.3h-.8zM12.4 6.0h.8v1.3h-.8zM13.3 6.0h.8v1.3h-.8zM46.6 6.0h.8v1.3h-.8zM49.3 6.0h.8v1.3h-.8zM52.9 6.0h.8v1.3h-.8zM15.1 11.4h.8v1.3h-.8zM17.8 11.4h.8v1.3h-.8zM10.6 15.0h.8v1.3h-.8zM12.4 15.0h.8v1.3h-.8zM8.8 18.5h.8v1.3h-.8zM10.6 18.5h.8v1.3h-.8zM15.1 18.5h.8v1.3h-.8zM16.9 18.5h.8v1.3h-.8zM17.8 18.5h.8v1.3h-.8zM18.7 18.5h.8v1.3h-.8zM19.6 18.5h.8v1.3h-.8zM51.1 18.5h.8v1.3h-.8zM57.4 18.5h.8v1.3h-.8zM9.7 20.3h.8v1.3h-.8zM7.0 22.1h.8v1.3h-.8zM8.8 29.3h.8v1.3h-.8zM10.6 29.3h.8v1.3h-.8zM12.4 29.3h.8v1.3h-.8zM13.3 29.3h.8v1.3h-.8zM16.0 29.3h.8v1.3h-.8zM17.8 29.3h.8v1.3h-.8zM7.0 32.9h.8v1.3h-.8zM7.9 32.9h.8v1.3h-.8zM10.6 32.9h.8v1.3h-.8zM11.5 32.9h.8v1.3h-.8zM32.2 32.9h.8v1.3h-.8zM58.3 32.9h.8v1.3h-.8zM9.7 34.7h.8v1.3h-.8zM11.5 34.7h.8v1.3h-.8zM12.4 34.7h.8v1.3h-.8zM52.9 34.7h.8v1.3h-.8zM28.6 40.1h.8v1.3h-.8zM29.5 40.1h.8v1.3h-.8zM30.4 40.1h.8v1.3h-.8zM32.2 40.1h.8v1.3h-.8zM11.5 41.8h.8v1.3h-.8zM9.7 43.6h.8v1.3h-.8zM14.2 45.4h.8v1.3h-.8zM16.0 45.4h.8v1.3h-.8zM11.5 54.4h.8v1.3h-.8zM12.4 54.4h.8v1.3h-.8zM13.3 54.4h.8v1.3h-.8zM11.5 61.6h.8v1.3h-.8zM8.8 66.9h.8v1.3h-.8zM10.6 66.9h.8v1.3h-.8zM11.5 66.9h.8v1.3h-.8zM12.4 66.9h.8v1.3h-.8zM8.8 68.7h.8v1.3h-.8zM9.7 68.7h.8v1.3h-.8zM11.5 68.7h.8v1.3h-.8zM17.8 68.7h.8v1.3h-.8zM18.7 68.7h.8v1.3h-.8zM34.0 68.7h.8v1.3h-.8zM41.2 68.7h.8v1.3h-.8zM42.1 68.7h.8v1.3h-.8zM77.2 68.7h.8v1.3h-.8zM11.5 70.5h.8v1.3h-.8zM26.8 70.5h.8v1.3h-.8zM68.2 70.5h.8v1.3h-.8zM10.6 72.3h.8v1.3h-.8zM11.5 72.3h.8v1.3h-.8zM13.3 72.3h.8v1.3h-.8zM19.6 72.3h.8v1.3h-.8zM21.4 72.3h.8v1.3h-.8zM24.1 72.3h.8v1.3h-.8zM25.0 72.3h.8v1.3h-.8zM28.6 72.3h.8v1.3h-.8zM52.9 72.3h.8v1.3h-.8zM7.9 77.7h.8v1.3h-.8zM8.8 77.7h.8v1.3h-.8zM7.9 81.3h.8v1.3h-.8zM9.7 81.3h.8v1.3h-.8zM10.6 81.3h.8v1.3h-.8zM11.5 81.3h.8v1.3h-.8zM30.4 81.3h.8v1.3h-.8zM11.5 83.1h.8v1.3h-.8zM12.4 83.1h.8v1.3h-.8zM28.6 83.1h.8v1.3h-.8zM32.2 83.1h.8v1.3h-.8zM38.5 83.1h.8v1.3h-.8zM43.0 83.1h.8v1.3h-.8zM10.6 88.4h.8v1.3h-.8zM11.5 88.4h.8v1.3h-.8zM31.3 88.4h.8v1.3h-.8zM8.8 90.2h.8v1.3h-.8zM10.6 90.2h.8v1.3h-.8zM13.3 90.2h.8v1.3h-.8zM26.8 90.2h.8v1.3h-.8zM30.4 90.2h.8v1.3h-.8zM33.1 90.2h.8v1.3h-.8zM34.9 90.2h.8v1.3h-.8zM36.7 90.2h.8v1.3h-.8zM37.6 90.2h.8v1.3h-.8zM38.5 90.2h.8v1.3h-.8zM43.0 90.2h.8v1.3h-.8zM18.7 97.4h.8v1.3h-.8zM27.7 97.4h.8v1.3h-.8zM30.4 97.4h.8v1.3h-.8zM31.3 97.4h.8v1.3h-.8zM8.8 102.8h.8v1.3h-.8zM11.5 102.8h.8v1.3h-.8zM9.7 106.4h.8v1.3h-.8zM11.5 106.4h.8v1.3h-.8zM7.0 111.7h.8v1.3h-.8zM7.9 111.7h.8v1.3h-.8zM9.7 111.7h.8v1.3h-.8zM27.7 111.7h.8v1.3h-.8zM28.6 111.7h.8v1.3h-.8zM36.7 111.7h.8v1.3h-.8zM37.6 111.7h.8v1.3h-.8zM40.3 111.7h.8v1.3h-.8zM7.0 117.1h.8v1.3h-.8zM8.8 117.1h.8v1.3h-.8zM7.0 118.9h.8v1.3h-.8zM10.6 118.9h.8v1.3h-.8zM12.4 118.9h.8v1.3h-.8zM14.2 118.9h.8v1.3h-.8zM15.1 118.9h.8v1.3h-.8zM16.9 118.9h.8v1.3h-.8zM31.3 118.9h.8v1.3h-.8zM33.1 118.9h.8v1.3h-.8zM34.0 118.9h.8v1.3h-.8zM32.2 120.7h.8v1.3h-.8zM11.5 126.1h.8v1.3h-.8zM60.1 129.7h.8v1.3h-.8zM7.9 140.4h.8v1.3h-.8zM8.8 140.4h.8v1.3h-.8zM9.7 140.4h.8v1.3h-.8zM10.6 140.4h.8v1.3h-.8zM13.3 140.4h.8v1.3h-.8zM23.2 140.4h.8v1.3h-.8zM45.7 140.4h.8v1.3h-.8zM47.5 140.4h.8v1.3h-.8zM49.3 140.4h.8v1.3h-.8zM50.2 140.4h.8v1.3h-.8zM7.0 160.1h.8v1.3h-.8zM7.9 160.1h.8v1.3h-.8zM13.3 160.1h.8v1.3h-.8zM20.5 160.1h.8v1.3h-.8zM22.3 160.1h.8v1.3h-.8zM44.8 160.1h.8v1.3h-.8zM49.3 160.1h.8v1.3h-.8zM51.1 160.1h.8v1.3h-.8zM7.9 172.7h.8v1.3h-.8zM9.7 172.7h.8v1.3h-.8zM10.6 172.7h.8v1.3h-.8zM14.2 172.7h.8v1.3h-.8zM15.1 172.7h.8v1.3h-.8zM16.0 172.7h.8v1.3h-.8zM34.9 172.7h.8v1.3h-.8zM35.8 172.7h.8v1.3h-.8zM46.6 172.7h.8v1.3h-.8zM48.4 172.7h.8v1.3h-.8zM49.3 172.7h.8v1.3h-.8zM50.2 172.7h.8v1.3h-.8zM35.8 174.5h.8v1.3h-.8zM37.6 174.5h.8v1.3h-.8zM40.3 174.5h.8v1.3h-.8zM44.8 174.5h.8v1.3h-.8zM45.7 174.5h.8v1.3h-.8zM49.3 174.5h.8v1.3h-.8zM50.2 174.5h.8v1.3h-.8zM8.8 179.8h.8v1.3h-.8zM36.7 179.8h.8v1.3h-.8zM37.6 179.8h.8v1.3h-.8zM40.3 179.8h.8v1.3h-.8zM41.2 179.8h.8v1.3h-.8zM44.8 179.8h.8v1.3h-.8zM50.2 179.8h.8v1.3h-.8zM51.1 179.8h.8v1.3h-.8zM52.0 179.8h.8v1.3h-.8zM7.0 188.8h.8v1.3h-.8zM8.8 188.8h.8v1.3h-.8zM9.7 188.8h.8v1.3h-.8zM14.2 188.8h.8v1.3h-.8zM15.1 188.8h.8v1.3h-.8zM16.0 188.8h.8v1.3h-.8zM16.9 188.8h.8v1.3h-.8zM34.9 190.6h.8v1.3h-.8zM36.7 190.6h.8v1.3h-.8zM37.6 206.7h.8v1.3h-.8zM39.4 206.7h.8v1.3h-.8zM43.9 206.7h.8v1.3h-.8zM44.8 206.7h.8v1.3h-.8zM9.7 210.3h.8v1.3h-.8zM13.3 210.3h.8v1.3h-.8zM7.0 215.7h.8v1.3h-.8zM10.6 215.7h.8v1.3h-.8zM14.2 215.7h.8v1.3h-.8zM46.6 215.7h.8v1.3h-.8zM7.0 217.5h.8v1.3h-.8zM12.4 221.0h.8v1.3h-.8zM15.1 222.8h.8v1.3h-.8zM18.7 224.6h.8v1.3h-.8zM12.4 226.4h.8v1.3h-.8zM13.3 226.4h.8v1.3h-.8zM15.1 226.4h.8v1.3h-.8zM26.8 231.8h.8v1.3h-.8zM16.0 235.4h.8v1.3h-.8zM17.8 235.4h.8v1.3h-.8zM18.7 235.4h.8v1.3h-.8zM12.4 239.0h.8v1.3h-.8zM15.1 239.0h.8v1.3h-.8zM14.2 242.5h.8v1.3h-.8zM13.3 244.3h.8v1.3h-.8zM14.2 244.3h.8v1.3h-.8zM15.1 244.3h.8v1.3h-.8zM18.7 247.9h.8v1.3h-.8zM26.8 249.7h.8v1.3h-.8zM34.0 249.7h.8v1.3h-.8zM15.1 253.3h.8v1.3h-.8zM16.9 253.3h.8v1.3h-.8zM16.0 256.9h.8v1.3h-.8zM14.2 258.7h.8v1.3h-.8zM16.0 258.7h.8v1.3h-.8zM17.8 265.8h.8v1.3h-.8zM25.0 267.6h.8v1.3h-.8zM28.6 267.6h.8v1.3h-.8zM31.3 267.6h.8v1.3h-.8zM33.1 267.6h.8v1.3h-.8zM34.9 267.6h.8v1.3h-.8zM16.9 273.0h.8v1.3h-.8zM10.6 280.2h.8v1.3h-.8zM8.8 282.0h.8v1.3h-.8zM41.2 283.8h.8v1.3h-.8zM45.7 283.8h.8v1.3h-.8zM47.5 283.8h.8v1.3h-.8zM48.4 283.8h.8v1.3h-.8zM10.6 290.9h.8v1.3h-.8zM12.4 290.9h.8v1.3h-.8zM12.4 294.5h.8v1.3h-.8zM13.3 294.5h.8v1.3h-.8zM14.2 296.3h.8v1.3h-.8zM17.8 296.3h.8v1.3h-.8zM14.2 301.7h.8v1.3h-.8zM11.5 307.1h.8v1.3h-.8zM12.4 307.1h.8v1.3h-.8zM13.3 307.1h.8v1.3h-.8zM7.9 310.6h.8v1.3h-.8zM8.8 310.6h.8v1.3h-.8zM9.7 310.6h.8v1.3h-.8zM9.7 316.0h.8v1.3h-.8zM9.7 321.4h.8v1.3h-.8zM11.5 321.4h.8v1.3h-.8zM14.2 321.4h.8v1.3h-.8zM15.1 321.4h.8v1.3h-.8zM8.8 326.8h.8v1.3h-.8zM9.7 326.8h.8v1.3h-.8zM13.3 326.8h.8v1.3h-.8zM16.0 326.8h.8v1.3h-.8zM25.9 326.8h.8v1.3h-.8zM27.7 326.8h.8v1.3h-.8zM37.6 326.8h.8v1.3h-.8zM43.0 326.8h.8v1.3h-.8zM8.8 330.4h.8v1.3h-.8zM15.1 330.4h.8v1.3h-.8zM18.7 330.4h.8v1.3h-.8zM9.7 335.7h.8v1.3h-.8zM15.1 335.7h.8v1.3h-.8zM18.7 335.7h.8v1.3h-.8zM28.6 341.1h.8v1.3h-.8zM30.4 341.1h.8v1.3h-.8zM33.1 341.1h.8v1.3h-.8zM37.6 341.1h.8v1.3h-.8zM53.8 341.1h.8v1.3h-.8zM54.7 341.1h.8v1.3h-.8zM32.2 344.7h.8v1.3h-.8zM33.1 344.7h.8v1.3h-.8zM20.5 360.8h.8v1.3h-.8zM23.2 360.8h.8v1.3h-.8zM25.0 360.8h.8v1.3h-.8zM34.0 360.8h.8v1.3h-.8zM35.8 371.6h.8v1.3h-.8zM39.4 371.6h.8v1.3h-.8zM20.5 375.2h.8v1.3h-.8zM24.1 375.2h.8v1.3h-.8zM8.8 376.9h.8v1.3h-.8zM9.7 376.9h.8v1.3h-.8zM12.4 376.9h.8v1.3h-.8zM13.3 376.9h.8v1.3h-.8zM7.9 382.3h.8v1.3h-.8zM41.2 382.3h.8v1.3h-.8zM9.7 387.7h.8v1.3h-.8zM11.5 387.7h.8v1.3h-.8zM12.4 387.7h.8v1.3h-.8zM13.3 387.7h.8v1.3h-.8zM16.9 393.1h.8v1.3h-.8zM12.4 394.9h.8v1.3h-.8zM14.2 394.9h.8v1.3h-.8zM8.8 402.0h.8v1.3h-.8zM9.7 402.0h.8v1.3h-.8zM10.6 403.8h.8v1.3h-.8zM13.3 403.8h.8v1.3h-.8zM24.1 403.8h.8v1.3h-.8zM11.5 412.8h.8v1.3h-.8zM9.7 427.1h.8v1.3h-.8z"/><path fill="#008000" fill-opacity="0.30" d="M8.8 0.6h.8v1.3h-.8zM14.2 0.6h.8v1.3h-.8zM15.1 0.6h.8v1.3h-.8zM17.8 0.6h.8v1.3h-.8zM18.7 0.6h.8v1.3h-.8zM25.0 0.6h.8v1.3h-.8zM32.2 0.6h.8v1.3h-.8zM36.7 0.6h.8v1.3h-.8zM49.3 0.6h.8v1.3h-.8zM50.2 0.6h.8v1.3h-.8zM52.0 0.6h.8v1.3h-.8zM16.9 2.4h.8v1.3h-.8zM24.1 2.4h.8v1.3h-.8zM28.6 2.4h.8v1.3h-.8zM29.5 2.4h.8v1.3h-.8zM31.3 29.3h.8v1.3h-.8zM49.3 32.9h.8v1.3h-.8zM36.7 43.6h.8v1.3h-.8zM43.0 45.4h.8v1.3h-.8zM11.5 47.2h.8v1.3h-.8zM23.2 47.2h.8v1.3h-.8zM46.6 49.0h.8v1.3h-.8zM25.9 58.0h.8v1.3h-.8zM70.9 72.3h.8v1.3h-.8zM10.6 113.5h.8v1.3h-.8zM12.4 113.5h.8v1.3h-.8zM14.2 113.5h.8v1.3h-.8zM15.1 113.5h.8v1.3h-.8zM17.8 113.5h.8v1.3h-.8zM21.4 113.5h.8v1.3h-.8zM26.8 113.5h.8v1.3h-.8zM33.1 113.5h.8v1.3h-.8zM34.0 113.5h.8v1.3h-.8zM34.9 113.5h.8v1.3h-.8zM36.7 113.5h.8v1.3h-.8zM43.0 113.5h.8v1.3h-.8zM44.8 113.5h.8v1.3h-.8zM47.5 113.5h.8v1.3h-.8zM48.4 113.5h.8v1.3h-.8zM51.1 113.5h.8v1.3h-.8zM54.7 113.5h.8v1.3h-.8zM7.0 115.3h.8v1.3h-.8zM7.9 115.3h.8v1.3h-.8zM9.7 115.3h.8v1.3h-.8zM13.3 115.3h.8v1.3h-.8zM15.1 115.3h.8v1.3h-.8zM20.5 115.3h.8v1.3h-.8zM14.2 135.0h.8v1.3h-.8zM19.6 135.0h.8v1.3h-.8zM20.5 135.0h.8v1.3h-.8zM25.0 135.0h.8v1.3h-.8zM35.8 135.0h.8v1.3h-.8zM41.2 135.0h.8v1.3h-.8zM48.4 135.0h.8v1.3h-.8zM50.2 135.0h.8v1.3h-.8zM57.4 135.0h.8v1.3h-.8zM7.0 136.8h.8v1.3h-.8zM8.8 136.8h.8v1.3h-.8zM11.5 136.8h.8v1.3h-.8zM21.4 136.8h.8v1.3h-.8zM24.1 136.8h.8v1.3h-.8zM25.0 136.8h.8v1.3h-.8zM26.8 136.8h.8v1.3h-.8zM42.1 136.8h.8v1.3h-.8zM43.0 136.8h.8v1.3h-.8zM44.8 136.8h.8v1.3h-.8zM46.6 136.8h.8v1.3h-.8zM47.5 136.8h.8v1.3h-.8zM49.3 136.8h.8v1.3h-.8zM54.7 136.8h.8v1.3h-.8zM58.3 136.8h.8v1.3h-.8zM59.2 136.8h.8v1.3h-.8zM8.8 138.6h.8v1.3h-.8zM10.6 138.6h.8v1.3h-.8zM15.1 138.6h.8v1.3h-.8zM16.0 138.6h.8v1.3h-.8zM18.7 138.6h.8v1.3h-.8zM20.5 138.6h.8v1.3h-.8zM26.8 138.6h.8v1.3h-.8zM28.6 138.6h.8v1.3h-.8zM31.3 138.6h.8v1.3h-.8zM15.1 147.6h.8v1.3h-.8zM16.0 147.6h.8v1.3h-.8zM20.5 147.6h.8v1.3h-.8zM21.4 147.6h.8v1.3h-.8zM25.9 147.6h.8v1.3h-.8zM29.5 147.6h.8v1.3h-.8zM31.3 147.6h.8v1.3h-.8zM34.0 147.6h.8v1.3h-.8zM34.9 147.6h.8v1.3h-.8zM11.5 151.2h.8v1.3h-.8zM14.2 151.2h.8v1.3h-.8zM15.1 151.2h.8v1.3h-.8zM16.9 151.2h.8v1.3h-.8zM20.5 151.2h.8v1.3h-.8zM23.2 151.2h.8v1.3h-.8zM28.6 151.2h.8v1.3h-.8zM30.4 151.2h.8v1.3h-.8zM32.2 151.2h.8v1.3h-.8zM33.1 151.2h.8v1.3h-.8zM34.0 151.2h.8v1.3h-.8zM36.7 151.2h.8v1.3h-.8zM45.7 151.2h.8v1.3h-.8zM46.6 151.2h.8v1.3h-.8zM53.8 151.2h.8v1.3h-.8zM57.4 151.2h.8v1.3h-.8zM58.3 151.2h.8v1.3h-.8zM61.0 151.2h.8v1.3h-.8zM11.5 152.9h.8v1.3h-.8zM16.0 152.9h.8v1.3h-.8zM18.7 152.9h.8v1.3h-.8zM19.6 152.9h.8v1.3h-.8zM23.2 152.9h.8v1.3h-.8zM25.0 152.9h.8v1.3h-.8zM30.4 152.9h.8v1.3h-.8zM34.0 152.9h.8v1.3h-.8zM36.7 152.9h.8v1.3h-.8zM48.4 152.9h.8v1.3h-.8zM55.6 152.9h.8v1.3h-.8zM58.3 152.9h.8v1.3h-.8zM8.8 154.7h.8v1.3h-.8zM12.4 154.7h.8v1.3h-.8zM16.0 154.7h.8v1.3h-.8zM18.7 154.7h.8v1.3h-.8zM19.6 154.7h.8v1.3h-.8zM25.0 154.7h.8v1.3h-.8zM28.6 154.7h.8v1.3h-.8zM33.1 154.7h.8v1.3h-.8zM34.9 154.7h.8v1.3h-.8zM36.7 154.7h.8v1.3h-.8zM37.6 154.7h.8v1.3h-.8zM40.3 154.7h.8v1.3h-.8zM42.1 154.7h.8v1.3h-.8zM43.9 154.7h.8v1.3h-.8zM44.8 154.7h.8v1.3h-.8zM47.5 154.7h.8v1.3h-.8zM50.2 154.7h.8v1.3h-.8zM53.8 154.7h.8v1.3h-.8zM57.4 154.7h.8v1.3h-.8zM58.3 154.7h.8v1.3h-.8zM61.0 154.7h.8v1.3h-.8zM7.9 156.5h.8v1.3h-.8zM11.5 156.5h.8v1.3h-.8zM12.4 156.5h.8v1.3h-.8zM13.3 156.5h.8v1.3h-.8zM14.2 156.5h.8v1.3h-.8zM21.4 156.5h.8v1.3h-.8zM25.0 156.5h.8v1.3h-.8zM26.8 156.5h.8v1.3h-.8zM27.7 156.5h.8v1.3h-.8zM34.9 156.5h.8v1.3h-.8zM43.9 156.5h.8v1.3h-.8zM48.4 156.5h.8v1.3h-.8zM51.1 156.5h.8v1.3h-.8zM54.7 156.5h.8v1.3h-.8zM57.4 156.5h.8v1.3h-.8zM59.2 156.5h.8v1.3h-.8zM60.1 156.5h.8v1.3h-.8zM9.7 158.3h.8v1.3h-.8zM11.5 158.3h.8v1.3h-.8zM12.4 158.3h.8v1.3h-.8zM16.0 158.3h.8v1.3h-.8zM23.2 158.3h.8v1.3h-.8zM26.8 158.3h.8v1.3h-.8zM29.5 158.3h.8v1.3h-.8zM30.4 158.3h.8v1.3h-.8zM34.0 158.3h.8v1.3h-.8zM34.9 158.3h.8v1.3h-.8zM39.4 158.3h.8v1.3h-.8zM43.9 158.3h.8v1.3h-.8zM49.3 158.3h.8v1.3h-.8zM52.0 158.3h.8v1.3h-.8zM16.9 165.5h.8v1.3h-.8zM17.8 165.5h.8v1.3h-.8zM19.6 165.5h.8v1.3h-.8zM25.0 165.5h.8v1.3h-.8zM14.2 167.3h.8v1.3h-.8zM15.1 167.3h.8v1.3h-.8zM18.7 167.3h.8v1.3h-.8zM33.1 167.3h.8v1.3h-.8zM34.0 167.3h.8v1.3h-.8zM60.1 167.3h.8v1.3h-.8zM12.4 178.0h.8v1.3h-.8zM15.1 178.0h.8v1.3h-.8zM16.9 178.0h.8v1.3h-.8zM17.8 178.0h.8v1.3h-.8zM32.2 178.0h.8v1.3h-.8zM35.8 178.0h.8v1.3h-.8zM37.6 178.0h.8v1.3h-.8zM38.5 178.0h.8v1.3h-.8zM40.3 178.0h.8v1.3h-.8zM47.5 178.0h.8v1.3h-.8zM55.6 178.0h.8v1.3h-.8zM34.9 188.8h.8v1.3h-.8zM35.8 188.8h.8v1.3h-.8zM36.7 188.8h.8v1.3h-.8zM48.4 188.8h.8v1.3h-.8zM50.2 188.8h.8v1.3h-.8zM53.8 188.8h.8v1.3h-.8zM54.7 188.8h.8v1.3h-.8zM57.4 188.8h.8v1.3h-.8zM8.8 196.0h.8v1.3h-.8zM25.9 196.0h.8v1.3h-.8zM29.5 196.0h.8v1.3h-.8zM33.1 196.0h.8v1.3h-.8zM34.0 196.0h.8v1.3h-.8zM37.6 196.0h.8v1.3h-.8zM38.5 196.0h.8v1.3h-.8zM43.0 196.0h.8v1.3h-.8zM43.9 196.0h.8v1.3h-.8zM44.8 196.0h.8v1.3h-.8zM46.6 196.0h.8v1.3h-.8zM49.3 196.0h.8v1.3h-.8zM51.1 196.0h.8v1.3h-.8zM52.0 196.0h.8v1.3h-.8zM58.3 196.0h.8v1.3h-.8zM61.0 196.0h.8v1.3h-.8zM8.8 197.7h.8v1.3h-.8zM9.7 197.7h.8v1.3h-.8zM13.3 197.7h.8v1.3h-.8zM15.1 197.7h.8v1.3h-.8zM17.8 197.7h.8v1.3h-.8zM18.7 197.7h.8v1.3h-.8zM22.3 197.7h.8v1.3h-.8zM33.1 197.7h.8v1.3h-.8zM34.0 197.7h.8v1.3h-.8zM34.9 197.7h.8v1.3h-.8zM35.8 197.7h.8v1.3h-.8zM13.3 201.3h.8v1.3h-.8zM18.7 201.3h.8v1.3h-.8zM24.1 201.3h.8v1.3h-.8zM25.0 201.3h.8v1.3h-.8zM27.7 201.3h.8v1.3h-.8zM42.1 201.3h.8v1.3h-.8zM44.8 201.3h.8v1.3h-.8zM46.6 201.3h.8v1.3h-.8zM50.2 201.3h.8v1.3h-.8zM53.8 201.3h.8v1.3h-.8zM54.7 201.3h.8v1.3h-.8zM9.7 203.1h.8v1.3h-.8zM10.6 203.1h.8v1.3h-.8zM15.1 203.1h.8v1.3h-.8zM16.9 203.1h.8v1.3h-.8zM17.8 203.1h.8v1.3h-.8zM21.4 203.1h.8v1.3h-.8zM26.8 203.1h.8v1.3h-.8zM27.7 203.1h.8v1.3h-.8zM31.3 203.1h.8v1.3h-.8zM33.1 203.1h.8v1.3h-.8zM44.8 203.1h.8v1.3h-.8zM48.4 203.1h.8v1.3h-.8zM49.3 203.1h.8v1.3h-.8zM51.1 203.1h.8v1.3h-.8zM9.7 204.9h.8v1.3h-.8zM16.9 204.9h.8v1.3h-.8zM22.3 204.9h.8v1.3h-.8zM25.0 204.9h.8v1.3h-.8zM34.0 204.9h.8v1.3h-.8zM43.0 204.9h.8v1.3h-.8zM45.7 204.9h.8v1.3h-.8zM51.1 204.9h.8v1.3h-.8zM53.8 204.9h.8v1.3h-.8zM34.9 219.3h.8v1.3h-.8zM35.8 219.3h.8v1.3h-.8zM16.9 222.8h.8v1.3h-.8zM16.9 239.0h.8v1.3h-.8zM47.5 249.7h.8v1.3h-.8zM47.5 267.6h.8v1.3h-.8zM11.5 285.6h.8v1.3h-.8zM13.3 285.6h.8v1.3h-.8zM16.0 285.6h.8v1.3h-.8zM24.1 285.6h.8v1.3h-.8zM32.2 285.6h.8v1.3h-.8zM34.0 285.6h.8v1.3h-.8zM34.9 285.6h.8v1.3h-.8zM41.2 285.6h.8v1.3h-.8zM43.9 285.6h.8v1.3h-.8zM44.8 285.6h.8v1.3h-.8zM15.1 289.1h.8v1.3h-.8zM17.8 289.1h.8v1.3h-.8zM18.7 289.1h.8v1.3h-.8zM24.1 289.1h.8v1.3h-.8zM25.0 289.1h.8v1.3h-.8zM26.8 289.1h.8v1.3h-.8zM30.4 289.1h.8v1.3h-.8zM32.2 289.1h.8v1.3h-.8zM34.0 289.1h.8v1.3h-.8zM37.6 289.1h.8v1.3h-.8zM38.5 289.1h.8v1.3h-.8zM29.5 292.7h.8v1.3h-.8zM31.3 294.5h.8v1.3h-.8zM31.3 303.5h.8v1.3h-.8zM42.1 303.5h.8v1.3h-.8zM13.3 310.6h.8v1.3h-.8zM15.1 310.6h.8v1.3h-.8zM18.7 310.6h.8v1.3h-.8zM20.5 310.6h.8v1.3h-.8zM21.4 310.6h.8v1.3h-.8zM23.2 310.6h.8v1.3h-.8zM24.1 310.6h.8v1.3h-.8zM27.7 310.6h.8v1.3h-.8zM36.7 310.6h.8v1.3h-.8zM39.4 310.6h.8v1.3h-.8zM8.8 314.2h.8v1.3h-.8zM9.7 314.2h.8v1.3h-.8zM16.9 314.2h.8v1.3h-.8zM29.5 317.8h.8v1.3h-.8zM30.4 317.8h.8v1.3h-.8zM43.0 317.8h.8v1.3h-.8zM8.8 328.6h.8v1.3h-.8zM9.7 328.6h.8v1.3h-.8zM23.2 328.6h.8v1.3h-.8zM25.9 328.6h.8v1.3h-.8zM28.6 328.6h.8v1.3h-.8zM40.3 328.6h.8v1.3h-.8zM43.0 328.6h.8v1.3h-.8zM47.5 328.6h.8v1.3h-.8zM50.2 328.6h.8v1.3h-.8zM52.9 328.6h.8v1.3h-.8zM9.7 332.1h.8v1.3h-.8zM11.5 332.1h.8v1.3h-.8zM14.2 332.1h.8v1.3h-.8zM15.1 332.1h.8v1.3h-.8zM23.2 332.1h.8v1.3h-.8zM24.1 332.1h.8v1.3h-.8zM28.6 332.1h.8v1.3h-.8zM29.5 332.1h.8v1.3h-.8zM30.4 332.1h.8v1.3h-.8zM34.0 332.1h.8v1.3h-.8zM43.9 332.1h.8v1.3h-.8zM50.2 332.1h.8v1.3h-.8zM52.0 332.1h.8v1.3h-.8zM15.1 333.9h.8v1.3h-.8zM20.5 333.9h.8v1.3h-.8zM22.3 333.9h.8v1.3h-.8zM23.2 333.9h.8v1.3h-.8zM25.0 333.9h.8v1.3h-.8zM25.9 333.9h.8v1.3h-.8zM26.8 333.9h.8v1.3h-.8zM30.4 333.9h.8v1.3h-.8zM32.2 333.9h.8v1.3h-.8zM35.8 333.9h.8v1.3h-.8zM8.8 348.3h.8v1.3h-.8zM13.3 348.3h.8v1.3h-.8zM20.5 348.3h.8v1.3h-.8zM26.8 348.3h.8v1.3h-.8zM29.5 348.3h.8v1.3h-.8zM34.0 348.3h.8v1.3h-.8zM36.7 348.3h.8v1.3h-.8zM37.6 348.3h.8v1.3h-.8zM38.5 348.3h.8v1.3h-.8zM39.4 348.3h.8v1.3h-.8zM45.7 348.3h.8v1.3h-.8zM51.1 348.3h.8v1.3h-.8zM55.6 348.3h.8v1.3h-.8zM58.3 348.3h.8v1.3h-.8zM60.1 348.3h.8v1.3h-.8zM13.3 350.1h.8v1.3h-.8zM15.1 350.1h.8v1.3h-.8zM16.0 350.1h.8v1.3h-.8zM22.3 350.1h.8v1.3h-.8zM23.2 350.1h.8v1.3h-.8zM26.8 350.1h.8v1.3h-.8zM27.7 350.1h.8v1.3h-.8zM28.6 350.1h.8v1.3h-.8zM40.3 350.1h.8v1.3h-.8zM44.8 350.1h.8v1.3h-.8zM46.6 350.1h.8v1.3h-.8zM51.1 350.1h.8v1.3h-.8zM54.7 350.1h.8v1.3h-.8zM55.6 350.1h.8v1.3h-.8zM9.7 351.9h.8v1.3h-.8zM14.2 351.9h.8v1.3h-.8zM17.8 351.9h.8v1.3h-.8zM25.0 351.9h.8v1.3h-.8zM25.9 351.9h.8v1.3h-.8zM28.6 351.9h.8v1.3h-.8zM41.2 351.9h.8v1.3h-.8zM43.0 351.9h.8v1.3h-.8zM44.8 351.9h.8v1.3h-.8zM45.7 351.9h.8v1.3h-.8zM46.6 351.9h.8v1.3h-.8zM51.1 351.9h.8v1.3h-.8zM54.7 351.9h.8v1.3h-.8zM60.1 351.9h.8v1.3h-.8zM8.8 355.4h.8v1.3h-.8zM12.4 355.4h.8v1.3h-.8zM15.1 355.4h.8v1.3h-.8zM16.0 355.4h.8v1.3h-.8zM23.2 355.4h.8v1.3h-.8zM25.0 355.4h.8v1.3h-.8zM27.7 355.4h.8v1.3h-.8zM29.5 355.4h.8v1.3h-.8zM30.4 355.4h.8v1.3h-.8zM33.1 355.4h.8v1.3h-.8zM36.7 355.4h.8v1.3h-.8zM48.4 355.4h.8v1.3h-.8zM9.7 398.5h.8v1.3h-.8zM12.4 398.5h.8v1.3h-.8zM21.4 398.5h.8v1.3h-.8zM28.6 398.5h.8v1.3h-.8zM34.9 398.5h.8v1.3h-.8zM43.0 398.5h.8v1.3h-.8zM44.8 398.5h.8v1.3h-.8zM46.6 398.5h.8v1.3h-.8zM47.5 398.5h.8v1.3h-.8zM49.3 398.5h.8v1.3h-.8zM51.1 398.5h.8v1.3h-.8zM55.6 398.5h.8v1.3h-.8zM61.0 398.5h.8v1.3h-.8zM13.3 407.4h.8v1.3h-.8zM16.0 407.4h.8v1.3h-.8zM16.9 407.4h.8v1.3h-.8zM18.7 407.4h.8v1.3h-.8zM26.8 407.4h.8v1.3h-.8zM28.6 407.4h.8v1.3h-.8zM34.9 407.4h.8v1.3h-.8zM41.2 407.4h.8v1.3h-.8zM43.9 407.4h.8v1.3h-.8zM51.1 407.4h.8v1.3h-.8zM56.5 407.4h.8v1.3h-.8zM59.2 407.4h.8v1.3h-.8zM10.6 409.2h.8v1.3h-.8zM19.6 409.2h.8v1.3h-.8zM21.4 409.2h.8v1.3h-.8zM15.1 412.8h.8v1.3h-.8zM16.0 412.8h.8v1.3h-.8zM16.9 412.8h.8v1.3h-.8zM28.6 412.8h.8v1.3h-.8zM30.4 412.8h.8v1.3h-.8zM40.3 412.8h.8v1.3h-.8zM46.6 412.8h.8v1.3h-.8zM48.4 412.8h.8v1.3h-.8zM12.4 414.6h.8v1.3h-.8zM15.1 414.6h.8v1.3h-.8zM20.5 414.6h.8v1.3h-.8zM27.7 414.6h.8v1.3h-.8zM29.5 414.6h.8v1.3h-.8zM31.3 414.6h.8v1.3h-.8zM43.9 414.6h.8v1.3h-.8zM50.2 414.6h.8v1.3h-.8zM53.8 414.6h.8v1.3h-.8zM55.6 414.6h.8v1.3h-.8zM57.4 414.6h.8v1.3h-.8zM60.1 414.6h.8v1.3h-.8zM10.6 416.4h.8v1.3h-.8zM12.4 416.4h.8v1.3h-.8zM13.3 416.4h.8v1.3h-.8zM15.1 416.4h.8v1.3h-.8zM18.7 416.4h.8v1.3h-.8zM21.4 416.4h.8v1.3h-.8zM25.0 416.4h.8v1.3h-.8zM30.4 416.4h.8v1.3h-.8zM34.9 416.4h.8v1.3h-.8zM37.6 416.4h.8v1.3h-.8zM40.3 416.4h.8v1.3h-.8zM42.1 416.4h.8v1.3h-.8zM44.8 416.4h.8v1.3h-.8zM51.1 416.4h.8v1.3h-.8zM54.7 416.4h.8v1.3h-.8zM56.5 416.4h.8v1.3h-.8zM57.4 416.4h.8v1.3h-.8zM59.2 416.4h.8v1.3h-.8zM11.5 418.2h.8v1.3h-.8zM20.5 418.2h.8v1.3h-.8zM23.2 418.2h.8v1.3h-.8zM30.4 418.2h.8v1.3h-.8zM33.1 418.2h.8v1.3h-.8zM43.0 418.2h.8v1.3h-.8zM43.9 418.2h.8v1.3h-.8zM47.5 418.2h.8v1.3h-.8zM50.2 418.2h.8v1.3h-.8zM51.1 418.2h.8v1.3h-.8zM15.1 420.0h.8v1.3h-.8zM18.7 420.0h.8v1.3h-.8zM19.6 420.0h.8v1.3h-.8zM25.0 420.0h.8v1.3h-.8zM34.0 420.0h.8v1.3h-.8zM42.1 420.0h.8v1.3h-.8zM44.8 420.0h.8v1.3h-.8zM46.6 420.0h.8v1.3h-.8zM47.5 420.0h.8v1.3h-.8zM56.5 420.0h.8v1.3h-.8zM15.1 421.7h.8v1.3h-.8zM17.8 421.7h.8v1.3h-.8zM23.2 421.7h.8v1.3h-.8zM26.8 421.7h.8v1.3h-.8zM27.7 421.7h.8v1.3h-.8zM33.1 421.7h.8v1.3h-.8zM34.0 421.7h.8v1.3h-.8zM37.6 421.7h.8v1.3h-.8zM38.5 421.7h.8v1.3h-.8zM42.1 421.7h.8v1.3h-.8zM43.0 421.7h.8v1.3h-.8zM44.8 421.7h.8v1.3h-.8zM47.5 421.7h.8v1.3h-.8zM50.2 421.7h.8v1.3h-.8zM52.0 421.7h.8v1.3h-.8zM55.6 421.7h.8v1.3h-.8zM61.0 421.7h.8v1.3h-.8zM14.2 423.5h.8v1.3h-.8zM16.0 423.5h.8v1.3h-.8zM20.5 423.5h.8v1.3h-.8zM21.4 423.5h.8v1.3h-.8zM22.3 423.5h.8v1.3h-.8zM32.2 423.5h.8v1.3h-.8zM37.6 423.5h.8v1.3h-.8zM41.2 423.5h.8v1.3h-.8zM42.1 423.5h.8v1.3h-.8zM47.5 423.5h.8v1.3h-.8zM50.2 423.5h.8v1.3h-.8zM52.0 423.5h.8v1.3h-.8zM57.4 423.5h.8v1.3h-.8zM13.3 430.7h.8v1.3h-.8zM16.9 430.7h.8v1.3h-.8zM18.7 430.7h.8v1.3h-.8zM23.2 430.7h.8v1.3h-.8zM28.6 430.7h.8v1.3h-.8zM31.3 430.7h.8v1.3h-.8zM33.1 430.7h.8v1.3h-.8zM41.2 430.7h.8v1.3h-.8zM45.7 430.7h.8v1.3h-.8zM47.5 430.7h.8v1.3h-.8zM50.2 430.7h.8v1.3h-.8zM54.7 430.7h.8v1.3h-.8zM59.2 430.7h.8v1.3h-.8zM61.0 430.7h.8v1.3h-.8zM17.8 432.5h.8v1.3h-.8zM18.7 432.5h.8v1.3h-.8zM21.4 432.5h.8v1.3h-.8zM22.3 432.5h.8v1.3h-.8zM26.8 432.5h.8v1.3h-.8zM27.7 432.5h.8v1.3h-.8zM29.5 432.5h.8v1.3h-.8zM34.0 432.5h.8v1.3h-.8zM36.7 432.5h.8v1.3h-.8zM40.3 432.5h.8v1.3h-.8zM43.0 432.5h.8v1.3h-.8zM44.8 432.5h.8v1.3h-.8zM48.4 432.5h.8v1.3h-.8zM50.2 432.5h.8v1.3h-.8zM51.1 432.5h.8v1.3h-.8zM57.4 432.5h.8v1.3h-.8zM12.4 434.3h.8v1.3h-.8zM13.3 434.3h.8v1.3h-.8zM15.1 434.3h.8v1.3h-.8zM16.0 434.3h.8v1.3h-.8zM16.9 434.3h.8v1.3h-.8zM17.8 434.3h.8v1.3h-.8zM18.7 434.3h.8v1.3h-.8zM22.3 434.3h.8v1.3h-.8zM30.4 434.3h.8v1.3h-.8zM31.3 434.3h.8v1.3h-.8zM32.2 434.3h.8v1.3h-.8zM33.1 434.3h.8v1.3h-.8zM42.1 434.3h.8v1.3h-.8zM43.0 434.3h.8v1.3h-.8zM45.7 434.3h.8v1.3h-.8zM47.5 434.3h.8v1.3h-.8zM16.0 436.1h.8v1.3h-.8zM16.9 436.1h.8v1.3h-.8zM21.4 436.1h.8v1.3h-.8zM22.3 436.1h.8v1.3h-.8zM23.2 436.1h.8v1.3h-.8zM25.0 436.1h.8v1.3h-.8zM27.7 436.1h.8v1.3h-.8zM33.1 436.1h.8v1.3h-.8zM44.8 436.1h.8v1.3h-.8zM49.3 436.1h.8v1.3h-.8zM50.2 436.1h.8v1.3h-.8zM54.7 436.1h.8v1.3h-.8zM58.3 436.1h.8v1.3h-.8zM61.0 436.1h.8v1.3h-.8z"/><path fill="#008000" fill-opacity="0.46" d="M9.7 0.6h.8v1.3h-.8zM10.6 0.6h.8v1.3h-.8zM11.5 0.6h.8v1.3h-.8zM13.3 0.6h.8v1.3h-.8zM20.5 0.6h.8v1.3h-.8zM23.2 0.6h.8v1.3h-.8zM24.1 0.6h.8v1.3h-.8zM25.9 0.6h.8v1.3h-.8zM27.7 0.6h.8v1.3h-.8zM30.4 0.6h.8v1.3h-.8zM34.9 0.6h.8v1.3h-.8zM35.8 0.6h.8v1.3h-.8zM38.5 0.6h.8v1.3h-.8zM43.9 0.6h.8v1.3h-.8zM45.7 0.6h.8v1.3h-.8zM53.8 0.6h.8v1.3h-.8zM54.7 0.6h.8v1.3h-.8zM56.5 0.6h.8v1.3h-.8zM57.4 0.6h.8v1.3h-.8zM58.3 0.6h.8v1.3h-.8zM59.2 0.6h.8v1.3h-.8zM60.1 0.6h.8v1.3h-.8zM61.0 0.6h.8v1.3h-.8zM11.5 2.4h.8v1.3h-.8zM16.0 2.4h.8v1.3h-.8zM21.4 2.4h.8v1.3h-.8zM26.8 2.4h.8v1.3h-.8zM43.9 18.5h.8v1.3h-.8zM44.8 18.5h.8v1.3h-.8zM32.2 29.3h.8v1.3h-.8zM53.8 31.1h.8v1.3h-.8zM54.7 31.1h.8v1.3h-.8zM56.5 32.9h.8v1.3h-.8zM53.8 34.7h.8v1.3h-.8zM66.4 34.7h.8v1.3h-.8zM30.4 45.4h.8v1.3h-.8zM42.1 45.4h.8v1.3h-.8zM21.4 47.2h.8v1.3h-.8zM42.1 49.0h.8v1.3h-.8zM33.1 52.6h.8v1.3h-.8zM8.8 54.4h.8v1.3h-.8zM15.1 54.4h.8v1.3h-.8zM8.8 59.8h.8v1.3h-.8zM42.1 104.6h.8v1.3h-.8zM7.9 113.5h.8v1.3h-.8zM8.8 113.5h.8v1.3h-.8zM19.6 113.5h.8v1.3h-.8zM20.5 113.5h.8v1.3h-.8zM22.3 113.5h.8v1.3h-.8zM24.1 113.5h.8v1.3h-.8zM25.0 113.5h.8v1.3h-.8zM25.9 113.5h.8v1.3h-.8zM41.2 113.5h.8v1.3h-.8zM43.9 113.5h.8v1.3h-.8zM52.9 113.5h.8v1.3h-.8zM53.8 113.5h.8v1.3h-.8zM57.4 113.5h.8v1.3h-.8zM58.3 113.5h.8v1.3h-.8zM59.2 113.5h.8v1.3h-.8zM61.0 113.5h.8v1.3h-.8zM8.8 115.3h.8v1.3h-.8zM12.4 115.3h.8v1.3h-.8zM14.2 115.3h.8v1.3h-.8zM16.0 115.3h.8v1.3h-.8zM16.9 115.3h.8v1.3h-.8zM17.8 115.3h.8v1.3h-.8zM18.7 115.3h.8v1.3h-.8zM21.4 115.3h.8v1.3h-.8zM7.9 135.0h.8v1.3h-.8zM8.8 135.0h.8v1.3h-.8zM10.6 135.0h.8v1.3h-.8zM11.5 135.0h.8v1.3h-.8zM12.4 135.0h.8v1.3h-.8zM13.3 135.0h.8v1.3h-.8zM24.1 135.0h.8v1.3h-.8zM26.8 135.0h.8v1.3h-.8zM27.7 135.0h.8v1.3h-.8zM28.6 135.0h.8v1.3h-.8zM30.4 135.0h.8v1.3h-.8zM31.3 135.0h.8v1.3h-.8zM36.7 135.0h.8v1.3h-.8zM38.5 135.0h.8v1.3h-.8zM39.4 135.0h.8v1.3h-.8zM43.9 135.0h.8v1.3h-.8zM44.8 135.0h.8v1.3h-.8zM45.7 135.0h.8v1.3h-.8zM47.5 135.0h.8v1.3h-.8zM49.3 135.0h.8v1.3h-.8zM53.8 135.0h.8v1.3h-.8zM55.6 135.0h.8v1.3h-.8zM56.5 135.0h.8v1.3h-.8zM9.7 136.8h.8v1.3h-.8zM10.6 136.8h.8v1.3h-.8zM12.4 136.8h.8v1.3h-.8zM15.1 136.8h.8v1.3h-.8zM16.0 136.8h.8v1.3h-.8zM18.7 136.8h.8v1.3h-.8zM20.5 136.8h.8v1.3h-.8zM27.7 136.8h.8v1.3h-.8zM30.4 136.8h.8v1.3h-.8zM31.3 136.8h.8v1.3h-.8zM34.9 136.8h.8v1.3h-.8zM35.8 136.8h.8v1.3h-.8zM36.7 136.8h.8v1.3h-.8zM37.6 136.8h.8v1.3h-.8zM51.1 136.8h.8v1.3h-.8zM56.5 136.8h.8v1.3h-.8zM61.0 136.8h.8v1.3h-.8zM7.0 138.6h.8v1.3h-.8zM9.7 138.6h.8v1.3h-.8zM12.4 138.6h.8v1.3h-.8zM14.2 138.6h.8v1.3h-.8zM17.8 138.6h.8v1.3h-.8zM23.2 138.6h.8v1.3h-.8zM25.9 138.6h.8v1.3h-.8zM29.5 138.6h.8v1.3h-.8zM15.1 145.8h.8v1.3h-.8zM16.9 145.8h.8v1.3h-.8zM17.8 145.8h.8v1.3h-.8zM18.7 145.8h.8v1.3h-.8zM20.5 145.8h.8v1.3h-.8zM22.3 145.8h.8v1.3h-.8zM25.0 145.8h.8v1.3h-.8zM14.2 147.6h.8v1.3h-.8zM22.3 147.6h.8v1.3h-.8zM23.2 147.6h.8v1.3h-.8zM28.6 147.6h.8v1.3h-.8zM33.1 147.6h.8v1.3h-.8zM35.8 147.6h.8v1.3h-.8zM36.7 147.6h.8v1.3h-.8zM60.1 147.6h.8v1.3h-.8zM7.0 151.2h.8v1.3h-.8zM7.9 151.2h.8v1.3h-.8zM8.8 151.2h.8v1.3h-.8zM19.6 151.2h.8v1.3h-.8zM22.3 151.2h.8v1.3h-.8zM25.0 151.2h.8v1.3h-.8zM29.5 151.2h.8v1.3h-.8zM37.6 151.2h.8v1.3h-.8zM38.5 151.2h.8v1.3h-.8zM39.4 151.2h.8v1.3h-.8zM40.3 151.2h.8v1.3h-.8zM42.1 151.2h.8v1.3h-.8zM43.0 151.2h.8v1.3h-.8zM48.4 151.2h.8v1.3h-.8zM51.1 151.2h.8v1.3h-.8zM52.9 151.2h.8v1.3h-.8zM55.6 151.2h.8v1.3h-.8zM56.5 151.2h.8v1.3h-.8zM7.0 152.9h.8v1.3h-.8zM7.9 152.9h.8v1.3h-.8zM8.8 152.9h.8v1.3h-.8zM9.7 152.9h.8v1.3h-.8zM10.6 152.9h.8v1.3h-.8zM15.1 152.9h.8v1.3h-.8zM20.5 152.9h.8v1.3h-.8zM22.3 152.9h.8v1.3h-.8zM26.8 152.9h.8v1.3h-.8zM33.1 152.9h.8v1.3h-.8zM37.6 152.9h.8v1.3h-.8zM40.3 152.9h.8v1.3h-.8zM41.2 152.9h.8v1.3h-.8zM43.0 152.9h.8v1.3h-.8zM49.3 152.9h.8v1.3h-.8zM51.1 152.9h.8v1.3h-.8zM52.0 152.9h.8v1.3h-.8zM52.9 152.9h.8v1.3h-.8zM54.7 152.9h.8v1.3h-.8zM57.4 152.9h.8v1.3h-.8zM61.0 152.9h.8v1.3h-.8zM7.0 154.7h.8v1.3h-.8zM7.9 154.7h.8v1.3h-.8zM9.7 154.7h.8v1.3h-.8zM14.2 154.7h.8v1.3h-.8zM16.9 154.7h.8v1.3h-.8zM21.4 154.7h.8v1.3h-.8zM22.3 154.7h.8v1.3h-.8zM24.1 154.7h.8v1.3h-.8zM25.9 154.7h.8v1.3h-.8zM26.8 154.7h.8v1.3h-.8zM29.5 154.7h.8v1.3h-.8zM32.2 154.7h.8v1.3h-.8zM38.5 154.7h.8v1.3h-.8zM46.6 154.7h.8v1.3h-.8zM48.4 154.7h.8v1.3h-.8zM51.1 154.7h.8v1.3h-.8zM52.9 154.7h.8v1.3h-.8zM54.7 154.7h.8v1.3h-.8zM59.2 154.7h.8v1.3h-.8zM60.1 154.7h.8v1.3h-.8zM7.0 156.5h.8v1.3h-.8zM9.7 156.5h.8v1.3h-.8zM16.9 156.5h.8v1.3h-.8zM17.8 156.5h.8v1.3h-.8zM22.3 156.5h.8v1.3h-.8zM23.2 156.5h.8v1.3h-.8zM25.9 156.5h.8v1.3h-.8zM29.5 156.5h.8v1.3h-.8zM30.4 156.5h.8v1.3h-.8zM32.2 156.5h.8v1.3h-.8zM33.1 156.5h.8v1.3h-.8zM34.0 156.5h.8v1.3h-.8zM37.6 156.5h.8v1.3h-.8zM38.5 156.5h.8v1.3h-.8zM42.1 156.5h.8v1.3h-.8zM44.8 156.5h.8v1.3h-.8zM45.7 156.5h.8v1.3h-.8zM47.5 156.5h.8v1.3h-.8zM50.2 156.5h.8v1.3h-.8zM53.8 156.5h.8v1.3h-.8zM56.5 156.5h.8v1.3h-.8zM61.0 156.5h.8v1.3h-.8zM8.8 158.3h.8v1.3h-.8zM13.3 158.3h.8v1.3h-.8zM15.1 158.3h.8v1.3h-.8zM16.9 158.3h.8v1.3h-.8zM17.8 158.3h.8v1.3h-.8zM18.7 158.3h.8v1.3h-.8zM21.4 158.3h.8v1.3h-.8zM22.3 158.3h.8v1.3h-.8zM24.1 158.3h.8v1.3h-.8zM25.0 158.3h.8v1.3h-.8zM27.7 158.3h.8v1.3h-.8zM28.6 158.3h.8v1.3h-.8zM33.1 158.3h.8v1.3h-.8zM35.8 158.3h.8v1.3h-.8zM36.7 158.3h.8v1.3h-.8zM37.6 158.3h.8v1.3h-.8zM38.5 158.3h.8v1.3h-.8zM41.2 158.3h.8v1.3h-.8zM42.1 158.3h.8v1.3h-.8zM44.8 158.3h.8v1.3h-.8zM45.7 158.3h.8v1.3h-.8zM50.2 158.3h.8v1.3h-.8zM51.1 158.3h.8v1.3h-.8zM56.5 158.3h.8v1.3h-.8zM58.3 158.3h.8v1.3h-.8zM59.2 158.3h.8v1.3h-.8zM61.0 158.3h.8v1.3h-.8zM34.0 161.9h.8v1.3h-.8zM14.2 165.5h.8v1.3h-.8zM15.1 165.5h.8v1.3h-.8zM21.4 165.5h.8v1.3h-.8zM22.3 165.5h.8v1.3h-.8zM26.8 165.5h.8v1.3h-.8zM17.8 167.3h.8v1.3h-.8zM19.6 167.3h.8v1.3h-.8zM21.4 167.3h.8v1.3h-.8zM22.3 167.3h.8v1.3h-.8zM23.2 167.3h.8v1.3h-.8zM25.9 167.3h.8v1.3h-.8zM28.6 167.3h.8v1.3h-.8zM32.2 167.3h.8v1.3h-.8zM8.8 178.0h.8v1.3h-.8zM10.6 178.0h.8v1.3h-.8zM11.5 178.0h.8v1.3h-.8zM13.3 178.0h.8v1.3h-.8zM16.0 178.0h.8v1.3h-.8zM22.3 178.0h.8v1.3h-.8zM24.1 178.0h.8v1.3h-.8zM25.0 178.0h.8v1.3h-.8zM26.8 178.0h.8v1.3h-.8zM27.7 178.0h.8v1.3h-.8zM28.6 178.0h.8v1.3h-.8zM31.3 178.0h.8v1.3h-.8zM33.1 178.0h.8v1.3h-.8zM36.7 178.0h.8v1.3h-.8zM39.4 178.0h.8v1.3h-.8zM41.2 178.0h.8v1.3h-.8zM42.1 178.0h.8v1.3h-.8zM43.9 178.0h.8v1.3h-.8zM51.1 178.0h.8v1.3h-.8zM52.0 178.0h.8v1.3h-.8zM52.9 178.0h.8v1.3h-.8zM54.7 178.0h.8v1.3h-.8zM57.4 178.0h.8v1.3h-.8zM59.2 178.0h.8v1.3h-.8zM33.1 188.8h.8v1.3h-.8zM37.6 188.8h.8v1.3h-.8zM49.3 188.8h.8v1.3h-.8zM52.0 188.8h.8v1.3h-.8zM59.2 188.8h.8v1.3h-.8zM10.6 196.0h.8v1.3h-.8zM11.5 196.0h.8v1.3h-.8zM12.4 196.0h.8v1.3h-.8zM13.3 196.0h.8v1.3h-.8zM15.1 196.0h.8v1.3h-.8zM17.8 196.0h.8v1.3h-.8zM19.6 196.0h.8v1.3h-.8zM20.5 196.0h.8v1.3h-.8zM23.2 196.0h.8v1.3h-.8zM24.1 196.0h.8v1.3h-.8zM27.7 196.0h.8v1.3h-.8zM28.6 196.0h.8v1.3h-.8zM31.3 196.0h.8v1.3h-.8zM34.9 196.0h.8v1.3h-.8zM35.8 196.0h.8v1.3h-.8zM40.3 196.0h.8v1.3h-.8zM42.1 196.0h.8v1.3h-.8zM52.9 196.0h.8v1.3h-.8zM53.8 196.0h.8v1.3h-.8zM56.5 196.0h.8v1.3h-.8zM57.4 196.0h.8v1.3h-.8zM10.6 197.7h.8v1.3h-.8zM11.5 197.7h.8v1.3h-.8zM12.4 197.7h.8v1.3h-.8zM16.0 197.7h.8v1.3h-.8zM25.9 197.7h.8v1.3h-.8zM28.6 197.7h.8v1.3h-.8zM29.5 197.7h.8v1.3h-.8zM38.5 197.7h.8v1.3h-.8zM39.4 197.7h.8v1.3h-.8zM40.3 197.7h.8v1.3h-.8zM41.2 197.7h.8v1.3h-.8zM8.8 199.5h.8v1.3h-.8zM8.8 201.3h.8v1.3h-.8zM15.1 201.3h.8v1.3h-.8zM16.9 201.3h.8v1.3h-.8zM17.8 201.3h.8v1.3h-.8zM21.4 201.3h.8v1.3h-.8zM22.3 201.3h.8v1.3h-.8zM25.9 201.3h.8v1.3h-.8zM26.8 201.3h.8v1.3h-.8zM29.5 201.3h.8v1.3h-.8zM43.0 201.3h.8v1.3h-.8zM43.9 201.3h.8v1.3h-.8zM49.3 201.3h.8v1.3h-.8zM52.0 201.3h.8v1.3h-.8zM52.9 201.3h.8v1.3h-.8zM8.8 203.1h.8v1.3h-.8zM13.3 203.1h.8v1.3h-.8zM22.3 203.1h.8v1.3h-.8zM24.1 203.1h.8v1.3h-.8zM25.9 203.1h.8v1.3h-.8zM32.2 203.1h.8v1.3h-.8zM42.1 203.1h.8v1.3h-.8zM43.0 203.1h.8v1.3h-.8zM43.9 203.1h.8v1.3h-.8zM45.7 203.1h.8v1.3h-.8zM47.5 203.1h.8v1.3h-.8zM53.8 203.1h.8v1.3h-.8zM11.5 204.9h.8v1.3h-.8zM13.3 204.9h.8v1.3h-.8zM14.2 204.9h.8v1.3h-.8zM17.8 204.9h.8v1.3h-.8zM18.7 204.9h.8v1.3h-.8zM19.6 204.9h.8v1.3h-.8zM20.5 204.9h.8v1.3h-.8zM23.2 204.9h.8v1.3h-.8zM24.1 204.9h.8v1.3h-.8zM29.5 204.9h.8v1.3h-.8zM30.4 204.9h.8v1.3h-.8zM31.3 204.9h.8v1.3h-.8zM32.2 204.9h.8v1.3h-.8zM33.1 204.9h.8v1.3h-.8zM42.1 204.9h.8v1.3h-.8zM43.9 204.9h.8v1.3h-.8zM46.6 204.9h.8v1.3h-.8zM47.5 204.9h.8v1.3h-.8zM49.3 204.9h.8v1.3h-.8zM54.7 204.9h.8v1.3h-.8zM41.2 228.2h.8v1.3h-.8zM48.4 231.8h.8v1.3h-.8zM16.9 244.3h.8v1.3h-.8zM33.1 282.0h.8v1.3h-.8zM15.1 285.6h.8v1.3h-.8zM16.9 285.6h.8v1.3h-.8zM21.4 285.6h.8v1.3h-.8zM23.2 285.6h.8v1.3h-.8zM25.0 285.6h.8v1.3h-.8zM27.7 285.6h.8v1.3h-.8zM29.5 285.6h.8v1.3h-.8zM36.7 285.6h.8v1.3h-.8zM39.4 285.6h.8v1.3h-.8zM43.0 285.6h.8v1.3h-.8zM12.4 289.1h.8v1.3h-.8zM19.6 289.1h.8v1.3h-.8zM21.4 289.1h.8v1.3h-.8zM22.3 289.1h.8v1.3h-.8zM25.9 289.1h.8v1.3h-.8zM28.6 289.1h.8v1.3h-.8zM29.5 289.1h.8v1.3h-.8zM36.7 289.1h.8v1.3h-.8zM34.9 290.9h.8v1.3h-.8zM32.2 294.5h.8v1.3h-.8zM56.5 294.5h.8v1.3h-.8zM30.4 303.5h.8v1.3h-.8zM43.0 303.5h.8v1.3h-.8zM16.9 310.6h.8v1.3h-.8zM19.6 310.6h.8v1.3h-.8zM25.0 310.6h.8v1.3h-.8zM25.9 310.6h.8v1.3h-.8zM28.6 310.6h.8v1.3h-.8zM29.5 310.6h.8v1.3h-.8zM31.3 310.6h.8v1.3h-.8zM32.2 310.6h.8v1.3h-.8zM33.1 310.6h.8v1.3h-.8zM34.9 310.6h.8v1.3h-.8zM37.6 310.6h.8v1.3h-.8zM11.5 314.2h.8v1.3h-.8zM13.3 314.2h.8v1.3h-.8zM15.1 314.2h.8v1.3h-.8zM16.0 314.2h.8v1.3h-.8zM17.8 314.2h.8v1.3h-.8zM42.1 317.8h.8v1.3h-.8zM11.5 328.6h.8v1.3h-.8zM12.4 328.6h.8v1.3h-.8zM13.3 328.6h.8v1.3h-.8zM18.7 328.6h.8v1.3h-.8zM22.3 328.6h.8v1.3h-.8zM26.8 328.6h.8v1.3h-.8zM30.4 328.6h.8v1.3h-.8zM31.3 328.6h.8v1.3h-.8zM32.2 328.6h.8v1.3h-.8zM42.1 328.6h.8v1.3h-.8zM44.8 328.6h.8v1.3h-.8zM46.6 328.6h.8v1.3h-.8zM54.7 328.6h.8v1.3h-.8zM55.6 328.6h.8v1.3h-.8zM56.5 328.6h.8v1.3h-.8zM34.0 330.4h.8v1.3h-.8zM34.9 330.4h.8v1.3h-.8zM8.8 332.1h.8v1.3h-.8zM10.6 332.1h.8v1.3h-.8zM12.4 332.1h.8v1.3h-.8zM17.8 332.1h.8v1.3h-.8zM21.4 332.1h.8v1.3h-.8zM22.3 332.1h.8v1.3h-.8zM25.9 332.1h.8v1.3h-.8zM33.1 332.1h.8v1.3h-.8zM44.8 332.1h.8v1.3h-.8zM45.7 332.1h.8v1.3h-.8zM46.6 332.1h.8v1.3h-.8zM47.5 332.1h.8v1.3h-.8zM51.1 332.1h.8v1.3h-.8zM53.8 332.1h.8v1.3h-.8zM55.6 332.1h.8v1.3h-.8zM9.7 333.9h.8v1.3h-.8zM11.5 333.9h.8v1.3h-.8zM12.4 333.9h.8v1.3h-.8zM14.2 333.9h.8v1.3h-.8zM16.0 333.9h.8v1.3h-.8zM17.8 333.9h.8v1.3h-.8zM18.7 333.9h.8v1.3h-.8zM19.6 333.9h.8v1.3h-.8zM27.7 333.9h.8v1.3h-.8zM28.6 333.9h.8v1.3h-.8zM29.5 333.9h.8v1.3h-.8zM33.1 333.9h.8v1.3h-.8zM36.7 333.9h.8v1.3h-.8zM39.4 333.9h.8v1.3h-.8zM34.0 335.7h.8v1.3h-.8zM10.6 348.3h.8v1.3h-.8zM11.5 348.3h.8v1.3h-.8zM14.2 348.3h.8v1.3h-.8zM16.9 348.3h.8v1.3h-.8zM21.4 348.3h.8v1.3h-.8zM22.3 348.3h.8v1.3h-.8zM23.2 348.3h.8v1.3h-.8zM25.9 348.3h.8v1.3h-.8zM30.4 348.3h.8v1.3h-.8zM32.2 348.3h.8v1.3h-.8zM34.9 348.3h.8v1.3h-.8zM40.3 348.3h.8v1.3h-.8zM43.0 348.3h.8v1.3h-.8zM46.6 348.3h.8v1.3h-.8zM47.5 348.3h.8v1.3h-.8zM49.3 348.3h.8v1.3h-.8zM50.2 348.3h.8v1.3h-.8zM52.0 348.3h.8v1.3h-.8zM52.9 348.3h.8v1.3h-.8zM54.7 348.3h.8v1.3h-.8zM59.2 348.3h.8v1.3h-.8zM8.8 350.1h.8v1.3h-.8zM12.4 350.1h.8v1.3h-.8zM17.8 350.1h.8v1.3h-.8zM18.7 350.1h.8v1.3h-.8zM20.5 350.1h.8v1.3h-.8zM21.4 350.1h.8v1.3h-.8zM25.0 350.1h.8v1.3h-.8zM25.9 350.1h.8v1.3h-.8zM30.4 350.1h.8v1.3h-.8zM31.3 350.1h.8v1.3h-.8zM34.0 350.1h.8v1.3h-.8zM34.9 350.1h.8v1.3h-.8zM37.6 350.1h.8v1.3h-.8zM38.5 350.1h.8v1.3h-.8zM41.2 350.1h.8v1.3h-.8zM43.0 350.1h.8v1.3h-.8zM43.9 350.1h.8v1.3h-.8zM47.5 350.1h.8v1.3h-.8zM49.3 350.1h.8v1.3h-.8zM50.2 350.1h.8v1.3h-.8zM53.8 350.1h.8v1.3h-.8zM60.1 350.1h.8v1.3h-.8zM8.8 351.9h.8v1.3h-.8zM10.6 351.9h.8v1.3h-.8zM11.5 351.9h.8v1.3h-.8zM13.3 351.9h.8v1.3h-.8zM15.1 351.9h.8v1.3h-.8zM18.7 351.9h.8v1.3h-.8zM19.6 351.9h.8v1.3h-.8zM21.4 351.9h.8v1.3h-.8zM22.3 351.9h.8v1.3h-.8zM24.1 351.9h.8v1.3h-.8zM27.7 351.9h.8v1.3h-.8zM30.4 351.9h.8v1.3h-.8zM31.3 351.9h.8v1.3h-.8zM32.2 351.9h.8v1.3h-.8zM34.0 351.9h.8v1.3h-.8zM35.8 351.9h.8v1.3h-.8zM36.7 351.9h.8v1.3h-.8zM37.6 351.9h.8v1.3h-.8zM38.5 351.9h.8v1.3h-.8zM40.3 351.9h.8v1.3h-.8zM43.9 351.9h.8v1.3h-.8zM47.5 351.9h.8v1.3h-.8zM50.2 351.9h.8v1.3h-.8zM52.0 351.9h.8v1.3h-.8zM53.8 351.9h.8v1.3h-.8zM57.4 351.9h.8v1.3h-.8zM59.2 351.9h.8v1.3h-.8zM13.3 355.4h.8v1.3h-.8zM16.9 355.4h.8v1.3h-.8zM17.8 355.4h.8v1.3h-.8zM18.7 355.4h.8v1.3h-.8zM20.5 355.4h.8v1.3h-.8zM21.4 355.4h.8v1.3h-.8zM22.3 355.4h.8v1.3h-.8zM25.9 355.4h.8v1.3h-.8zM28.6 355.4h.8v1.3h-.8zM31.3 355.4h.8v1.3h-.8zM34.0 355.4h.8v1.3h-.8zM34.9 355.4h.8v1.3h-.8zM35.8 355.4h.8v1.3h-.8zM38.5 355.4h.8v1.3h-.8zM39.4 355.4h.8v1.3h-.8zM43.0 355.4h.8v1.3h-.8zM44.8 355.4h.8v1.3h-.8zM8.8 398.5h.8v1.3h-.8zM10.6 398.5h.8v1.3h-.8zM14.2 398.5h.8v1.3h-.8zM16.0 398.5h.8v1.3h-.8zM17.8 398.5h.8v1.3h-.8zM18.7 398.5h.8v1.3h-.8zM22.3 398.5h.8v1.3h-.8zM24.1 398.5h.8v1.3h-.8zM25.0 398.5h.8v1.3h-.8zM25.9 398.5h.8v1.3h-.8zM27.7 398.5h.8v1.3h-.8zM32.2 398.5h.8v1.3h-.8zM35.8 398.5h.8v1.3h-.8zM36.7 398.5h.8v1.3h-.8zM38.5 398.5h.8v1.3h-.8zM39.4 398.5h.8v1.3h-.8zM41.2 398.5h.8v1.3h-.8zM45.7 398.5h.8v1.3h-.8zM48.4 398.5h.8v1.3h-.8zM53.8 398.5h.8v1.3h-.8zM54.7 398.5h.8v1.3h-.8zM60.1 398.5h.8v1.3h-.8zM10.6 407.4h.8v1.3h-.8zM12.4 407.4h.8v1.3h-.8zM14.2 407.4h.8v1.3h-.8zM17.8 407.4h.8v1.3h-.8zM19.6 407.4h.8v1.3h-.8zM21.4 407.4h.8v1.3h-.8zM23.2 407.4h.8v1.3h-.8zM24.1 407.4h.8v1.3h-.8zM25.0 407.4h.8v1.3h-.8zM27.7 407.4h.8v1.3h-.8zM29.5 407.4h.8v1.3h-.8zM35.8 407.4h.8v1.3h-.8zM36.7 407.4h.8v1.3h-.8zM37.6 407.4h.8v1.3h-.8zM38.5 407.4h.8v1.3h-.8zM40.3 407.4h.8v1.3h-.8zM42.1 407.4h.8v1.3h-.8zM46.6 407.4h.8v1.3h-.8zM52.0 407.4h.8v1.3h-.8zM53.8 407.4h.8v1.3h-.8zM54.7 407.4h.8v1.3h-.8zM55.6 407.4h.8v1.3h-.8zM58.3 407.4h.8v1.3h-.8zM11.5 409.2h.8v1.3h-.8zM14.2 409.2h.8v1.3h-.8zM15.1 409.2h.8v1.3h-.8zM16.0 409.2h.8v1.3h-.8zM16.9 409.2h.8v1.3h-.8zM18.7 409.2h.8v1.3h-.8zM20.5 409.2h.8v1.3h-.8zM23.2 409.2h.8v1.3h-.8zM24.1 409.2h.8v1.3h-.8zM25.0 409.2h.8v1.3h-.8zM14.2 412.8h.8v1.3h-.8zM17.8 412.8h.8v1.3h-.8zM18.7 412.8h.8v1.3h-.8zM21.4 412.8h.8v1.3h-.8zM24.1 412.8h.8v1.3h-.8zM25.0 412.8h.8v1.3h-.8zM26.8 412.8h.8v1.3h-.8zM31.3 412.8h.8v1.3h-.8zM32.2 412.8h.8v1.3h-.8zM34.0 412.8h.8v1.3h-.8zM34.9 412.8h.8v1.3h-.8zM38.5 412.8h.8v1.3h-.8zM39.4 412.8h.8v1.3h-.8zM44.8 412.8h.8v1.3h-.8zM13.3 414.6h.8v1.3h-.8zM16.0 414.6h.8v1.3h-.8zM16.9 414.6h.8v1.3h-.8zM18.7 414.6h.8v1.3h-.8zM19.6 414.6h.8v1.3h-.8zM21.4 414.6h.8v1.3h-.8zM25.0 414.6h.8v1.3h-.8zM25.9 414.6h.8v1.3h-.8zM26.8 414.6h.8v1.3h-.8zM30.4 414.6h.8v1.3h-.8zM32.2 414.6h.8v1.3h-.8zM33.1 414.6h.8v1.3h-.8zM34.0 414.6h.8v1.3h-.8zM34.9 414.6h.8v1.3h-.8zM37.6 414.6h.8v1.3h-.8zM39.4 414.6h.8v1.3h-.8zM40.3 414.6h.8v1.3h-.8zM42.1 414.6h.8v1.3h-.8zM43.0 414.6h.8v1.3h-.8zM48.4 414.6h.8v1.3h-.8zM52.0 414.6h.8v1.3h-.8zM52.9 414.6h.8v1.3h-.8zM54.7 414.6h.8v1.3h-.8zM56.5 414.6h.8v1.3h-.8zM58.3 414.6h.8v1.3h-.8zM11.5 416.4h.8v1.3h-.8zM14.2 416.4h.8v1.3h-.8zM16.9 416.4h.8v1.3h-.8zM19.6 416.4h.8v1.3h-.8zM22.3 416.4h.8v1.3h-.8zM27.7 416.4h.8v1.3h-.8zM28.6 416.4h.8v1.3h-.8zM34.0 416.4h.8v1.3h-.8zM36.7 416.4h.8v1.3h-.8zM43.0 416.4h.8v1.3h-.8zM43.9 416.4h.8v1.3h-.8zM45.7 416.4h.8v1.3h-.8zM48.4 416.4h.8v1.3h-.8zM49.3 416.4h.8v1.3h-.8zM53.8 416.4h.8v1.3h-.8zM58.3 416.4h.8v1.3h-.8zM13.3 418.2h.8v1.3h-.8zM14.2 418.2h.8v1.3h-.8zM15.1 418.2h.8v1.3h-.8zM16.9 418.2h.8v1.3h-.8zM17.8 418.2h.8v1.3h-.8zM18.7 418.2h.8v1.3h-.8zM19.6 418.2h.8v1.3h-.8zM22.3 418.2h.8v1.3h-.8zM25.0 418.2h.8v1.3h-.8zM25.9 418.2h.8v1.3h-.8zM28.6 418.2h.8v1.3h-.8zM29.5 418.2h.8v1.3h-.8zM31.3 418.2h.8v1.3h-.8zM35.8 418.2h.8v1.3h-.8zM36.7 418.2h.8v1.3h-.8zM37.6 418.2h.8v1.3h-.8zM38.5 418.2h.8v1.3h-.8zM41.2 418.2h.8v1.3h-.8zM42.1 418.2h.8v1.3h-.8zM44.8 418.2h.8v1.3h-.8zM48.4 418.2h.8v1.3h-.8zM49.3 418.2h.8v1.3h-.8zM52.0 418.2h.8v1.3h-.8zM52.9 418.2h.8v1.3h-.8zM53.8 418.2h.8v1.3h-.8zM55.6 418.2h.8v1.3h-.8zM56.5 418.2h.8v1.3h-.8zM57.4 418.2h.8v1.3h-.8zM58.3 418.2h.8v1.3h-.8zM61.0 418.2h.8v1.3h-.8zM10.6 420.0h.8v1.3h-.8zM12.4 420.0h.8v1.3h-.8zM14.2 420.0h.8v1.3h-.8zM16.0 420.0h.8v1.3h-.8zM16.9 420.0h.8v1.3h-.8zM23.2 420.0h.8v1.3h-.8zM26.8 420.0h.8v1.3h-.8zM30.4 420.0h.8v1.3h-.8zM32.2 420.0h.8v1.3h-.8zM33.1 420.0h.8v1.3h-.8zM37.6 420.0h.8v1.3h-.8zM38.5 420.0h.8v1.3h-.8zM40.3 420.0h.8v1.3h-.8zM45.7 420.0h.8v1.3h-.8zM49.3 420.0h.8v1.3h-.8zM50.2 420.0h.8v1.3h-.8zM54.7 420.0h.8v1.3h-.8zM55.6 420.0h.8v1.3h-.8zM57.4 420.0h.8v1.3h-.8zM58.3 420.0h.8v1.3h-.8zM60.1 420.0h.8v1.3h-.8zM61.0 420.0h.8v1.3h-.8zM10.6 421.7h.8v1.3h-.8zM12.4 421.7h.8v1.3h-.8zM13.3 421.7h.8v1.3h-.8zM14.2 421.7h.8v1.3h-.8zM16.0 421.7h.8v1.3h-.8zM18.7 421.7h.8v1.3h-.8zM19.6 421.7h.8v1.3h-.8zM20.5 421.7h.8v1.3h-.8zM21.4 421.7h.8v1.3h-.8zM29.5 421.7h.8v1.3h-.8zM30.4 421.7h.8v1.3h-.8zM35.8 421.7h.8v1.3h-.8zM36.7 421.7h.8v1.3h-.8zM51.1 421.7h.8v1.3h-.8zM52.9 421.7h.8v1.3h-.8zM56.5 421.7h.8v1.3h-.8zM58.3 421.7h.8v1.3h-.8zM13.3 423.5h.8v1.3h-.8zM17.8 423.5h.8v1.3h-.8zM18.7 423.5h.8v1.3h-.8zM19.6 423.5h.8v1.3h-.8zM25.9 423.5h.8v1.3h-.8zM27.7 423.5h.8v1.3h-.8zM28.6 423.5h.8v1.3h-.8zM34.0 423.5h.8v1.3h-.8zM34.9 423.5h.8v1.3h-.8zM44.8 423.5h.8v1.3h-.8zM48.4 423.5h.8v1.3h-.8zM51.1 423.5h.8v1.3h-.8zM52.9 423.5h.8v1.3h-.8zM55.6 423.5h.8v1.3h-.8zM59.2 423.5h.8v1.3h-.8zM12.4 430.7h.8v1.3h-.8zM16.0 430.7h.8v1.3h-.8zM24.1 430.7h.8v1.3h-.8zM29.5 430.7h.8v1.3h-.8zM34.9 430.7h.8v1.3h-.8zM35.8 430.7h.8v1.3h-.8zM36.7 430.7h.8v1.3h-.8zM37.6 430.7h.8v1.3h-.8zM39.4 430.7h.8v1.3h-.8zM42.1 430.7h.8v1.3h-.8zM46.6 430.7h.8v1.3h-.8zM52.0 430.7h.8v1.3h-.8zM55.6 430.7h.8v1.3h-.8zM56.5 430.7h.8v1.3h-.8zM57.4 430.7h.8v1.3h-.8zM15.1 432.5h.8v1.3h-.8zM16.0 432.5h.8v1.3h-.8zM16.9 432.5h.8v1.3h-.8zM20.5 432.5h.8v1.3h-.8zM23.2 432.5h.8v1.3h-.8zM30.4 432.5h.8v1.3h-.8zM33.1 432.5h.8v1.3h-.8zM41.2 432.5h.8v1.3h-.8zM43.9 432.5h.8v1.3h-.8zM52.9 432.5h.8v1.3h-.8zM55.6 432.5h.8v1.3h-.8zM58.3 432.5h.8v1.3h-.8zM59.2 432.5h.8v1.3h-.8zM60.1 432.5h.8v1.3h-.8zM61.0 432.5h.8v1.3h-.8zM14.2 434.3h.8v1.3h-.8zM20.5 434.3h.8v1.3h-.8zM21.4 434.3h.8v1.3h-.8zM25.0 434.3h.8v1.3h-.8zM25.9 434.3h.8v1.3h-.8zM26.8 434.3h.8v1.3h-.8zM27.7 434.3h.8v1.3h-.8zM34.0 434.3h.8v1.3h-.8zM35.8 434.3h.8v1.3h-.8zM39.4 434.3h.8v1.3h-.8zM40.3 434.3h.8v1.3h-.8zM41.2 434.3h.8v1.3h-.8zM43.9 434.3h.8v1.3h-.8zM46.6 434.3h.8v1.3h-.8zM13.3 436.1h.8v1.3h-.8zM17.8 436.1h.8v1.3h-.8zM18.7 436.1h.8v1.3h-.8zM29.5 436.1h.8v1.3h-.8zM31.3 436.1h.8v1.3h-.8zM32.2 436.1h.8v1.3h-.8zM34.9 436.1h.8v1.3h-.8zM35.8 436.1h.8v1.3h-.8zM37.6 436.1h.8v1.3h-.8zM40.3 436.1h.8v1.3h-.8zM42.1 436.1h.8v1.3h-.8zM43.0 436.1h.8v1.3h-.8zM45.7 436.1h.8v1.3h-.8zM48.4 436.1h.8v1.3h-.8zM51.1 436.1h.8v1.3h-.8zM53.8 436.1h.8v1.3h-.8zM55.6 436.1h.8v1.3h-.8zM59.2 436.1h.8v1.3h-.8z"/><path fill="#008000" fill-opacity="0.62" d="M16.9 0.6h.8v1.3h-.8zM19.6 0.6h.8v1.3h-.8zM22.3 0.6h.8v1.3h-.8zM26.8 0.6h.8v1.3h-.8zM29.5 0.6h.8v1.3h-.8zM33.1 0.6h.8v1.3h-.8zM37.6 0.6h.8v1.3h-.8zM39.4 0.6h.8v1.3h-.8zM40.3 0.6h.8v1.3h-.8zM41.2 0.6h.8v1.3h-.8zM43.0 0.6h.8v1.3h-.8zM44.8 0.6h.8v1.3h-.8zM46.6 0.6h.8v1.3h-.8zM47.5 0.6h.8v1.3h-.8zM52.9 0.6h.8v1.3h-.8zM10.6 2.4h.8v1.3h-.8zM13.3 2.4h.8v1.3h-.8zM14.2 2.4h.8v1.3h-.8zM15.1 2.4h.8v1.3h-.8zM17.8 2.4h.8v1.3h-.8zM19.6 2.4h.8v1.3h-.8zM20.5 2.4h.8v1.3h-.8zM23.2 2.4h.8v1.3h-.8zM25.9 2.4h.8v1.3h-.8zM30.4 2.4h.8v1.3h-.8zM31.3 2.4h.8v1.3h-.8zM50.2 31.1h.8v1.3h-.8zM57.4 32.9h.8v1.3h-.8zM15.1 72.3h.8v1.3h-.8zM7.0 113.5h.8v1.3h-.8zM9.7 113.5h.8v1.3h-.8zM13.3 113.5h.8v1.3h-.8zM16.9 113.5h.8v1.3h-.8zM18.7 113.5h.8v1.3h-.8zM27.7 113.5h.8v1.3h-.8zM29.5 113.5h.8v1.3h-.8zM30.4 113.5h.8v1.3h-.8zM31.3 113.5h.8v1.3h-.8zM37.6 113.5h.8v1.3h-.8zM39.4 113.5h.8v1.3h-.8zM40.3 113.5h.8v1.3h-.8zM46.6 113.5h.8v1.3h-.8zM50.2 113.5h.8v1.3h-.8zM52.0 113.5h.8v1.3h-.8zM55.6 113.5h.8v1.3h-.8zM10.6 115.3h.8v1.3h-.8zM7.0 135.0h.8v1.3h-.8zM15.1 135.0h.8v1.3h-.8zM16.9 135.0h.8v1.3h-.8zM17.8 135.0h.8v1.3h-.8zM21.4 135.0h.8v1.3h-.8zM22.3 135.0h.8v1.3h-.8zM25.9 135.0h.8v1.3h-.8zM33.1 135.0h.8v1.3h-.8zM34.0 135.0h.8v1.3h-.8zM37.6 135.0h.8v1.3h-.8zM40.3 135.0h.8v1.3h-.8zM42.1 135.0h.8v1.3h-.8zM51.1 135.0h.8v1.3h-.8zM52.0 135.0h.8v1.3h-.8zM54.7 135.0h.8v1.3h-.8zM59.2 135.0h.8v1.3h-.8zM60.1 135.0h.8v1.3h-.8zM61.0 135.0h.8v1.3h-.8zM7.9 136.8h.8v1.3h-.8zM14.2 136.8h.8v1.3h-.8zM16.9 136.8h.8v1.3h-.8zM19.6 136.8h.8v1.3h-.8zM23.2 136.8h.8v1.3h-.8zM25.9 136.8h.8v1.3h-.8zM29.5 136.8h.8v1.3h-.8zM32.2 136.8h.8v1.3h-.8zM34.0 136.8h.8v1.3h-.8zM39.4 136.8h.8v1.3h-.8zM40.3 136.8h.8v1.3h-.8zM45.7 136.8h.8v1.3h-.8zM48.4 136.8h.8v1.3h-.8zM50.2 136.8h.8v1.3h-.8zM52.9 136.8h.8v1.3h-.8zM53.8 136.8h.8v1.3h-.8zM55.6 136.8h.8v1.3h-.8zM60.1 136.8h.8v1.3h-.8zM7.9 138.6h.8v1.3h-.8zM13.3 138.6h.8v1.3h-.8zM19.6 138.6h.8v1.3h-.8zM22.3 138.6h.8v1.3h-.8zM25.0 138.6h.8v1.3h-.8zM34.0 142.2h.8v1.3h-.8zM14.2 145.8h.8v1.3h-.8zM19.6 145.8h.8v1.3h-.8zM21.4 145.8h.8v1.3h-.8zM24.1 145.8h.8v1.3h-.8zM25.9 145.8h.8v1.3h-.8zM26.8 145.8h.8v1.3h-.8zM16.9 147.6h.8v1.3h-.8zM17.8 147.6h.8v1.3h-.8zM18.7 147.6h.8v1.3h-.8zM25.0 147.6h.8v1.3h-.8zM26.8 147.6h.8v1.3h-.8zM30.4 147.6h.8v1.3h-.8zM9.7 151.2h.8v1.3h-.8zM12.4 151.2h.8v1.3h-.8zM13.3 151.2h.8v1.3h-.8zM16.0 151.2h.8v1.3h-.8zM18.7 151.2h.8v1.3h-.8zM24.1 151.2h.8v1.3h-.8zM25.9 151.2h.8v1.3h-.8zM26.8 151.2h.8v1.3h-.8zM31.3 151.2h.8v1.3h-.8zM34.9 151.2h.8v1.3h-.8zM41.2 151.2h.8v1.3h-.8zM44.8 151.2h.8v1.3h-.8zM47.5 151.2h.8v1.3h-.8zM49.3 151.2h.8v1.3h-.8zM50.2 151.2h.8v1.3h-.8zM54.7 151.2h.8v1.3h-.8zM59.2 151.2h.8v1.3h-.8zM12.4 152.9h.8v1.3h-.8zM13.3 152.9h.8v1.3h-.8zM16.9 152.9h.8v1.3h-.8zM21.4 152.9h.8v1.3h-.8zM24.1 152.9h.8v1.3h-.8zM27.7 152.9h.8v1.3h-.8zM28.6 152.9h.8v1.3h-.8zM29.5 152.9h.8v1.3h-.8zM32.2 152.9h.8v1.3h-.8zM34.9 152.9h.8v1.3h-.8zM35.8 152.9h.8v1.3h-.8zM39.4 152.9h.8v1.3h-.8zM42.1 152.9h.8v1.3h-.8zM43.9 152.9h.8v1.3h-.8zM44.8 152.9h.8v1.3h-.8zM45.7 152.9h.8v1.3h-.8zM47.5 152.9h.8v1.3h-.8zM56.5 152.9h.8v1.3h-.8zM59.2 152.9h.8v1.3h-.8zM11.5 154.7h.8v1.3h-.8zM13.3 154.7h.8v1.3h-.8zM15.1 154.7h.8v1.3h-.8zM27.7 154.7h.8v1.3h-.8zM30.4 154.7h.8v1.3h-.8zM34.0 154.7h.8v1.3h-.8zM39.4 154.7h.8v1.3h-.8zM43.0 154.7h.8v1.3h-.8zM52.0 154.7h.8v1.3h-.8zM55.6 154.7h.8v1.3h-.8zM8.8 156.5h.8v1.3h-.8zM15.1 156.5h.8v1.3h-.8zM18.7 156.5h.8v1.3h-.8zM19.6 156.5h.8v1.3h-.8zM20.5 156.5h.8v1.3h-.8zM28.6 156.5h.8v1.3h-.8zM36.7 156.5h.8v1.3h-.8zM39.4 156.5h.8v1.3h-.8zM41.2 156.5h.8v1.3h-.8zM52.0 156.5h.8v1.3h-.8zM55.6 156.5h.8v1.3h-.8zM7.0 158.3h.8v1.3h-.8zM7.9 158.3h.8v1.3h-.8zM20.5 158.3h.8v1.3h-.8zM31.3 158.3h.8v1.3h-.8zM46.6 158.3h.8v1.3h-.8zM47.5 158.3h.8v1.3h-.8zM52.9 158.3h.8v1.3h-.8zM53.8 158.3h.8v1.3h-.8zM54.7 158.3h.8v1.3h-.8zM57.4 158.3h.8v1.3h-.8zM15.1 160.1h.8v1.3h-.8zM16.0 165.5h.8v1.3h-.8zM20.5 165.5h.8v1.3h-.8zM23.2 165.5h.8v1.3h-.8zM25.9 165.5h.8v1.3h-.8zM16.0 167.3h.8v1.3h-.8zM25.0 167.3h.8v1.3h-.8zM27.7 167.3h.8v1.3h-.8zM29.5 167.3h.8v1.3h-.8zM31.3 167.3h.8v1.3h-.8zM34.9 167.3h.8v1.3h-.8zM35.8 167.3h.8v1.3h-.8zM9.7 178.0h.8v1.3h-.8zM19.6 178.0h.8v1.3h-.8zM20.5 178.0h.8v1.3h-.8zM21.4 178.0h.8v1.3h-.8zM25.9 178.0h.8v1.3h-.8zM30.4 178.0h.8v1.3h-.8zM34.0 178.0h.8v1.3h-.8zM44.8 178.0h.8v1.3h-.8zM45.7 178.0h.8v1.3h-.8zM48.4 178.0h.8v1.3h-.8zM50.2 178.0h.8v1.3h-.8zM53.8 178.0h.8v1.3h-.8zM58.3 178.0h.8v1.3h-.8zM34.0 188.8h.8v1.3h-.8zM52.9 188.8h.8v1.3h-.8zM55.6 188.8h.8v1.3h-.8zM58.3 188.8h.8v1.3h-.8zM60.1 188.8h.8v1.3h-.8zM9.7 196.0h.8v1.3h-.8zM14.2 196.0h.8v1.3h-.8zM16.9 196.0h.8v1.3h-.8zM21.4 196.0h.8v1.3h-.8zM22.3 196.0h.8v1.3h-.8zM26.8 196.0h.8v1.3h-.8zM32.2 196.0h.8v1.3h-.8zM41.2 196.0h.8v1.3h-.8zM45.7 196.0h.8v1.3h-.8zM48.4 196.0h.8v1.3h-.8zM54.7 196.0h.8v1.3h-.8zM59.2 196.0h.8v1.3h-.8zM16.9 197.7h.8v1.3h-.8zM19.6 197.7h.8v1.3h-.8zM21.4 197.7h.8v1.3h-.8zM23.2 197.7h.8v1.3h-.8zM24.1 197.7h.8v1.3h-.8zM25.0 197.7h.8v1.3h-.8zM27.7 197.7h.8v1.3h-.8zM31.3 197.7h.8v1.3h-.8zM32.2 197.7h.8v1.3h-.8zM36.7 197.7h.8v1.3h-.8zM9.7 199.5h.8v1.3h-.8zM9.7 201.3h.8v1.3h-.8zM10.6 201.3h.8v1.3h-.8zM11.5 201.3h.8v1.3h-.8zM12.4 201.3h.8v1.3h-.8zM16.0 201.3h.8v1.3h-.8zM19.6 201.3h.8v1.3h-.8zM23.2 201.3h.8v1.3h-.8zM30.4 201.3h.8v1.3h-.8zM31.3 201.3h.8v1.3h-.8zM32.2 201.3h.8v1.3h-.8zM33.1 201.3h.8v1.3h-.8zM45.7 201.3h.8v1.3h-.8zM48.4 201.3h.8v1.3h-.8zM11.5 203.1h.8v1.3h-.8zM12.4 203.1h.8v1.3h-.8zM16.0 203.1h.8v1.3h-.8zM19.6 203.1h.8v1.3h-.8zM20.5 203.1h.8v1.3h-.8zM23.2 203.1h.8v1.3h-.8zM29.5 203.1h.8v1.3h-.8zM30.4 203.1h.8v1.3h-.8zM34.0 203.1h.8v1.3h-.8zM52.0 203.1h.8v1.3h-.8zM52.9 203.1h.8v1.3h-.8zM54.7 203.1h.8v1.3h-.8zM8.8 204.9h.8v1.3h-.8zM12.4 204.9h.8v1.3h-.8zM15.1 204.9h.8v1.3h-.8zM26.8 204.9h.8v1.3h-.8zM27.7 204.9h.8v1.3h-.8zM34.9 204.9h.8v1.3h-.8zM48.4 204.9h.8v1.3h-.8zM52.0 204.9h.8v1.3h-.8zM40.3 228.2h.8v1.3h-.8zM47.5 231.8h.8v1.3h-.8zM16.9 240.8h.8v1.3h-.8zM16.9 242.5h.8v1.3h-.8zM48.4 249.7h.8v1.3h-.8zM48.4 267.6h.8v1.3h-.8zM34.0 282.0h.8v1.3h-.8zM36.7 283.8h.8v1.3h-.8zM37.6 283.8h.8v1.3h-.8zM10.6 285.6h.8v1.3h-.8zM12.4 285.6h.8v1.3h-.8zM17.8 285.6h.8v1.3h-.8zM18.7 285.6h.8v1.3h-.8zM20.5 285.6h.8v1.3h-.8zM25.9 285.6h.8v1.3h-.8zM28.6 285.6h.8v1.3h-.8zM30.4 285.6h.8v1.3h-.8zM33.1 285.6h.8v1.3h-.8zM37.6 285.6h.8v1.3h-.8zM38.5 285.6h.8v1.3h-.8zM40.3 285.6h.8v1.3h-.8zM10.6 289.1h.8v1.3h-.8zM11.5 289.1h.8v1.3h-.8zM13.3 289.1h.8v1.3h-.8zM16.0 289.1h.8v1.3h-.8zM16.9 289.1h.8v1.3h-.8zM23.2 289.1h.8v1.3h-.8zM33.1 289.1h.8v1.3h-.8zM35.8 289.1h.8v1.3h-.8zM34.0 290.9h.8v1.3h-.8zM28.6 292.7h.8v1.3h-.8zM14.2 310.6h.8v1.3h-.8zM17.8 310.6h.8v1.3h-.8zM26.8 310.6h.8v1.3h-.8zM34.0 310.6h.8v1.3h-.8zM35.8 310.6h.8v1.3h-.8zM12.4 314.2h.8v1.3h-.8zM14.2 314.2h.8v1.3h-.8zM14.2 328.6h.8v1.3h-.8zM15.1 328.6h.8v1.3h-.8zM16.0 328.6h.8v1.3h-.8zM17.8 328.6h.8v1.3h-.8zM19.6 328.6h.8v1.3h-.8zM20.5 328.6h.8v1.3h-.8zM21.4 328.6h.8v1.3h-.8zM25.0 328.6h.8v1.3h-.8zM27.7 328.6h.8v1.3h-.8zM33.1 328.6h.8v1.3h-.8zM39.4 328.6h.8v1.3h-.8zM43.9 328.6h.8v1.3h-.8zM45.7 328.6h.8v1.3h-.8zM48.4 328.6h.8v1.3h-.8zM51.1 328.6h.8v1.3h-.8zM52.0 328.6h.8v1.3h-.8zM16.0 332.1h.8v1.3h-.8zM16.9 332.1h.8v1.3h-.8zM19.6 332.1h.8v1.3h-.8zM20.5 332.1h.8v1.3h-.8zM25.0 332.1h.8v1.3h-.8zM27.7 332.1h.8v1.3h-.8zM31.3 332.1h.8v1.3h-.8zM42.1 332.1h.8v1.3h-.8zM43.0 332.1h.8v1.3h-.8zM49.3 332.1h.8v1.3h-.8zM54.7 332.1h.8v1.3h-.8zM8.8 333.9h.8v1.3h-.8zM13.3 333.9h.8v1.3h-.8zM21.4 333.9h.8v1.3h-.8zM34.0 333.9h.8v1.3h-.8zM38.5 333.9h.8v1.3h-.8zM40.3 333.9h.8v1.3h-.8zM34.9 335.7h.8v1.3h-.8zM9.7 348.3h.8v1.3h-.8zM12.4 348.3h.8v1.3h-.8zM15.1 348.3h.8v1.3h-.8zM17.8 348.3h.8v1.3h-.8zM19.6 348.3h.8v1.3h-.8zM24.1 348.3h.8v1.3h-.8zM27.7 348.3h.8v1.3h-.8zM31.3 348.3h.8v1.3h-.8zM42.1 348.3h.8v1.3h-.8zM44.8 348.3h.8v1.3h-.8zM57.4 348.3h.8v1.3h-.8zM9.7 350.1h.8v1.3h-.8zM10.6 350.1h.8v1.3h-.8zM11.5 350.1h.8v1.3h-.8zM16.9 350.1h.8v1.3h-.8zM32.2 350.1h.8v1.3h-.8zM35.8 350.1h.8v1.3h-.8zM42.1 350.1h.8v1.3h-.8zM52.9 350.1h.8v1.3h-.8zM56.5 350.1h.8v1.3h-.8zM57.4 350.1h.8v1.3h-.8zM58.3 350.1h.8v1.3h-.8zM61.0 350.1h.8v1.3h-.8zM16.0 351.9h.8v1.3h-.8zM23.2 351.9h.8v1.3h-.8zM29.5 351.9h.8v1.3h-.8zM33.1 351.9h.8v1.3h-.8zM39.4 351.9h.8v1.3h-.8zM49.3 351.9h.8v1.3h-.8zM56.5 351.9h.8v1.3h-.8zM58.3 351.9h.8v1.3h-.8zM61.0 351.9h.8v1.3h-.8zM9.7 355.4h.8v1.3h-.8zM10.6 355.4h.8v1.3h-.8zM24.1 355.4h.8v1.3h-.8zM40.3 355.4h.8v1.3h-.8zM41.2 355.4h.8v1.3h-.8zM43.9 355.4h.8v1.3h-.8zM45.7 355.4h.8v1.3h-.8zM46.6 355.4h.8v1.3h-.8zM47.5 355.4h.8v1.3h-.8zM11.5 398.5h.8v1.3h-.8zM13.3 398.5h.8v1.3h-.8zM16.9 398.5h.8v1.3h-.8zM19.6 398.5h.8v1.3h-.8zM29.5 398.5h.8v1.3h-.8zM30.4 398.5h.8v1.3h-.8zM31.3 398.5h.8v1.3h-.8zM33.1 398.5h.8v1.3h-.8zM42.1 398.5h.8v1.3h-.8zM52.0 398.5h.8v1.3h-.8zM52.9 398.5h.8v1.3h-.8zM56.5 398.5h.8v1.3h-.8zM57.4 398.5h.8v1.3h-.8zM59.2 398.5h.8v1.3h-.8zM11.5 407.4h.8v1.3h-.8zM22.3 407.4h.8v1.3h-.8zM30.4 407.4h.8v1.3h-.8zM31.3 407.4h.8v1.3h-.8zM32.2 407.4h.8v1.3h-.8zM34.0 407.4h.8v1.3h-.8zM44.8 407.4h.8v1.3h-.8zM45.7 407.4h.8v1.3h-.8zM47.5 407.4h.8v1.3h-.8zM49.3 407.4h.8v1.3h-.8zM50.2 407.4h.8v1.3h-.8zM60.1 407.4h.8v1.3h-.8zM61.0 407.4h.8v1.3h-.8zM13.3 409.2h.8v1.3h-.8zM25.9 409.2h.8v1.3h-.8zM13.3 412.8h.8v1.3h-.8zM20.5 412.8h.8v1.3h-.8zM22.3 412.8h.8v1.3h-.8zM23.2 412.8h.8v1.3h-.8zM25.9 412.8h.8v1.3h-.8zM29.5 412.8h.8v1.3h-.8zM33.1 412.8h.8v1.3h-.8zM36.7 412.8h.8v1.3h-.8zM37.6 412.8h.8v1.3h-.8zM41.2 412.8h.8v1.3h-.8zM42.1 412.8h.8v1.3h-.8zM43.0 412.8h.8v1.3h-.8zM45.7 412.8h.8v1.3h-.8zM10.6 414.6h.8v1.3h-.8zM11.5 414.6h.8v1.3h-.8zM22.3 414.6h.8v1.3h-.8zM24.1 414.6h.8v1.3h-.8zM36.7 414.6h.8v1.3h-.8zM38.5 414.6h.8v1.3h-.8zM44.8 414.6h.8v1.3h-.8zM45.7 414.6h.8v1.3h-.8zM47.5 414.6h.8v1.3h-.8zM49.3 414.6h.8v1.3h-.8zM61.0 414.6h.8v1.3h-.8zM16.0 416.4h.8v1.3h-.8zM23.2 416.4h.8v1.3h-.8zM25.9 416.4h.8v1.3h-.8zM29.5 416.4h.8v1.3h-.8zM31.3 416.4h.8v1.3h-.8zM33.1 416.4h.8v1.3h-.8zM35.8 416.4h.8v1.3h-.8zM38.5 416.4h.8v1.3h-.8zM41.2 416.4h.8v1.3h-.8zM46.6 416.4h.8v1.3h-.8zM50.2 416.4h.8v1.3h-.8zM52.0 416.4h.8v1.3h-.8zM52.9 416.4h.8v1.3h-.8zM60.1 416.4h.8v1.3h-.8zM10.6 418.2h.8v1.3h-.8zM12.4 418.2h.8v1.3h-.8zM27.7 418.2h.8v1.3h-.8zM34.0 418.2h.8v1.3h-.8zM34.9 418.2h.8v1.3h-.8zM39.4 418.2h.8v1.3h-.8zM45.7 418.2h.8v1.3h-.8zM59.2 418.2h.8v1.3h-.8zM11.5 420.0h.8v1.3h-.8zM17.8 420.0h.8v1.3h-.8zM20.5 420.0h.8v1.3h-.8zM22.3 420.0h.8v1.3h-.8zM25.9 420.0h.8v1.3h-.8zM28.6 420.0h.8v1.3h-.8zM29.5 420.0h.8v1.3h-.8zM35.8 420.0h.8v1.3h-.8zM36.7 420.0h.8v1.3h-.8zM39.4 420.0h.8v1.3h-.8zM43.0 420.0h.8v1.3h-.8zM43.9 420.0h.8v1.3h-.8zM52.0 420.0h.8v1.3h-.8zM52.9 420.0h.8v1.3h-.8zM53.8 420.0h.8v1.3h-.8zM11.5 421.7h.8v1.3h-.8zM22.3 421.7h.8v1.3h-.8zM25.0 421.7h.8v1.3h-.8zM25.9 421.7h.8v1.3h-.8zM28.6 421.7h.8v1.3h-.8zM31.3 421.7h.8v1.3h-.8zM34.9 421.7h.8v1.3h-.8zM39.4 421.7h.8v1.3h-.8zM41.2 421.7h.8v1.3h-.8zM43.9 421.7h.8v1.3h-.8zM46.6 421.7h.8v1.3h-.8zM49.3 421.7h.8v1.3h-.8zM53.8 421.7h.8v1.3h-.8zM57.4 421.7h.8v1.3h-.8zM59.2 421.7h.8v1.3h-.8zM60.1 421.7h.8v1.3h-.8zM10.6 423.5h.8v1.3h-.8zM11.5 423.5h.8v1.3h-.8zM16.9 423.5h.8v1.3h-.8zM24.1 423.5h.8v1.3h-.8zM25.0 423.5h.8v1.3h-.8zM29.5 423.5h.8v1.3h-.8zM31.3 423.5h.8v1.3h-.8zM33.1 423.5h.8v1.3h-.8zM35.8 423.5h.8v1.3h-.8zM38.5 423.5h.8v1.3h-.8zM40.3 423.5h.8v1.3h-.8zM43.0 423.5h.8v1.3h-.8zM43.9 423.5h.8v1.3h-.8zM45.7 423.5h.8v1.3h-.8zM49.3 423.5h.8v1.3h-.8zM54.7 423.5h.8v1.3h-.8zM56.5 423.5h.8v1.3h-.8zM60.1 423.5h.8v1.3h-.8zM61.0 423.5h.8v1.3h-.8zM14.2 430.7h.8v1.3h-.8zM15.1 430.7h.8v1.3h-.8zM17.8 430.7h.8v1.3h-.8zM20.5 430.7h.8v1.3h-.8zM21.4 430.7h.8v1.3h-.8zM25.9 430.7h.8v1.3h-.8zM26.8 430.7h.8v1.3h-.8zM30.4 430.7h.8v1.3h-.8zM34.0 430.7h.8v1.3h-.8zM40.3 430.7h.8v1.3h-.8zM43.0 430.7h.8v1.3h-.8zM43.9 430.7h.8v1.3h-.8zM49.3 430.7h.8v1.3h-.8zM51.1 430.7h.8v1.3h-.8zM52.9 430.7h.8v1.3h-.8zM60.1 430.7h.8v1.3h-.8zM12.4 432.5h.8v1.3h-.8zM13.3 432.5h.8v1.3h-.8zM14.2 432.5h.8v1.3h-.8zM24.1 432.5h.8v1.3h-.8zM25.0 432.5h.8v1.3h-.8zM32.2 432.5h.8v1.3h-.8zM34.9 432.5h.8v1.3h-.8zM35.8 432.5h.8v1.3h-.8zM38.5 432.5h.8v1.3h-.8zM39.4 432.5h.8v1.3h-.8zM45.7 432.5h.8v1.3h-.8zM46.6 432.5h.8v1.3h-.8zM49.3 432.5h.8v1.3h-.8zM53.8 432.5h.8v1.3h-.8zM54.7 432.5h.8v1.3h-.8zM24.1 434.3h.8v1.3h-.8zM29.5 434.3h.8v1.3h-.8zM36.7 434.3h.8v1.3h-.8zM37.6 434.3h.8v1.3h-.8zM12.4 436.1h.8v1.3h-.8zM15.1 436.1h.8v1.3h-.8zM20.5 436.1h.8v1.3h-.8zM24.1 436.1h.8v1.3h-.8zM25.9 436.1h.8v1.3h-.8zM28.6 436.1h.8v1.3h-.8zM30.4 436.1h.8v1.3h-.8zM36.7 436.1h.8v1.3h-.8zM39.4 436.1h.8v1.3h-.8zM46.6 436.1h.8v1.3h-.8zM52.0 436.1h.8v1.3h-.8zM56.5 436.1h.8v1.3h-.8zM57.4 436.1h.8v1.3h-.8z"/><path fill="#7b3814" fill-opacity="0.38" d="M53.8 32.9h.8v1.3h-.8zM34.0 49.0h.8v1.3h-.8zM18.7 50.8h.8v1.3h-.8zM18.7 56.2h.8v1.3h-.8zM13.3 425.3h.8v1.3h-.8z"/><path fill="#7b3814" fill-opacity="0.58" d="M34.0 50.8h.8v1.3h-.8zM26.8 56.2h.8v1.3h-.8zM31.3 72.3h.8v1.3h-.8z"/><path fill="#7b3814" fill-opacity="0.78" d="M52.0 32.9h.8v1.3h-.8zM43.0 49.0h.8v1.3h-.8zM67.3 72.3h.8v1.3h-.8zM14.2 425.3h.8v1.3h-.8z"/></svg></div><div id="mmsh"></div><div id="mmb"></div><div id="ovr"><div id="cur"></div></div><div id="spl"></div><div id="re"><div class="bg" style="top:62px;height:17px;left:63.0px;background:#fde3c9"></div><div class="bg" style="top:79px;height:17px;left:63.0px;background:#e3f1d2"></div><div class="bg" style="top:96px;height:18px;left:63.0px;background:#fdebf5"></div><div class="bg" style="top:114px;height:17px;left:63.0px;background:#fde3c9"></div><div class="bg" style="top:131px;height:17px;left:63.0px;background:#e6e4f2"></div><div class="bg" style="top:148px;height:17px;left:63.0px;background:#d6efe7"></div><div class="bg" style="top:165px;height:17px;left:63.0px;background:#e7d4e8"></div><div class="bg" style="top:182px;height:17px;left:63.0px;background:#fde3c9"></div><div class="bg" style="top:199px;height:17px;left:63.0px;background:#fde3c9"></div><div class="bg" style="top:216px;height:17px;left:63.0px;background:#fefde1"></div><div class="bg" style="top:233px;height:17px;left:63.0px;background:#fde3c9"></div><div class="bg" style="top:267px;height:17px;left:63.0px;background:#f0f0f0"></div><div class="bg" style="top:284px;height:18px;left:63.0px;background:#fdd2d2"></div><div class="bg" style="top:302px;height:17px;left:63.0px;background:#e7d4e8"></div><div class="bg" style="top:319px;height:17px;left:63.0px;background:#ebf5eb"></div><div class="bg" style="top:336px;height:17px;left:63.0px;background:#ebf5eb"></div><div class="bg" style="top:353px;height:17px;left:63.0px;background:#e6e4f2"></div><div class="bg" style="top:370px;height:17px;left:63.0px;background:#e6e4f2"></div><div class="bg" style="top:387px;height:17px;left:63.0px;background:#fdd2d2"></div><div class="bg" style="top:404px;height:17px;left:63.0px;background:#e3f1d2"></div><div class="bg" style="top:421px;height:17px;left:63.0px;background:#e3f1d2"></div><div class="gb" style="left:39px;top:62.20px"></div><div class="gb" style="left:39px;top:113.50px"></div><div class="gb" style="left:39px;top:181.90px"></div><div class="gb" style="left:39px;top:199.00px"></div><div class="gb" style="left:39px;top:233.20px"></div><div class="ln" style="top:-4.90px;left:-0.70px;width:40px">43</div><div class="tl" style="top:-5.40px;left:62.50px">        <span class="k">add     </span><span class="t">x15</span>, <span class="t">x15</span>, :<span class="t">lo12</span>:<span class="lk">pattern_generation_masks</span></div><div class="ln" style="top:12.20px;left:-0.70px;width:40px">44</div><div class="tl" style="top:11.70px;left:62.50px">        <span class="k">adrp    </span><span class="t">x16</span>, <span class="lk">pattern_reshuffle_masks</span></div><div class="ln" style="top:29.30px;left:-0.70px;width:40px">45</div><div class="tl" style="top:28.80px;left:62.50px">        <span class="k">add     </span><span class="t">x16</span>, <span class="t">x16</span>, :<span class="t">lo12</span>:<span class="lk">pattern_reshuffle_masks</span></div><div class="ln" style="top:46.40px;left:-0.70px;width:40px">46</div><div class="tl" style="top:45.90px;left:62.50px"><span class="t">.LBB1_3:</span>                                <span class="t">// =&gt;This Inner Loop Header: Depth=1</span></div><div class="ln" style="top:63.50px;left:-0.70px;width:40px">47</div><div class="tl" style="top:63.00px;left:62.50px">        <span class="k">ands    </span><span class="t">x4</span>, <span class="t">x17</span>, <span class="n">#0x3</span></div><div class="ln" style="top:80.60px;left:-0.70px;width:40px">48</div><div class="tl" style="top:80.10px;left:62.50px">        <span class="k">add     </span><span class="t">x18</span>, <span class="t">x17</span>, <span class="n">#4</span></div><div class="ln" style="top:97.70px;left:-0.70px;width:40px">49</div><div class="tl" style="top:97.20px;left:62.50px">        <span class="k">ldrsh   </span><span class="t">x6</span>, [<span class="t">x11</span>, <span class="t">x17</span>, <span class="t">lsl</span> <span class="n">#1</span>]</div><div class="ln" style="top:114.80px;left:-0.70px;width:40px">50</div><div class="tl" style="top:114.30px;left:62.50px">        <span class="k">lsr     </span><span class="t">x17</span>, <span class="t">x18</span>, <span class="n">#2</span></div><div class="ln" style="top:131.90px;left:-0.70px;width:40px">51</div><div class="tl" style="top:131.40px;left:62.50px">        <span class="k">orr     </span><span class="t">x2</span>, <span class="t">x12</span>, <span class="t">x4</span>, <span class="t">lsl</span> <span class="n">#1</span></div><div class="ln" style="top:149.00px;left:-0.70px;width:40px">52</div><div class="tl" style="top:148.50px;left:62.50px">        <span class="k">str     </span><span class="t">x10</span>, [<span class="p">sp</span>, <span class="n">#8</span>]</div><div class="ln" style="top:166.10px;left:-0.70px;width:40px">53</div><div class="tl" style="top:165.60px;left:62.50px">        <span class="k">ldr     </span><span class="t">w5</span>, [<span class="t">x0</span>]</div><div class="ln" style="top:183.20px;left:-0.70px;width:40px">54</div><div class="tl" style="top:182.70px;left:62.50px">        <span class="k">csinc   </span><span class="t">x18</span>, <span class="t">x4</span>, <span class="t">x17</span>, <span class="t">ne</span></div><div class="ln" style="top:200.30px;left:-0.70px;width:40px">55</div><div class="tl" style="top:199.80px;left:62.50px">        <span class="k">add     </span><span class="t">x17</span>, <span class="t">x17</span>, <span class="n">#2</span></div><div class="ln" style="top:217.40px;left:-0.70px;width:40px">56</div><div class="tl" style="top:216.90px;left:62.50px">        <span class="k">ldrh    </span><span class="t">w7</span>, [<span class="t">x2</span>]</div><div class="ln" style="top:234.50px;left:-0.70px;width:40px">57</div><div class="tl" style="top:234.00px;left:62.50px">        <span class="k">csinc   </span><span class="t">x2</span>, <span class="t">x17</span>, <span class="t">x4</span>, <span class="t">eq</span></div><div class="ln" style="top:251.60px;left:-0.70px;width:40px">58</div><div class="tl" style="top:251.10px;left:62.50px">        <span class="k">ldrb    </span><span class="t">w18</span>, [<span class="t">x0</span>, <span class="t">x18</span>]</div><div class="ln" style="top:268.70px;left:-0.70px;width:40px">59</div><div class="tl" style="top:268.20px;left:62.50px">        <span class="k">and     </span><span class="t">x17</span>, <span class="t">x6</span>, <span class="n">#0xff</span></div><div class="ln" style="top:285.80px;left:-0.70px;width:40px">60</div><div class="tl" style="top:285.30px;left:62.50px">        <span class="k">and     </span><span class="t">x5</span>, <span class="t">x5</span>, <span class="t">x7</span></div><div class="ln" style="top:302.90px;left:-0.70px;width:40px">61</div><div class="tl" style="top:302.40px;left:62.50px">        <span class="k">sub     </span><span class="t">x5</span>, <span class="t">x6</span>, <span class="t">x5</span></div><div class="ln" style="top:320.00px;left:-0.70px;width:40px">62</div><div class="tl" style="top:319.50px;left:62.50px">        <span class="k">cmp     </span><span class="t">x5</span>, <span class="n">#1</span></div><div class="ln" style="top:337.10px;left:-0.70px;width:40px">63</div><div class="tl" style="top:336.60px;left:62.50px">        <span class="k">b.ge    </span><span class="lk">.LBB1_11</span></div><div class="ln" style="top:354.20px;left:-0.70px;width:40px">64</div><div class="tl" style="top:353.70px;left:62.50px">        <span class="k">add     </span><span class="t">x5</span>, <span class="t">x5</span>, <span class="t">x1</span></div><div class="ln" style="top:371.30px;left:-0.70px;width:40px">65</div><div class="tl" style="top:370.80px;left:62.50px">        <span class="k">subs    </span><span class="t">x5</span>, <span class="t">x5</span>, <span class="t">x17</span></div><div class="ln" style="top:388.40px;left:-0.70px;width:40px">66</div><div class="tl" style="top:387.90px;left:62.50px">        <span class="k">b.mi    </span><span class="lk">.LBB1_26</span></div><div class="ln" style="top:405.50px;left:-0.70px;width:40px">67</div><div class="tl" style="top:405.00px;left:62.50px">        <span class="k">add     </span><span class="t">x5</span>, <span class="t">x3</span>, <span class="t">x5</span></div><div class="ln" style="top:422.60px;left:-0.70px;width:40px">68</div><div class="tl" style="top:422.10px;left:62.50px">        <span class="k">cmp     </span><span class="t">x4</span>, <span class="n">#0</span></div></div></body></html>
